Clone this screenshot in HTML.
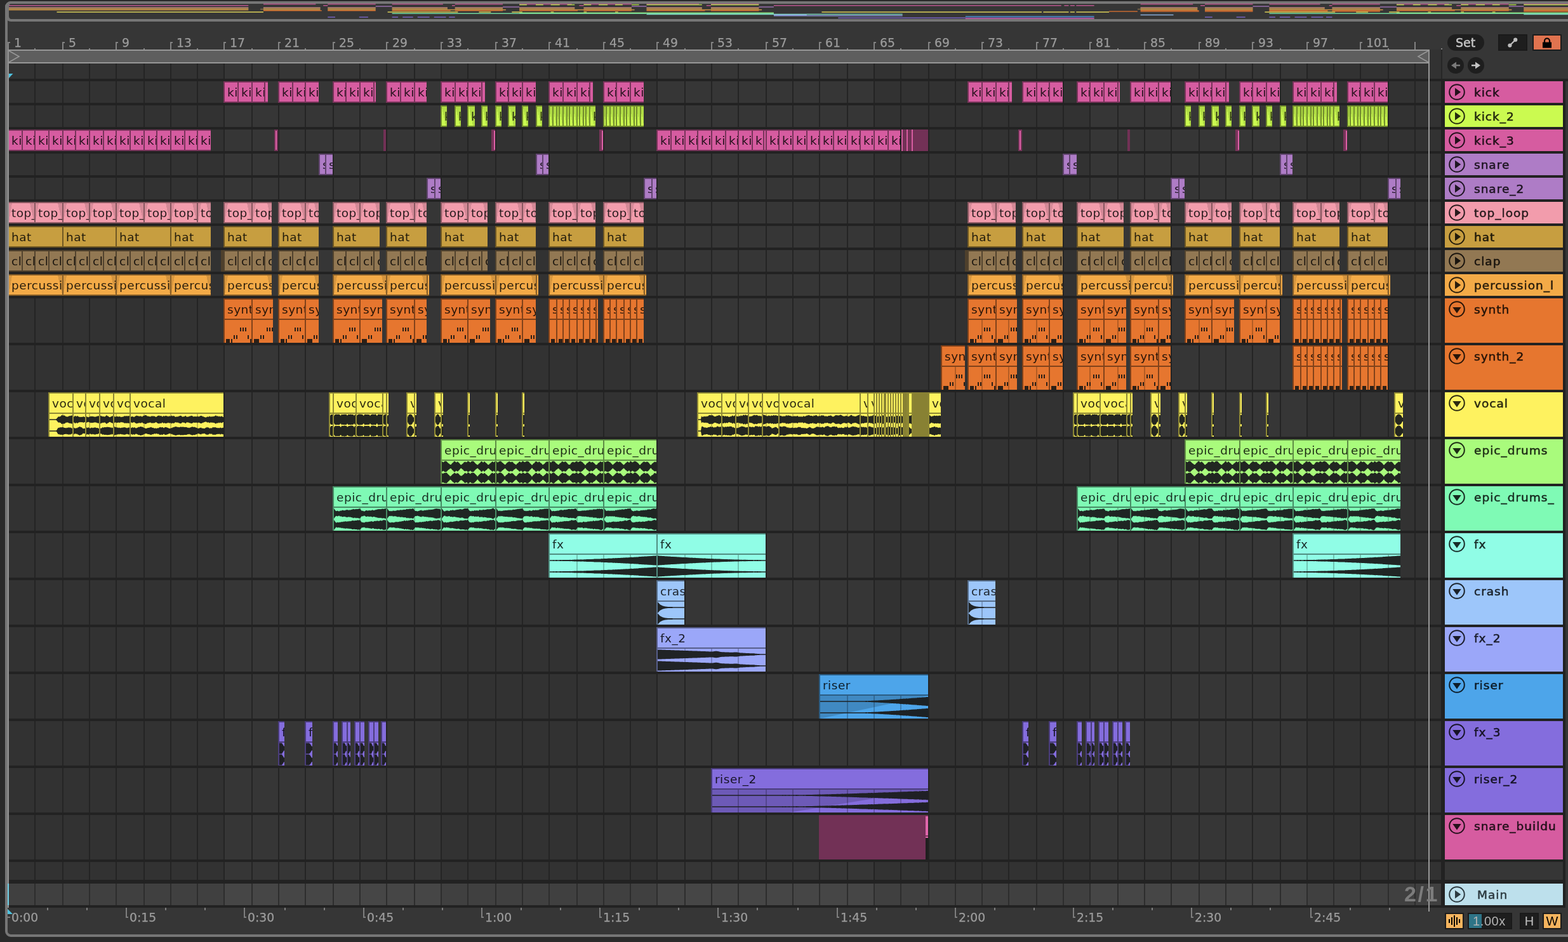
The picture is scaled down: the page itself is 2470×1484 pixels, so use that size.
<!DOCTYPE html><html><head><meta charset="utf-8"><title>Arrangement</title><style>
html,body{margin:0;padding:0}
body{width:2470px;height:1484px;background:#2a2a2a;position:relative;overflow:hidden;font-family:"DejaVu Sans","Liberation Sans",sans-serif}
div,i,b,s,u{position:absolute;box-sizing:border-box;font-style:normal;font-weight:normal;text-decoration:none}
svg{position:absolute;left:0;top:0;overflow:visible}
#frame{left:8px;top:2px;width:2500px;height:1474px;border:4px solid #767676;border-radius:9px;background:#363636}
#ov{left:8px;top:2px;width:2500px;height:32px;border:4px solid #767676;border-left-width:6px;border-radius:9px;background:#363636}
#grid{left:12px;top:100px;width:2258px;height:1330px;background:#323232}
.sep{left:12px;width:2458px;height:4px;background:#222}
#brace{left:12px;top:78px;width:2240px;height:22px;background:#5e5e5e;border:2px solid #979797}
.r{left:0;width:2270px;height:34px}
.r.t{height:70px}
.c{top:0;height:100%;border:2px solid var(--b);border-right:0;background:var(--f);color:var(--t);overflow:hidden;white-space:nowrap;font-size:18.5px;letter-spacing:.5px;line-height:32px;text-indent:4px}
.t .c{border-bottom:0;background:linear-gradient(var(--b),var(--b)) 0 30px/100% 2px no-repeat,var(--f)}
.c.mut{background:var(--m);border-color:var(--m)}
.c.sl{border-right:2px solid var(--b);background:#de62a8}
.c.sl2{border-left-width:4px;background:#de62a8}
.c.thin{border:0}
.c.nbw{border-left:0;background:linear-gradient(#1f1f1f,#1f1f1f) 0 34px/100% 36px no-repeat,linear-gradient(var(--b),var(--b)) 0 30px/100% 2px no-repeat,#e066ac}
.c.k2{background:linear-gradient(78deg,var(--f) 42%,#b0dc44 43%)}
.c.fd{background:linear-gradient(to bottom right,rgba(0,0,0,.11) 50%,transparent 50.5%) 0 0/5px 30px no-repeat,linear-gradient(to bottom left,rgba(0,0,0,.13) 50%,transparent 50.5%) 100% 0/7px 30px no-repeat,var(--f)}
.h{left:2276px;width:186px;height:34px;background:var(--f);color:var(--t);font:18.5px/36px "DejaVu Sans","Liberation Sans",sans-serif;-webkit-text-stroke:.55px currentColor;letter-spacing:1px;padding-left:46px;white-space:nowrap;overflow:hidden}
.h.t{height:70px}
.rl{font:18.8px/20px "DejaVu Sans","Liberation Sans",sans-serif;color:#9c9c9c;top:58px;white-space:nowrap;-webkit-text-stroke:.25px #9c9c9c}
.tl{font:18.8px/20px "DejaVu Sans","Liberation Sans",sans-serif;color:#9c9c9c;top:1436px;white-space:nowrap;-webkit-text-stroke:.25px #9c9c9c}

.k_kick{--f:#d65ca0;--b:#78345a;--t:#24101b;--m:#723156}
.k_kick_2{--f:#cbfa50;--b:#728c2d;--t:#232a0e;--m:#6d862b}
.k_kick_3{--f:#d65ca0;--b:#78345a;--t:#24101b;--m:#723156}
.k_snare{--f:#ae7cc6;--b:#61456f;--t:#1e1522;--m:#5d426a}
.k_snare_2{--f:#ae7cc6;--b:#61456f;--t:#1e1522;--m:#5d426a}
.k_top_loop{--f:#f29cac;--b:#885760;--t:#291b1d;--m:#81535c}
.k_hat{--f:#c79e40;--b:#6f5824;--t:#221b0b;--m:#6a5522}
.k_clap{--f:#927853;--b:#52432e;--t:#19140e;--m:#4e402c}
.k_percussion_l{--f:#f3aa47;--b:#885f28;--t:#291d0c;--m:#825b26}
.k_synth{--f:#e6762f;--b:#81421a;--t:#271408;--m:#7b3f19}
.k_synth_2{--f:#e6762f;--b:#81421a;--t:#271408;--m:#7b3f19}
.k_vocal{--f:#fef25f;--b:#8e8835;--t:#2b2910;--m:#888133}
.k_epic_drums{--f:#a9fb7c;--b:#5f8d45;--t:#1d2b15;--m:#5a8642}
.k_epic_drums_{--f:#7ffab5;--b:#478c65;--t:#162a1f;--m:#448661}
.k_fx{--f:#90fde6;--b:#518e81;--t:#182b27;--m:#4d877b}
.k_crash{--f:#9dc6fa;--b:#586f8c;--t:#1b222a;--m:#546a86}
.k_fx_2{--f:#9ba7f9;--b:#575e8b;--t:#1a1c2a;--m:#535985}
.k_riser{--f:#4da5ea;--b:#2b5c83;--t:#0d1c28;--m:#29587d}
.k_fx_3{--f:#846ddd;--b:#4a3d7c;--t:#161326;--m:#473a76}
.k_riser_2{--f:#846ddd;--b:#4a3d7c;--t:#161326;--m:#473a76}
.k_snare_buildu{--f:#d65ca0;--b:#78345a;--t:#24101b;--m:#723156}
</style></head><body><div id="all" style="left:0;top:0;width:2470px;height:1484px;will-change:transform">
<div id="frame"></div><div id="ov"></div>
<svg width="2470" height="40" viewBox="0 0 2470 40"><path d="M414.9 6.5H440.8M440.8 6.5H466.7M466.7 6.5H490.3M490.3 6.5H497.4M516.3 6.5H542.2M542.2 6.5H565.8M565.8 6.5H591.7M617.6 6.5H641.2M641.2 6.5H667.2M667.2 6.5H693.1M693.1 6.5H697.8M716.7 6.5H742.6M742.6 6.5H768.6M768.6 6.5H792.1M818.1 6.5H844.0M844.0 6.5H867.6M867.6 6.5H893.5M893.5 6.5H900.6M919.5 6.5H943.1M943.1 6.5H969.0M969.0 6.5H994.9M1018.5 6.5H1044.4M1044.4 6.5H1070.4M1070.4 6.5H1094.0M1094.0 6.5H1101.0M1119.9 6.5H1143.5M1143.5 6.5H1169.4M1169.4 6.5H1195.4M1796.6 6.5H1822.6M1822.6 6.5H1848.5M1848.5 6.5H1872.1M1872.1 6.5H1879.2M1898.0 6.5H1924.0M1924.0 6.5H1947.6M1947.6 6.5H1973.5M1999.4 6.5H2023.0M2023.0 6.5H2049.0M2049.0 6.5H2074.9M2074.9 6.5H2079.6M2098.5 6.5H2124.4M2124.4 6.5H2150.3M2150.3 6.5H2173.9M2199.9 6.5H2225.8M2225.8 6.5H2249.4M2249.4 6.5H2275.3M2275.3 6.5H2282.4M2301.3 6.5H2324.8M2324.8 6.5H2350.8M2350.8 6.5H2376.7M2400.3 6.5H2426.2M2426.2 6.5H2452.2M2452.2 6.5H2475.8" stroke="#b9558d" stroke-width="1.5" fill="none"/><path d="M818.1 7.6H829.9M844.0 7.6H855.8M867.6 7.6H881.7M893.5 7.6H905.3M919.5 7.6H931.3M943.1 7.6H957.2M969.0 7.6H980.8M994.9 7.6H1006.7M1018.5 7.6H1025.6M1025.6 7.6H1032.7M1032.7 7.6H1037.4M1037.4 7.6H1044.4M1044.4 7.6H1051.5M1051.5 7.6H1056.2M1056.2 7.6H1063.3M1063.3 7.6H1070.4M1070.4 7.6H1075.1M1075.1 7.6H1082.2M1082.2 7.6H1086.9M1086.9 7.6H1094.0M1094.0 7.6H1105.8M1119.9 7.6H1124.6M1124.6 7.6H1131.7M1131.7 7.6H1138.8M1138.8 7.6H1143.5M1143.5 7.6H1150.6M1150.6 7.6H1157.6M1157.6 7.6H1162.3M1162.3 7.6H1169.4M1169.4 7.6H1176.5M1176.5 7.6H1181.2M1181.2 7.6H1188.3M1188.3 7.6H1195.4M2199.9 7.6H2211.7M2225.8 7.6H2237.6M2249.4 7.6H2263.5M2275.3 7.6H2287.1M2301.3 7.6H2313.1M2324.8 7.6H2339.0M2350.8 7.6H2362.6M2376.7 7.6H2388.5M2400.3 7.6H2407.4M2407.4 7.6H2414.4M2414.4 7.6H2419.2M2419.2 7.6H2426.2M2426.2 7.6H2433.3M2433.3 7.6H2438.0M2438.0 7.6H2445.1M2445.1 7.6H2452.2M2452.2 7.6H2456.9M2456.9 7.6H2464.0M2464.0 7.6H2468.7M2468.7 7.6H2475.8" stroke="#b0d74b" stroke-width="1.5" fill="none"/><path d="M14.0 8.8H39.9M39.9 8.8H63.5M63.5 8.8H89.5M89.5 8.8H115.4M115.4 8.8H139.0M139.0 8.8H164.9M164.9 8.8H190.8M190.8 8.8H214.4M214.4 8.8H240.4M240.4 8.8H266.3M266.3 8.8H289.9M289.9 8.8H315.8M315.8 8.8H341.8M341.8 8.8H365.3M365.3 8.8H391.3M509.2 8.8H516.3M712.0 8.8H716.7M912.4 8.8H919.5M1112.8 8.8H1119.9M1218.9 8.8H1244.9M1244.9 8.8H1270.8M1270.8 8.8H1294.4M1294.4 8.8H1320.3M1320.3 8.8H1346.3M1346.3 8.8H1369.9M1369.9 8.8H1395.8M1395.8 8.8H1417.0M1417.0 8.8H1421.7M1421.7 8.8H1445.3M1445.3 8.8H1471.2M1471.2 8.8H1497.2M1497.2 8.8H1520.8M1520.8 8.8H1546.7M1546.7 8.8H1572.6M1572.6 8.8H1596.2M1596.2 8.8H1622.2M1622.2 8.8H1648.1M1648.1 8.8H1671.7M1676.4 8.8H1683.5M1685.8 8.8H1692.9M1695.3 8.8H1723.6M1891.0 8.8H1898.0M2093.8 8.8H2098.5M2294.2 8.8H2301.3" stroke="#b9558d" stroke-width="1.5" fill="none"/><path d="M591.7 9.9H603.5M603.5 9.9H617.6M994.9 9.9H1006.7M1006.7 9.9H1018.5M1973.5 9.9H1985.3M1985.3 9.9H1999.4M2376.7 9.9H2388.5M2388.5 9.9H2400.3" stroke="#986fac" stroke-width="1.5" fill="none"/><path d="M792.1 11.1H806.3M806.3 11.1H818.1M1195.4 11.1H1209.5M1209.5 11.1H1218.9M2173.9 11.1H2188.1M2188.1 11.1H2199.9" stroke="#986fac" stroke-width="1.5" fill="none"/><path d="M14.0 12.2H63.5M63.5 12.2H115.4M115.4 12.2H164.9M164.9 12.2H214.4M214.4 12.2H266.3M266.3 12.2H315.8M315.8 12.2H365.3M365.3 12.2H391.3M414.9 12.2H466.7M466.7 12.2H504.5M516.3 12.2H565.8M565.8 12.2H591.7M617.6 12.2H667.2M667.2 12.2H704.9M716.7 12.2H768.6M768.6 12.2H792.1M818.1 12.2H867.6M867.6 12.2H905.3M919.5 12.2H969.0M969.0 12.2H994.9M1018.5 12.2H1070.4M1070.4 12.2H1105.8M1119.9 12.2H1169.4M1169.4 12.2H1195.4M1796.6 12.2H1848.5M1848.5 12.2H1886.3M1898.0 12.2H1947.6M1947.6 12.2H1973.5M1999.4 12.2H2049.0M2049.0 12.2H2086.7M2098.5 12.2H2150.3M2150.3 12.2H2173.9M2199.9 12.2H2249.4M2249.4 12.2H2287.1M2301.3 12.2H2350.8M2350.8 12.2H2376.7M2400.3 12.2H2452.2M2452.2 12.2H2487.5" stroke="#d08a97" stroke-width="1.5" fill="none"/><path d="M14.0 13.3H115.4M115.4 13.3H214.4M214.4 13.3H315.8M315.8 13.3H391.3M414.9 13.3H504.5M516.3 13.3H591.7M617.6 13.3H704.9M716.7 13.3H792.1M818.1 13.3H905.3M919.5 13.3H994.9M1018.5 13.3H1105.8M1119.9 13.3H1195.4M1796.6 13.3H1886.3M1898.0 13.3H1973.5M1999.4 13.3H2086.7M2098.5 13.3H2173.9M2199.9 13.3H2287.1M2301.3 13.3H2376.7M2400.3 13.3H2487.5" stroke="#ad8b3e" stroke-width="1.5" fill="none"/><path d="M14.0 14.5H39.9M39.9 14.5H63.5M63.5 14.5H89.5M89.5 14.5H115.4M115.4 14.5H139.0M139.0 14.5H164.9M164.9 14.5H190.8M190.8 14.5H214.4M214.4 14.5H240.4M240.4 14.5H266.3M266.3 14.5H289.9M289.9 14.5H315.8M315.8 14.5H341.8M341.8 14.5H365.3M365.3 14.5H391.3M410.1 14.5H414.9M414.9 14.5H440.8M440.8 14.5H466.7M466.7 14.5H490.3M490.3 14.5H504.5M516.3 14.5H542.2M542.2 14.5H565.8M565.8 14.5H591.7M617.6 14.5H641.2M641.2 14.5H667.2M667.2 14.5H693.1M693.1 14.5H704.9M716.7 14.5H742.6M742.6 14.5H768.6M768.6 14.5H792.1M818.1 14.5H844.0M844.0 14.5H867.6M867.6 14.5H893.5M893.5 14.5H905.3M919.5 14.5H943.1M943.1 14.5H969.0M969.0 14.5H994.9M1018.5 14.5H1044.4M1044.4 14.5H1070.4M1070.4 14.5H1094.0M1094.0 14.5H1105.8M1119.9 14.5H1143.5M1143.5 14.5H1169.4M1169.4 14.5H1195.4M1791.9 14.5H1796.6M1796.6 14.5H1822.6M1822.6 14.5H1848.5M1848.5 14.5H1872.1M1872.1 14.5H1886.3M1898.0 14.5H1924.0M1924.0 14.5H1947.6M1947.6 14.5H1973.5M1999.4 14.5H2023.0M2023.0 14.5H2049.0M2049.0 14.5H2074.9M2074.9 14.5H2086.7M2098.5 14.5H2124.4M2124.4 14.5H2150.3M2150.3 14.5H2173.9M2199.9 14.5H2225.8M2225.8 14.5H2249.4M2249.4 14.5H2275.3M2275.3 14.5H2287.1M2301.3 14.5H2324.8M2324.8 14.5H2350.8M2350.8 14.5H2376.7M2400.3 14.5H2426.2M2426.2 14.5H2452.2M2452.2 14.5H2475.8" stroke="#816c4e" stroke-width="1.5" fill="none"/><path d="M14.0 15.6H115.4M115.4 15.6H214.4M214.4 15.6H315.8M315.8 15.6H391.3M414.9 15.6H504.5M516.3 15.6H591.7M617.6 15.6H716.7M716.7 15.6H792.1M792.1 15.6H796.9M818.1 15.6H919.5M919.5 15.6H994.9M994.9 15.6H999.6M1018.5 15.6H1119.9M1119.9 15.6H1195.4M1195.4 15.6H1200.1M1796.6 15.6H1886.3M1898.0 15.6H1973.5M1999.4 15.6H2098.5M2098.5 15.6H2173.9M2173.9 15.6H2178.6M2199.9 15.6H2301.3M2301.3 15.6H2376.7M2376.7 15.6H2381.4M2400.3 15.6H2501.7" stroke="#d19544" stroke-width="1.5" fill="none"/><path d="M414.9 16.8H466.7M466.7 16.8H506.8M516.3 16.8H565.8M565.8 16.8H591.7M617.6 16.8H667.2M667.2 16.8H709.6M716.7 16.8H768.6M768.6 16.8H792.1M818.1 16.8H867.6M867.6 16.8H910.0M919.5 16.8H969.0M969.0 16.8H994.9M1018.5 16.8H1032.7M1032.7 16.8H1044.4M1044.4 16.8H1056.2M1056.2 16.8H1070.4M1070.4 16.8H1082.2M1082.2 16.8H1094.0M1094.0 16.8H1105.8M1105.8 16.8H1110.5M1119.9 16.8H1131.7M1131.7 16.8H1143.5M1143.5 16.8H1157.6M1157.6 16.8H1169.4M1169.4 16.8H1181.2M1181.2 16.8H1195.4M1796.6 16.8H1848.5M1848.5 16.8H1888.6M1898.0 16.8H1947.6M1947.6 16.8H1973.5M1999.4 16.8H2049.0M2049.0 16.8H2091.4M2098.5 16.8H2150.3M2150.3 16.8H2173.9M2199.9 16.8H2249.4M2249.4 16.8H2291.8M2301.3 16.8H2350.8M2350.8 16.8H2376.7M2400.3 16.8H2414.4M2414.4 16.8H2426.2M2426.2 16.8H2438.0M2438.0 16.8H2452.2M2452.2 16.8H2464.0M2464.0 16.8H2475.8" stroke="#c66a30" stroke-width="1.5" fill="none"/><path d="M1747.1 17.9H1791.9M1796.6 17.9H1848.5M1848.5 17.9H1888.6M1898.0 17.9H1947.6M1947.6 17.9H1973.5M1999.4 17.9H2049.0M2049.0 17.9H2091.4M2098.5 17.9H2150.3M2150.3 17.9H2173.9M2400.3 17.9H2414.4M2414.4 17.9H2426.2M2426.2 17.9H2438.0M2438.0 17.9H2452.2M2452.2 17.9H2464.0M2464.0 17.9H2475.8" stroke="#c66a30" stroke-width="1.5" fill="none"/><path d="M89.5 19.0H134.3M134.3 19.0H157.8M157.8 19.0H183.8M183.8 19.0H209.7M209.7 19.0H240.4M240.4 19.0H414.9M610.6 19.0H617.6M617.6 19.0H660.1M660.1 19.0H709.6M709.6 19.0H716.7M716.7 19.0H721.4M754.4 19.0H768.6M768.6 19.0H773.3M806.3 19.0H818.1M818.1 19.0H822.8M867.6 19.0H872.3M919.5 19.0H924.2M969.0 19.0H973.7M1294.4 19.0H1339.2M1339.2 19.0H1365.1M1365.1 19.0H1388.7M1388.7 19.0H1414.7M1414.7 19.0H1445.3M1445.3 19.0H1596.2M1596.2 19.0H1610.4M1610.4 19.0H1622.2M1622.2 19.0H1626.9M1626.9 19.0H1631.6M1631.6 19.0H1636.3M1636.3 19.0H1641.0M1643.4 19.0H1648.1M1648.1 19.0H1652.8M1652.8 19.0H1657.5M1657.5 19.0H1662.2M1662.2 19.0H1667.0M1667.0 19.0H1671.7M1671.7 19.0H1676.4M1676.4 19.0H1683.5M1685.8 19.0H1692.9M1695.3 19.0H1723.6M1723.6 19.0H1747.1M1992.4 19.0H1999.4M1999.4 19.0H2041.9M2041.9 19.0H2091.4M2091.4 19.0H2098.5M2098.5 19.0H2103.2M2136.2 19.0H2150.3M2150.3 19.0H2155.1M2188.1 19.0H2199.9M2199.9 19.0H2204.6M2249.4 19.0H2254.1M2301.3 19.0H2306.0M2350.8 19.0H2355.5" stroke="#dad058" stroke-width="1.5" fill="none"/><path d="M818.1 20.2H919.5M919.5 20.2H1018.5M1018.5 20.2H1119.9M1119.9 20.2H1218.9M2199.9 20.2H2301.3M2301.3 20.2H2400.3M2400.3 20.2H2501.7" stroke="#94d86f" stroke-width="1.5" fill="none"/><path d="M617.6 21.3H716.7M716.7 21.3H818.1M818.1 21.3H919.5M919.5 21.3H1018.5M1018.5 21.3H1119.9M1119.9 21.3H1218.9M1999.4 21.3H2098.5M2098.5 21.3H2199.9M2199.9 21.3H2301.3M2301.3 21.3H2400.3M2400.3 21.3H2501.7" stroke="#72d79e" stroke-width="1.5" fill="none"/><path d="M1018.5 22.5H1218.9M1218.9 22.5H1421.7M2400.3 22.5H2600.7" stroke="#80d9c6" stroke-width="1.5" fill="none"/><path d="M1218.9 23.6H1270.8M1796.6 23.6H1848.5" stroke="#8aacd7" stroke-width="1.5" fill="none"/><path d="M1218.9 24.7H1421.7" stroke="#8993d6" stroke-width="1.5" fill="none"/><path d="M1520.8 25.9H1723.6" stroke="#4991ca" stroke-width="1.5" fill="none"/><path d="M516.3 27.0H528.0M565.8 27.0H579.9M617.6 27.0H627.1M634.2 27.0H643.6M643.6 27.0H650.7M657.7 27.0H667.2M667.2 27.0H676.6M683.7 27.0H693.1M693.1 27.0H702.5M707.3 27.0H716.7M1898.0 27.0H1909.8M1947.6 27.0H1961.7M1999.4 27.0H2008.9M2015.9 27.0H2025.4M2025.4 27.0H2032.4M2039.5 27.0H2049.0M2049.0 27.0H2058.4M2065.5 27.0H2074.9M2074.9 27.0H2084.3M2089.0 27.0H2098.5" stroke="#7663bf" stroke-width="1.5" fill="none"/><path d="M1320.3 28.2H1723.6" stroke="#7663bf" stroke-width="1.5" fill="none"/><path d="M1520.8 29.3H1718.8M1718.8 29.3H1723.6" stroke="#b9558d" stroke-width="1.5" fill="none"/></svg>
<div id="grid"></div>
<div style="left:352px;top:100px;width:342px;height:1292px;background:#363636"></div>
<div style="left:1034px;top:100px;width:342px;height:1292px;background:#363636"></div>
<div style="left:1716px;top:100px;width:342px;height:1292px;background:#363636"></div>
<div style="left:12px;top:1392px;width:2258px;height:34px;background:#404040"></div>
<div style="left:352px;top:1392px;width:342px;height:34px;background:#464646"></div>
<div style="left:1034px;top:1392px;width:342px;height:34px;background:#464646"></div>
<div style="left:1716px;top:1392px;width:342px;height:34px;background:#464646"></div>
<svg width="2470" height="1484" viewBox="0 0 2470 1484"><path d="M55 100V1392M99 100V1392M141 100V1392M183 100V1392M227 100V1392M269 100V1392M311 100V1392M353 100V1392M397 100V1392M439 100V1392M481 100V1392M525 100V1392M567 100V1392M609 100V1392M653 100V1392M695 100V1392M737 100V1392M781 100V1392M823 100V1392M865 100V1392M909 100V1392M951 100V1392M993 100V1392M1035 100V1392M1079 100V1392M1121 100V1392M1163 100V1392M1207 100V1392M1249 100V1392M1291 100V1392M1335 100V1392M1377 100V1392M1419 100V1392M1463 100V1392M1505 100V1392M1547 100V1392M1589 100V1392M1633 100V1392M1675 100V1392M1717 100V1392M1761 100V1392M1803 100V1392M1845 100V1392M1889 100V1392M1931 100V1392M1973 100V1392M2017 100V1392M2059 100V1392M2101 100V1392M2143 100V1392M2187 100V1392M2229 100V1392" stroke="#242424" stroke-width="2"/><path d="M55 1392V1426M99 1392V1426M141 1392V1426M183 1392V1426M227 1392V1426M269 1392V1426M311 1392V1426M353 1392V1426M397 1392V1426M439 1392V1426M481 1392V1426M525 1392V1426M567 1392V1426M609 1392V1426M653 1392V1426M695 1392V1426M737 1392V1426M781 1392V1426M823 1392V1426M865 1392V1426M909 1392V1426M951 1392V1426M993 1392V1426M1035 1392V1426M1079 1392V1426M1121 1392V1426M1163 1392V1426M1207 1392V1426M1249 1392V1426M1291 1392V1426M1335 1392V1426M1377 1392V1426M1419 1392V1426M1463 1392V1426M1505 1392V1426M1547 1392V1426M1589 1392V1426M1633 1392V1426M1675 1392V1426M1717 1392V1426M1761 1392V1426M1803 1392V1426M1845 1392V1426M1889 1392V1426M1931 1392V1426M1973 1392V1426M2017 1392V1426M2059 1392V1426M2101 1392V1426M2143 1392V1426M2187 1392V1426M2229 1392V1426" stroke="#2d2d2d" stroke-width="2"/></svg>
<div class="sep" style="top:124px"></div>
<div class="sep" style="top:162px"></div>
<div class="sep" style="top:200px"></div>
<div class="sep" style="top:238px"></div>
<div class="sep" style="top:276px"></div>
<div class="sep" style="top:314px"></div>
<div class="sep" style="top:352px"></div>
<div class="sep" style="top:390px"></div>
<div class="sep" style="top:428px"></div>
<div class="sep" style="top:466px"></div>
<div class="sep" style="top:540px"></div>
<div class="sep" style="top:614px"></div>
<div class="sep" style="top:688px"></div>
<div class="sep" style="top:762px"></div>
<div class="sep" style="top:836px"></div>
<div class="sep" style="top:910px"></div>
<div class="sep" style="top:984px"></div>
<div class="sep" style="top:1058px"></div>
<div class="sep" style="top:1132px"></div>
<div class="sep" style="top:1206px"></div>
<div class="sep" style="top:1280px"></div>
<div class="sep" style="top:1354px"></div>
<div class="sep" style="top:1426px"></div>
<div class="sep" style="top:1386px;height:6px"></div>
<div style="left:2252px;top:78px;width:18px;height:22px;background:#323232"></div>
<div style="left:2272px;top:78px;width:198px;height:46px;background:#363636"></div>
<div style="left:2270px;top:78px;width:2px;height:46px;background:#262626"></div>
<div style="left:2270px;top:124px;width:6px;height:1306px;background:#222"></div>
<div style="left:2462px;top:124px;width:4px;height:1306px;background:#222"></div>
<div style="left:2466px;top:128px;width:4px;height:1302px;background:#363636"></div>
<div style="left:2276px;top:1358px;width:186px;height:28px;background:#363636"></div>
<div class="r k_kick" style="top:128px"><i class="c" style="left:352px;width:22px">kick</i><i class="c" style="left:374px;width:22px">kick</i><i class="c" style="left:396px;width:20px">kick</i><i class="c" style="left:416px;width:6px"></i><i class="c" style="left:438px;width:22px">kick</i><i class="c" style="left:460px;width:20px">kick</i><i class="c" style="left:480px;width:22px">kick</i><i class="c" style="left:524px;width:20px">kick</i><i class="c" style="left:544px;width:22px">kick</i><i class="c" style="left:566px;width:22px">kick</i><i class="c" style="left:588px;width:4px"></i><i class="c" style="left:608px;width:22px">kick</i><i class="c" style="left:630px;width:22px">kick</i><i class="c" style="left:652px;width:20px">kick</i><i class="c" style="left:694px;width:22px">kick</i><i class="c" style="left:716px;width:20px">kick</i><i class="c" style="left:736px;width:22px">kick</i><i class="c" style="left:758px;width:6px"></i><i class="c" style="left:780px;width:20px">kick</i><i class="c" style="left:800px;width:22px">kick</i><i class="c" style="left:822px;width:22px">kick</i><i class="c" style="left:864px;width:22px">kick</i><i class="c" style="left:886px;width:22px">kick</i><i class="c" style="left:908px;width:20px">kick</i><i class="c" style="left:928px;width:6px"></i><i class="c" style="left:950px;width:20px">kick</i><i class="c" style="left:970px;width:22px">kick</i><i class="c" style="left:992px;width:22px">kick</i><i class="c" style="left:1524px;width:22px">kick</i><i class="c" style="left:1546px;width:22px">kick</i><i class="c" style="left:1568px;width:20px">kick</i><i class="c" style="left:1588px;width:6px"></i><i class="c" style="left:1610px;width:22px">kick</i><i class="c" style="left:1632px;width:20px">kick</i><i class="c" style="left:1652px;width:22px">kick</i><i class="c" style="left:1696px;width:20px">kick</i><i class="c" style="left:1716px;width:22px">kick</i><i class="c" style="left:1738px;width:22px">kick</i><i class="c" style="left:1760px;width:4px"></i><i class="c" style="left:1780px;width:22px">kick</i><i class="c" style="left:1802px;width:22px">kick</i><i class="c" style="left:1824px;width:20px">kick</i><i class="c" style="left:1866px;width:22px">kick</i><i class="c" style="left:1888px;width:20px">kick</i><i class="c" style="left:1908px;width:22px">kick</i><i class="c" style="left:1930px;width:6px"></i><i class="c" style="left:1952px;width:20px">kick</i><i class="c" style="left:1972px;width:22px">kick</i><i class="c" style="left:1994px;width:22px">kick</i><i class="c" style="left:2036px;width:22px">kick</i><i class="c" style="left:2058px;width:22px">kick</i><i class="c" style="left:2080px;width:20px">kick</i><i class="c" style="left:2100px;width:6px"></i><i class="c" style="left:2122px;width:20px">kick</i><i class="c" style="left:2142px;width:22px">kick</i><i class="c" style="left:2164px;width:22px">kick</i></div>
<div class="r k_kick_2" style="top:166px"><i class="c k2" style="left:694px;width:10px">kick_2</i><i class="c k2" style="left:716px;width:10px">kick_2</i><i class="c k2" style="left:736px;width:12px">kick_2</i><i class="c k2" style="left:758px;width:10px">kick_2</i><i class="c k2" style="left:780px;width:10px">kick_2</i><i class="c k2" style="left:800px;width:12px">kick_2</i><i class="c k2" style="left:822px;width:10px">kick_2</i><i class="c k2" style="left:844px;width:10px">kick_2</i><i class="c k2" style="left:864px;width:6px"></i><i class="c k2" style="left:870px;width:6px"></i><i class="c k2" style="left:876px;width:4px"></i><i class="c k2" style="left:880px;width:6px"></i><i class="c k2" style="left:886px;width:6px"></i><i class="c k2" style="left:892px;width:4px"></i><i class="c k2" style="left:896px;width:6px"></i><i class="c k2" style="left:902px;width:6px"></i><i class="c k2" style="left:908px;width:4px"></i><i class="c k2" style="left:912px;width:6px"></i><i class="c k2" style="left:918px;width:4px"></i><i class="c k2" style="left:922px;width:6px"></i><i class="c k2" style="left:928px;width:10px">kick_2</i><i class="c k2" style="left:950px;width:4px"></i><i class="c k2" style="left:954px;width:6px"></i><i class="c k2" style="left:960px;width:6px"></i><i class="c k2" style="left:966px;width:4px"></i><i class="c k2" style="left:970px;width:6px"></i><i class="c k2" style="left:976px;width:6px"></i><i class="c k2" style="left:982px;width:4px"></i><i class="c k2" style="left:986px;width:6px"></i><i class="c k2" style="left:992px;width:6px"></i><i class="c k2" style="left:998px;width:4px"></i><i class="c k2" style="left:1002px;width:6px"></i><i class="c k2" style="left:1008px;width:6px"></i><i class="c k2" style="left:1866px;width:10px">kick_2</i><i class="c k2" style="left:1888px;width:10px">kick_2</i><i class="c k2" style="left:1908px;width:12px">kick_2</i><i class="c k2" style="left:1930px;width:10px">kick_2</i><i class="c k2" style="left:1952px;width:10px">kick_2</i><i class="c k2" style="left:1972px;width:12px">kick_2</i><i class="c k2" style="left:1994px;width:10px">kick_2</i><i class="c k2" style="left:2016px;width:10px">kick_2</i><i class="c k2" style="left:2036px;width:6px"></i><i class="c k2" style="left:2042px;width:6px"></i><i class="c k2" style="left:2048px;width:4px"></i><i class="c k2" style="left:2052px;width:6px"></i><i class="c k2" style="left:2058px;width:6px"></i><i class="c k2" style="left:2064px;width:4px"></i><i class="c k2" style="left:2068px;width:6px"></i><i class="c k2" style="left:2074px;width:6px"></i><i class="c k2" style="left:2080px;width:4px"></i><i class="c k2" style="left:2084px;width:6px"></i><i class="c k2" style="left:2090px;width:4px"></i><i class="c k2" style="left:2094px;width:6px"></i><i class="c k2" style="left:2100px;width:10px">kick_2</i><i class="c k2" style="left:2122px;width:4px"></i><i class="c k2" style="left:2126px;width:6px"></i><i class="c k2" style="left:2132px;width:6px"></i><i class="c k2" style="left:2138px;width:4px"></i><i class="c k2" style="left:2142px;width:6px"></i><i class="c k2" style="left:2148px;width:6px"></i><i class="c k2" style="left:2154px;width:4px"></i><i class="c k2" style="left:2158px;width:6px"></i><i class="c k2" style="left:2164px;width:6px"></i><i class="c k2" style="left:2170px;width:4px"></i><i class="c k2" style="left:2174px;width:6px"></i><i class="c k2" style="left:2180px;width:6px"></i></div>
<div class="r k_kick_3" style="top:204px"><i class="c" style="left:12px;width:22px">kick</i><i class="c" style="left:34px;width:20px">kick</i><i class="c" style="left:54px;width:22px">kick</i><i class="c" style="left:76px;width:22px">kick</i><i class="c" style="left:98px;width:20px">kick</i><i class="c" style="left:118px;width:22px">kick</i><i class="c" style="left:140px;width:22px">kick</i><i class="c" style="left:162px;width:20px">kick</i><i class="c" style="left:182px;width:22px">kick</i><i class="c" style="left:204px;width:22px">kick</i><i class="c" style="left:226px;width:20px">kick</i><i class="c" style="left:246px;width:22px">kick</i><i class="c" style="left:268px;width:22px">kick</i><i class="c" style="left:290px;width:20px">kick</i><i class="c" style="left:310px;width:22px">kick</i><i class="c sl" style="left:432px;width:6px"></i><i class="c mut" style="left:604px;width:4px"></i><i class="c sl2" style="left:774px;width:6px"></i><i class="c sl2" style="left:944px;width:6px"></i><i class="c" style="left:1034px;width:22px">kick</i><i class="c" style="left:1056px;width:22px">kick</i><i class="c" style="left:1078px;width:20px">kick</i><i class="c" style="left:1098px;width:22px">kick</i><i class="c" style="left:1120px;width:22px">kick</i><i class="c" style="left:1142px;width:20px">kick</i><i class="c" style="left:1162px;width:22px">kick</i><i class="c" style="left:1184px;width:18px">kick</i><i class="c" style="left:1202px;width:4px"></i><i class="c" style="left:1206px;width:20px">kick</i><i class="c" style="left:1226px;width:22px">kick</i><i class="c" style="left:1248px;width:22px">kick</i><i class="c" style="left:1270px;width:20px">kick</i><i class="c" style="left:1290px;width:22px">kick</i><i class="c" style="left:1312px;width:22px">kick</i><i class="c" style="left:1334px;width:20px">kick</i><i class="c" style="left:1354px;width:22px">kick</i><i class="c" style="left:1376px;width:22px">kick</i><i class="c" style="left:1398px;width:20px">kick</i><i class="c thin" style="left:1420px;width:2px"></i><i class="c mut" style="left:1422px;width:6px"></i><i class="c thin" style="left:1428px;width:2px"></i><i class="c mut" style="left:1430px;width:6px"></i><i class="c thin" style="left:1436px;width:2px"></i><i class="c mut" style="left:1438px;width:24px"></i><i class="c sl" style="left:1604px;width:6px"></i><i class="c mut" style="left:1776px;width:4px"></i><i class="c sl2" style="left:1946px;width:6px"></i><i class="c sl2" style="left:2116px;width:6px"></i></div>
<div class="r k_snare" style="top:242px"><i class="c" style="left:502px;width:10px">snare</i><i class="c" style="left:512px;width:12px">snare</i><i class="c" style="left:844px;width:10px">snare</i><i class="c" style="left:854px;width:10px">snare</i><i class="c" style="left:1674px;width:10px">snare</i><i class="c" style="left:1684px;width:12px">snare</i><i class="c" style="left:2016px;width:10px">snare</i><i class="c" style="left:2026px;width:10px">snare</i></div>
<div class="r k_snare_2" style="top:280px"><i class="c" style="left:672px;width:12px">snare</i><i class="c" style="left:684px;width:10px">snare</i><i class="c" style="left:1014px;width:12px">snare</i><i class="c" style="left:1026px;width:8px">snare</i><i class="c" style="left:1844px;width:12px">snare</i><i class="c" style="left:1856px;width:10px">snare</i><i class="c" style="left:2186px;width:12px">snare</i><i class="c" style="left:2198px;width:8px">snare</i></div>
<div class="r k_top_loop" style="top:318px"><i class="c fd" style="left:12px;width:42px">top_loop</i><i class="c fd" style="left:54px;width:44px">top_loop</i><i class="c fd" style="left:98px;width:42px">top_loop</i><i class="c fd" style="left:140px;width:42px">top_loop</i><i class="c fd" style="left:182px;width:44px">top_loop</i><i class="c fd" style="left:226px;width:42px">top_loop</i><i class="c fd" style="left:268px;width:42px">top_loop</i><i class="c fd" style="left:310px;width:22px">top_loop</i><i class="c fd" style="left:352px;width:44px">top_loop</i><i class="c fd" style="left:396px;width:32px">top_loop</i><i class="c fd" style="left:438px;width:42px">top_loop</i><i class="c fd" style="left:480px;width:22px">top_loop</i><i class="c fd" style="left:524px;width:42px">top_loop</i><i class="c fd" style="left:566px;width:32px">top_loop</i><i class="c fd" style="left:608px;width:44px">top_loop</i><i class="c fd" style="left:652px;width:20px">top_loop</i><i class="c fd" style="left:694px;width:42px">top_loop</i><i class="c fd" style="left:736px;width:32px">top_loop</i><i class="c fd" style="left:780px;width:42px">top_loop</i><i class="c fd" style="left:822px;width:22px">top_loop</i><i class="c fd" style="left:864px;width:44px">top_loop</i><i class="c fd" style="left:908px;width:30px">top_loop</i><i class="c fd" style="left:950px;width:42px">top_loop</i><i class="c fd" style="left:992px;width:22px">top_loop</i><i class="c fd" style="left:1524px;width:44px">top_loop</i><i class="c fd" style="left:1568px;width:32px">top_loop</i><i class="c fd" style="left:1610px;width:42px">top_loop</i><i class="c fd" style="left:1652px;width:22px">top_loop</i><i class="c fd" style="left:1696px;width:42px">top_loop</i><i class="c fd" style="left:1738px;width:32px">top_loop</i><i class="c fd" style="left:1780px;width:44px">top_loop</i><i class="c fd" style="left:1824px;width:20px">top_loop</i><i class="c fd" style="left:1866px;width:42px">top_loop</i><i class="c fd" style="left:1908px;width:32px">top_loop</i><i class="c fd" style="left:1952px;width:42px">top_loop</i><i class="c fd" style="left:1994px;width:22px">top_loop</i><i class="c fd" style="left:2036px;width:44px">top_loop</i><i class="c fd" style="left:2080px;width:30px">top_loop</i><i class="c fd" style="left:2122px;width:42px">top_loop</i><i class="c fd" style="left:2164px;width:22px">top_loop</i></div>
<div class="r k_hat" style="top:356px"><i class="c" style="left:12px;width:86px">hat</i><i class="c" style="left:98px;width:84px">hat</i><i class="c" style="left:182px;width:86px">hat</i><i class="c" style="left:268px;width:64px">hat</i><i class="c" style="left:352px;width:76px">hat</i><i class="c" style="left:438px;width:64px">hat</i><i class="c" style="left:524px;width:74px">hat</i><i class="c" style="left:608px;width:64px">hat</i><i class="c" style="left:694px;width:74px">hat</i><i class="c" style="left:780px;width:64px">hat</i><i class="c" style="left:864px;width:74px">hat</i><i class="c" style="left:950px;width:64px">hat</i><i class="c" style="left:1524px;width:76px">hat</i><i class="c" style="left:1610px;width:64px">hat</i><i class="c" style="left:1696px;width:74px">hat</i><i class="c" style="left:1780px;width:64px">hat</i><i class="c" style="left:1866px;width:74px">hat</i><i class="c" style="left:1952px;width:64px">hat</i><i class="c" style="left:2036px;width:74px">hat</i><i class="c" style="left:2122px;width:64px">hat</i></div>
<div class="r k_clap" style="top:394px"><i class="c" style="left:12px;width:22px">clap</i><i class="c" style="left:34px;width:20px">clap</i><i class="c" style="left:54px;width:22px">clap</i><i class="c" style="left:76px;width:22px">clap</i><i class="c" style="left:98px;width:20px">clap</i><i class="c" style="left:118px;width:22px">clap</i><i class="c" style="left:140px;width:22px">clap</i><i class="c" style="left:162px;width:20px">clap</i><i class="c" style="left:182px;width:22px">clap</i><i class="c" style="left:204px;width:22px">clap</i><i class="c" style="left:226px;width:20px">clap</i><i class="c" style="left:246px;width:22px">clap</i><i class="c" style="left:268px;width:22px">clap</i><i class="c" style="left:290px;width:20px">clap</i><i class="c" style="left:310px;width:22px">clap</i><i class="c mut" style="left:348px;width:4px"></i><i class="c" style="left:352px;width:22px">clap</i><i class="c" style="left:374px;width:22px">clap</i><i class="c" style="left:396px;width:20px">clap</i><i class="c" style="left:416px;width:12px">clap</i><i class="c" style="left:438px;width:22px">clap</i><i class="c" style="left:460px;width:20px">clap</i><i class="c" style="left:480px;width:22px">clap</i><i class="c" style="left:524px;width:20px">clap</i><i class="c" style="left:544px;width:22px">clap</i><i class="c" style="left:566px;width:22px">clap</i><i class="c" style="left:588px;width:10px">clap</i><i class="c" style="left:608px;width:22px">clap</i><i class="c" style="left:630px;width:22px">clap</i><i class="c" style="left:652px;width:20px">clap</i><i class="c" style="left:694px;width:22px">clap</i><i class="c" style="left:716px;width:20px">clap</i><i class="c" style="left:736px;width:22px">clap</i><i class="c" style="left:758px;width:10px">clap</i><i class="c" style="left:780px;width:20px">clap</i><i class="c" style="left:800px;width:22px">clap</i><i class="c" style="left:822px;width:22px">clap</i><i class="c" style="left:864px;width:22px">clap</i><i class="c" style="left:886px;width:22px">clap</i><i class="c" style="left:908px;width:20px">clap</i><i class="c" style="left:928px;width:10px">clap</i><i class="c" style="left:950px;width:20px">clap</i><i class="c" style="left:970px;width:22px">clap</i><i class="c" style="left:992px;width:22px">clap</i><i class="c mut" style="left:1520px;width:4px"></i><i class="c" style="left:1524px;width:22px">clap</i><i class="c" style="left:1546px;width:22px">clap</i><i class="c" style="left:1568px;width:20px">clap</i><i class="c" style="left:1588px;width:12px">clap</i><i class="c" style="left:1610px;width:22px">clap</i><i class="c" style="left:1632px;width:20px">clap</i><i class="c" style="left:1652px;width:22px">clap</i><i class="c" style="left:1696px;width:20px">clap</i><i class="c" style="left:1716px;width:22px">clap</i><i class="c" style="left:1738px;width:22px">clap</i><i class="c" style="left:1760px;width:10px">clap</i><i class="c" style="left:1780px;width:22px">clap</i><i class="c" style="left:1802px;width:22px">clap</i><i class="c" style="left:1824px;width:20px">clap</i><i class="c" style="left:1866px;width:22px">clap</i><i class="c" style="left:1888px;width:20px">clap</i><i class="c" style="left:1908px;width:22px">clap</i><i class="c" style="left:1930px;width:10px">clap</i><i class="c" style="left:1952px;width:20px">clap</i><i class="c" style="left:1972px;width:22px">clap</i><i class="c" style="left:1994px;width:22px">clap</i><i class="c" style="left:2036px;width:22px">clap</i><i class="c" style="left:2058px;width:22px">clap</i><i class="c" style="left:2080px;width:20px">clap</i><i class="c" style="left:2100px;width:10px">clap</i><i class="c" style="left:2122px;width:20px">clap</i><i class="c" style="left:2142px;width:22px">clap</i><i class="c" style="left:2164px;width:22px">clap</i></div>
<div class="r k_percussion_l" style="top:432px"><i class="c fd" style="left:12px;width:86px">percussion_loop</i><i class="c fd" style="left:98px;width:84px">percussion_loop</i><i class="c fd" style="left:182px;width:86px">percussion_loop</i><i class="c fd" style="left:268px;width:64px">percussion_loop</i><i class="c fd" style="left:352px;width:76px">percussion_loop</i><i class="c fd" style="left:438px;width:64px">percussion_loop</i><i class="c fd" style="left:524px;width:84px">percussion_loop</i><i class="c fd" style="left:608px;width:64px">percussion_loop</i><i class="c" style="left:672px;width:4px"></i><i class="c fd" style="left:694px;width:86px">percussion_loop</i><i class="c fd" style="left:780px;width:64px">percussion_loop</i><i class="c" style="left:844px;width:4px"></i><i class="c fd" style="left:864px;width:86px">percussion_loop</i><i class="c fd" style="left:950px;width:64px">percussion_loop</i><i class="c" style="left:1014px;width:4px"></i><i class="c fd" style="left:1524px;width:76px">percussion_loop</i><i class="c fd" style="left:1610px;width:64px">percussion_loop</i><i class="c fd" style="left:1696px;width:84px">percussion_loop</i><i class="c fd" style="left:1780px;width:64px">percussion_loop</i><i class="c" style="left:1844px;width:4px"></i><i class="c fd" style="left:1866px;width:86px">percussion_loop</i><i class="c fd" style="left:1952px;width:64px">percussion_loop</i><i class="c" style="left:2016px;width:4px"></i><i class="c fd" style="left:2036px;width:86px">percussion_loop</i><i class="c fd" style="left:2122px;width:64px">percussion_loop</i><i class="c" style="left:2186px;width:4px"></i></div>
<div class="r t k_synth" style="top:470px"><i class="c" style="left:352px;width:44px">synth</i><i class="c" style="left:396px;width:34px">synth</i><i class="c" style="left:438px;width:42px">synth</i><i class="c" style="left:480px;width:22px">synth</i><i class="c" style="left:524px;width:42px">synth</i><i class="c" style="left:566px;width:36px">synth</i><i class="c" style="left:608px;width:44px">synth</i><i class="c" style="left:652px;width:20px">synth</i><i class="c" style="left:694px;width:42px">synth</i><i class="c" style="left:736px;width:36px">synth</i><i class="c" style="left:780px;width:42px">synth</i><i class="c" style="left:822px;width:22px">synth</i><i class="c" style="left:864px;width:12px">synth</i><i class="c" style="left:876px;width:10px">synth</i><i class="c" style="left:886px;width:10px">synth</i><i class="c" style="left:896px;width:12px">synth</i><i class="c" style="left:908px;width:10px">synth</i><i class="c" style="left:918px;width:10px">synth</i><i class="c" style="left:928px;width:10px">synth</i><i class="c" style="left:938px;width:4px"></i><i class="c" style="left:950px;width:10px">synth</i><i class="c" style="left:960px;width:10px">synth</i><i class="c" style="left:970px;width:12px">synth</i><i class="c" style="left:982px;width:10px">synth</i><i class="c" style="left:992px;width:10px">synth</i><i class="c" style="left:1002px;width:12px">synth</i><i class="c" style="left:1524px;width:44px">synth</i><i class="c" style="left:1568px;width:34px">synth</i><i class="c" style="left:1610px;width:42px">synth</i><i class="c" style="left:1652px;width:22px">synth</i><i class="c" style="left:1696px;width:42px">synth</i><i class="c" style="left:1738px;width:36px">synth</i><i class="c" style="left:1780px;width:44px">synth</i><i class="c" style="left:1824px;width:20px">synth</i><i class="c" style="left:1866px;width:42px">synth</i><i class="c" style="left:1908px;width:36px">synth</i><i class="c" style="left:1952px;width:42px">synth</i><i class="c" style="left:1994px;width:22px">synth</i><i class="c" style="left:2036px;width:12px">synth</i><i class="c" style="left:2048px;width:10px">synth</i><i class="c" style="left:2058px;width:10px">synth</i><i class="c" style="left:2068px;width:12px">synth</i><i class="c" style="left:2080px;width:10px">synth</i><i class="c" style="left:2090px;width:10px">synth</i><i class="c" style="left:2100px;width:10px">synth</i><i class="c" style="left:2110px;width:4px"></i><i class="c" style="left:2122px;width:10px">synth</i><i class="c" style="left:2132px;width:10px">synth</i><i class="c" style="left:2142px;width:12px">synth</i><i class="c" style="left:2154px;width:10px">synth</i><i class="c" style="left:2164px;width:10px">synth</i><i class="c" style="left:2174px;width:12px">synth</i><svg width="2270" height="70" viewBox="0 0 2270 70"><path d="M1547 34v36M1589 34v36M1633 34v36M1717 34v36M1761 34v36M1803 34v36M1889 34v36M1931 34v36M1973 34v36" stroke="#000" stroke-opacity=".22" stroke-width="2" fill="none"/><path d="M356 64h6v6h-6zM364 64h2v6h-2zM368 58h2v6h-2zM372 58h2v6h-2zM378 46h2v6h-2zM382 46h2v6h-2zM386 46h2v6h-2zM390 58h2v6h-2zM394 64h2v6h-2zM400 64h8v6h-8zM410 58h2v6h-2zM414 58h2v6h-2zM420 46h2v6h-2zM424 46h2v6h-2zM428 46h2v6h-2zM442 64h6v6h-6zM450 64h2v6h-2zM454 58h2v6h-2zM458 58h2v6h-2zM464 46h2v6h-2zM468 46h2v6h-2zM472 46h2v6h-2zM476 58h2v6h-2zM484 64h8v6h-8zM494 58h2v6h-2zM498 58h2v6h-2zM528 64h6v6h-6zM536 64h2v6h-2zM540 58h2v6h-2zM544 58h2v6h-2zM550 46h2v6h-2zM554 46h2v6h-2zM558 46h2v6h-2zM562 58h2v6h-2zM570 64h8v6h-8zM580 58h2v6h-2zM584 58h2v6h-2zM590 46h2v6h-2zM594 46h2v6h-2zM598 46h2v6h-2zM612 64h6v6h-6zM620 64h2v6h-2zM624 58h2v6h-2zM628 58h2v6h-2zM634 46h2v6h-2zM638 46h2v6h-2zM642 46h2v6h-2zM646 58h2v6h-2zM650 64h2v6h-2zM656 64h8v6h-8zM666 58h2v6h-2zM670 58h2v6h-2zM698 64h6v6h-6zM706 64h2v6h-2zM710 58h2v6h-2zM714 58h2v6h-2zM720 46h2v6h-2zM724 46h2v6h-2zM728 46h2v6h-2zM732 58h2v6h-2zM740 64h8v6h-8zM750 58h2v6h-2zM754 58h2v6h-2zM760 46h2v6h-2zM764 46h2v6h-2zM768 46h2v6h-2zM784 64h6v6h-6zM792 64h2v6h-2zM796 58h2v6h-2zM800 58h2v6h-2zM806 46h2v6h-2zM810 46h2v6h-2zM814 46h2v6h-2zM818 58h2v6h-2zM826 64h8v6h-8zM836 58h2v6h-2zM840 58h2v6h-2zM868 64h6v6h-6zM880 64h6v6h-6zM890 64h6v6h-6zM900 64h6v6h-6zM912 64h6v6h-6zM922 64h6v6h-6zM932 64h6v6h-6zM954 64h6v6h-6zM964 64h6v6h-6zM974 64h6v6h-6zM986 64h6v6h-6zM996 64h6v6h-6zM1006 64h6v6h-6zM1528 64h6v6h-6zM1536 64h2v6h-2zM1540 58h2v6h-2zM1544 58h2v6h-2zM1550 46h2v6h-2zM1554 46h2v6h-2zM1558 46h2v6h-2zM1562 58h2v6h-2zM1566 64h2v6h-2zM1572 64h8v6h-8zM1582 58h2v6h-2zM1586 58h2v6h-2zM1592 46h2v6h-2zM1596 46h2v6h-2zM1600 46h2v6h-2zM1614 64h6v6h-6zM1622 64h2v6h-2zM1626 58h2v6h-2zM1630 58h2v6h-2zM1636 46h2v6h-2zM1640 46h2v6h-2zM1644 46h2v6h-2zM1648 58h2v6h-2zM1656 64h8v6h-8zM1666 58h2v6h-2zM1670 58h2v6h-2zM1700 64h6v6h-6zM1708 64h2v6h-2zM1712 58h2v6h-2zM1716 58h2v6h-2zM1722 46h2v6h-2zM1726 46h2v6h-2zM1730 46h2v6h-2zM1734 58h2v6h-2zM1742 64h8v6h-8zM1752 58h2v6h-2zM1756 58h2v6h-2zM1762 46h2v6h-2zM1766 46h2v6h-2zM1770 46h2v6h-2zM1784 64h6v6h-6zM1792 64h2v6h-2zM1796 58h2v6h-2zM1800 58h2v6h-2zM1806 46h2v6h-2zM1810 46h2v6h-2zM1814 46h2v6h-2zM1818 58h2v6h-2zM1822 64h2v6h-2zM1828 64h8v6h-8zM1838 58h2v6h-2zM1842 58h2v6h-2zM1870 64h6v6h-6zM1878 64h2v6h-2zM1882 58h2v6h-2zM1886 58h2v6h-2zM1892 46h2v6h-2zM1896 46h2v6h-2zM1900 46h2v6h-2zM1904 58h2v6h-2zM1912 64h8v6h-8zM1922 58h2v6h-2zM1926 58h2v6h-2zM1932 46h2v6h-2zM1936 46h2v6h-2zM1940 46h2v6h-2zM1956 64h6v6h-6zM1964 64h2v6h-2zM1968 58h2v6h-2zM1972 58h2v6h-2zM1978 46h2v6h-2zM1982 46h2v6h-2zM1986 46h2v6h-2zM1990 58h2v6h-2zM1998 64h8v6h-8zM2008 58h2v6h-2zM2012 58h2v6h-2zM2040 64h6v6h-6zM2052 64h6v6h-6zM2062 64h6v6h-6zM2072 64h6v6h-6zM2084 64h6v6h-6zM2094 64h6v6h-6zM2104 64h6v6h-6zM2126 64h6v6h-6zM2136 64h6v6h-6zM2146 64h6v6h-6zM2158 64h6v6h-6zM2168 64h6v6h-6zM2178 64h6v6h-6z" fill="#2d2017"/></svg></div>
<div class="r t k_synth_2" style="top:544px"><i class="c" style="left:1482px;width:38px">synth</i><i class="c" style="left:1524px;width:44px">synth</i><i class="c" style="left:1568px;width:34px">synth</i><i class="c" style="left:1610px;width:42px">synth</i><i class="c" style="left:1652px;width:22px">synth</i><i class="c" style="left:1696px;width:42px">synth</i><i class="c" style="left:1738px;width:36px">synth</i><i class="c" style="left:1780px;width:44px">synth</i><i class="c" style="left:1824px;width:20px">synth</i><i class="c" style="left:2036px;width:12px">synth</i><i class="c" style="left:2048px;width:10px">synth</i><i class="c" style="left:2058px;width:10px">synth</i><i class="c" style="left:2068px;width:12px">synth</i><i class="c" style="left:2080px;width:10px">synth</i><i class="c" style="left:2090px;width:10px">synth</i><i class="c" style="left:2100px;width:10px">synth</i><i class="c" style="left:2110px;width:4px"></i><i class="c" style="left:2122px;width:10px">synth</i><i class="c" style="left:2132px;width:10px">synth</i><i class="c" style="left:2142px;width:12px">synth</i><i class="c" style="left:2154px;width:10px">synth</i><i class="c" style="left:2164px;width:10px">synth</i><i class="c" style="left:2174px;width:12px">synth</i><svg width="2270" height="70" viewBox="0 0 2270 70"><path d="M1505 34v36M1547 34v36M1589 34v36M1633 34v36M1717 34v36M1761 34v36M1803 34v36" stroke="#000" stroke-opacity=".22" stroke-width="2" fill="none"/><path d="M1486 64h8v6h-8zM1496 58h2v6h-2zM1500 58h2v6h-2zM1506 46h2v6h-2zM1510 46h2v6h-2zM1514 46h2v6h-2zM1518 58h2v6h-2zM1528 64h6v6h-6zM1536 64h2v6h-2zM1540 58h2v6h-2zM1544 58h2v6h-2zM1550 46h2v6h-2zM1554 46h2v6h-2zM1558 46h2v6h-2zM1562 58h2v6h-2zM1566 64h2v6h-2zM1572 64h8v6h-8zM1582 58h2v6h-2zM1586 58h2v6h-2zM1592 46h2v6h-2zM1596 46h2v6h-2zM1600 46h2v6h-2zM1614 64h6v6h-6zM1622 64h2v6h-2zM1626 58h2v6h-2zM1630 58h2v6h-2zM1636 46h2v6h-2zM1640 46h2v6h-2zM1644 46h2v6h-2zM1648 58h2v6h-2zM1656 64h8v6h-8zM1666 58h2v6h-2zM1670 58h2v6h-2zM1700 64h6v6h-6zM1708 64h2v6h-2zM1712 58h2v6h-2zM1716 58h2v6h-2zM1722 46h2v6h-2zM1726 46h2v6h-2zM1730 46h2v6h-2zM1734 58h2v6h-2zM1742 64h8v6h-8zM1752 58h2v6h-2zM1756 58h2v6h-2zM1762 46h2v6h-2zM1766 46h2v6h-2zM1770 46h2v6h-2zM1784 64h6v6h-6zM1792 64h2v6h-2zM1796 58h2v6h-2zM1800 58h2v6h-2zM1806 46h2v6h-2zM1810 46h2v6h-2zM1814 46h2v6h-2zM1818 58h2v6h-2zM1822 64h2v6h-2zM1828 64h8v6h-8zM1838 58h2v6h-2zM1842 58h2v6h-2zM2040 64h6v6h-6zM2052 64h6v6h-6zM2062 64h6v6h-6zM2072 64h6v6h-6zM2084 64h6v6h-6zM2094 64h6v6h-6zM2104 64h6v6h-6zM2126 64h6v6h-6zM2136 64h6v6h-6zM2146 64h6v6h-6zM2158 64h6v6h-6zM2168 64h6v6h-6zM2178 64h6v6h-6z" fill="#2d2017"/></svg></div>
<div class="r t k_vocal" style="top:618px"><i class="c" style="left:76px;width:38px">vocal</i><i class="c" style="left:114px;width:20px">vocal</i><i class="c" style="left:134px;width:22px">vocal</i><i class="c" style="left:156px;width:22px">vocal</i><i class="c" style="left:178px;width:26px">vocal</i><i class="c" style="left:204px;width:148px">vocal</i><i class="c" style="left:518px;width:6px"></i><i class="c" style="left:524px;width:36px">vocal</i><i class="c" style="left:560px;width:42px">vocal</i><i class="c" style="left:602px;width:6px"></i><i class="c" style="left:608px;width:4px"></i><i class="c" style="left:640px;width:12px">vocal</i><i class="c" style="left:652px;width:4px"></i><i class="c" style="left:684px;width:10px">vocal</i><i class="c" style="left:694px;width:4px"></i><i class="c" style="left:736px;width:4px"></i><i class="c" style="left:780px;width:4px"></i><i class="c" style="left:822px;width:4px"></i><i class="c" style="left:1098px;width:38px">vocal</i><i class="c" style="left:1136px;width:22px">vocal</i><i class="c" style="left:1158px;width:20px">vocal</i><i class="c" style="left:1178px;width:22px">vocal</i><i class="c" style="left:1200px;width:26px">vocal</i><i class="c" style="left:1226px;width:128px">vocal</i><i class="c" style="left:1354px;width:12px">vocal</i><i class="c" style="left:1366px;width:10px">vocal</i><i class="c" style="left:1376px;width:4px"></i><i class="c" style="left:1380px;width:4px"></i><i class="c" style="left:1384px;width:4px"></i><i class="c" style="left:1388px;width:4px"></i><i class="c" style="left:1392px;width:2px"></i><i class="c" style="left:1394px;width:4px"></i><i class="c" style="left:1398px;width:4px"></i><i class="c" style="left:1402px;width:4px"></i><i class="c" style="left:1406px;width:4px"></i><i class="c" style="left:1410px;width:4px"></i><i class="c" style="left:1414px;width:4px"></i><i class="c" style="left:1418px;width:4px"></i><i class="c mut" style="left:1422px;width:6px"></i><i class="c" style="left:1428px;width:2px"></i><i class="c" style="left:1430px;width:6px"></i><i class="c" style="left:1436px;width:2px"></i><i class="c mut" style="left:1438px;width:24px"></i><i class="c" style="left:1462px;width:20px">vocal</i><i class="c" style="left:1690px;width:6px"></i><i class="c" style="left:1696px;width:36px">vocal</i><i class="c" style="left:1732px;width:42px">vocal</i><i class="c" style="left:1774px;width:6px"></i><i class="c" style="left:1780px;width:4px"></i><i class="c" style="left:1812px;width:12px">vocal</i><i class="c" style="left:1824px;width:4px"></i><i class="c" style="left:1856px;width:10px">vocal</i><i class="c" style="left:1866px;width:4px"></i><i class="c" style="left:1908px;width:4px"></i><i class="c" style="left:1952px;width:4px"></i><i class="c" style="left:1994px;width:4px"></i><i class="c" style="left:2196px;width:14px">vocal</i><svg width="2270" height="70" viewBox="0 0 2270 70"><path d="M99 34v36M141 34v36M183 34v36M227 34v36M269 34v36M311 34v36M567 34v36M1121 34v36M1163 34v36M1207 34v36M1249 34v36M1291 34v36M1335 34v36M1717 34v36M1761 34v36" stroke="#000" stroke-opacity=".22" stroke-width="2" fill="none"/><g fill="#242620"><path transform="translate(78)" d="M0 42.2L1 42.2L2 42.2L3 42.2L4 42.2L5 42.2L6 42.2L7 42.2L8 42.2L9 42.2L10 42.2L11 41.8L12 40.5L13 39.4L14 38L15 38.7L16 38.3L17 38.1L18 37.5L19 36L20 36.1L21 36.8L22 36.2L23 36.4L24 36.8L25 37.5L26 38.5L27 38L28 38.7L29 38.3L30 37.9L31 36.9L32 37.4L33 36.9L34 36.8L35 36.6L36 36.6L36 49.4L35 49.4L34 49.2L33 49.1L32 48.6L31 49.1L30 48.1L29 47.7L28 47.3L27 48L26 47.5L25 48.5L24 49.2L23 49.6L22 49.8L21 49.2L20 49.9L19 50L18 48.5L17 47.9L16 47.7L15 47.3L14 48L13 46.6L12 45.5L11 44.2L10 43.8L9 43.8L8 43.8L7 43.8L6 43.8L5 43.8L4 43.8L3 43.8L2 43.8L1 43.8L0 43.8ZM0 60.2L1 60.2L2 60.2L3 60.2L4 60.2L5 60.2L6 60.2L7 60.2L8 60.2L9 60.2L10 60.2L11 59.9L12 58.4L13 56.8L14 55.6L15 56.3L16 55.4L17 54.8L18 55.8L19 54.9L20 54.8L21 55.5L22 55.1L23 55.9L24 55.9L25 56L26 56.6L27 56.1L28 55.4L29 56.2L30 54.9L31 55.6L32 55.7L33 55.4L34 55.8L35 56.7L36 56.7L36 65.3L35 65.3L34 66.2L33 66.6L32 66.3L31 66.4L30 67.1L29 65.8L28 66.6L27 65.9L26 65.4L25 66L24 66.1L23 66.1L22 66.9L21 66.5L20 67.2L19 67.1L18 66.2L17 67.2L16 66.6L15 65.7L14 66.4L13 65.2L12 63.6L11 62.1L10 61.8L9 61.8L8 61.8L7 61.8L6 61.8L5 61.8L4 61.8L3 61.8L2 61.8L1 61.8L0 61.8Z"/><path transform="translate(116)" d="M0 38.6L1 38.5L2 37.1L3 37L4 38.4L5 37.5L6 37L7 38.1L8 38.4L9 38.5L10 39.2L11 38.8L12 38.8L13 39L14 38.7L15 38.2L16 38.3L17 39L18 39L18 47L17 47L16 47.7L15 47.8L14 47.3L13 47L12 47.2L11 47.2L10 46.8L9 47.5L8 47.6L7 47.9L6 49L5 48.5L4 47.6L3 49L2 48.9L1 47.5L0 47.4ZM0 55.8L1 55.7L2 56.9L3 56.8L4 55.9L5 56.8L6 55.8L7 55.3L8 55L9 54.3L10 53.9L11 54.9L12 55L13 55.6L14 56.6L15 57.6L16 57.1L17 57.1L18 57.1L18 64.9L17 64.9L16 64.9L15 64.4L14 65.4L13 66.4L12 67L11 67.1L10 68.1L9 67.7L8 67L7 66.7L6 66.2L5 65.2L4 66.1L3 65.2L2 65.1L1 66.3L0 66.2Z"/><path transform="translate(136)" d="M0 37.8L1 38.4L2 39L3 39.2L4 39.2L5 38.3L6 38.6L7 37.4L8 38.2L9 37.8L10 37.9L11 38.2L12 38.3L13 38.8L14 38.5L15 38.4L16 38.2L17 37.4L18 37.8L19 37.3L20 37.3L20 48.7L19 48.7L18 48.2L17 48.6L16 47.8L15 47.6L14 47.5L13 47.2L12 47.7L11 47.8L10 48.1L9 48.2L8 47.8L7 48.6L6 47.4L5 47.7L4 46.8L3 46.8L2 47L1 47.6L0 48.2ZM0 54.8L1 56L2 56.1L3 55.3L4 55.6L5 56.4L6 56.7L7 56.3L8 55.8L9 55.5L10 56.5L11 55.7L12 55.8L13 55.5L14 55.2L15 55.7L16 56.3L17 55.9L18 56.1L19 57L20 57L20 65L19 65L18 65.9L17 66.1L16 65.7L15 66.3L14 66.8L13 66.5L12 66.2L11 66.3L10 65.5L9 66.5L8 66.2L7 65.7L6 65.3L5 65.6L4 66.4L3 66.7L2 65.9L1 66L0 67.2Z"/><path transform="translate(158)" d="M0 37.2L1 36.6L2 37.9L3 37.4L4 38.6L5 37.7L6 38.5L7 38.4L8 37.9L9 36.8L10 36.1L11 37.2L12 37.4L13 38.1L14 38.9L15 39.3L16 39.1L17 38.1L18 37.9L19 37.2L20 37.2L20 48.8L19 48.8L18 48.1L17 47.9L16 46.9L15 46.7L14 47.1L13 47.9L12 48.6L11 48.8L10 49.9L9 49.2L8 48.1L7 47.6L6 47.5L5 48.3L4 47.4L3 48.6L2 48.1L1 49.4L0 48.8ZM0 56.7L1 56.8L2 56.4L3 55.6L4 55L5 56.1L6 54.9L7 54.9L8 54.9L9 55.2L10 54.8L11 54.4L12 55L13 54.7L14 54.9L15 55.1L16 56L17 54.8L18 56.6L19 55.7L20 55.7L20 66.3L19 66.3L18 65.4L17 67.2L16 66L15 66.9L14 67.1L13 67.3L12 67L11 67.6L10 67.2L9 66.8L8 67.1L7 67.1L6 67.1L5 65.9L4 67L3 66.4L2 65.6L1 65.2L0 65.3Z"/><path transform="translate(180)" d="M0 37.4L1 38.4L2 38.7L3 37.8L4 38.2L5 38.1L6 38.2L7 38.5L8 38.3L9 37.8L10 39.1L11 39.3L12 38.3L13 39L14 38.2L15 38.2L16 36.8L17 38L18 37L19 37.7L20 37L21 37.8L22 37.3L23 37.3L24 37.3L24 48.7L23 48.7L22 48.7L21 48.2L20 49L19 48.3L18 49L17 48L16 49.2L15 47.8L14 47.8L13 47L12 47.7L11 46.7L10 46.9L9 48.2L8 47.7L7 47.5L6 47.8L5 47.9L4 47.8L3 48.2L2 47.3L1 47.6L0 48.6ZM0 54.1L1 54.5L2 55L3 55.3L4 55L5 55.9L6 55.3L7 56.6L8 55.2L9 56.3L10 56.2L11 56.1L12 55.4L13 55.7L14 55.6L15 55.2L16 54.9L17 55.4L18 55.5L19 55.9L20 56.5L21 56L22 55.5L23 55.5L24 55.5L24 66.5L23 66.5L22 66.5L21 66L20 65.5L19 66.1L18 66.5L17 66.6L16 67.1L15 66.8L14 66.4L13 66.3L12 66.6L11 65.9L10 65.8L9 65.7L8 66.8L7 65.4L6 66.7L5 66.1L4 67L3 66.7L2 67L1 67.5L0 67.9Z"/><path transform="translate(206)" d="M0 38.4L1 38.2L2 38.5L3 37.8L4 38.4L5 39.3L6 38.6L7 37.6L8 37.5L9 36.4L10 37L11 37L12 37.9L13 37L14 38.2L15 37.5L16 37.2L17 38.2L18 38.7L19 37.2L20 37.2L21 36.8L22 36.6L23 35.9L24 36.1L25 36.7L26 37.7L27 37.6L28 37.8L29 38.3L30 38.1L31 38.7L32 37.4L33 37.4L34 37.4L35 37.4L36 37.4L37 37.8L38 37.7L39 38.8L40 38.9L41 38.1L42 37.5L43 36.8L44 37.1L45 36.3L46 37.7L47 36.9L48 37L49 37.9L50 38.8L51 37.2L52 37.2L53 37.7L54 37.6L55 36.7L56 37.2L57 37.4L58 37.5L59 38.4L60 37.2L61 38.1L62 37.1L63 38.3L64 36.6L65 37L66 38L67 36.8L68 37.4L69 37.6L70 39.1L71 38.4L72 38.7L73 37.7L74 38.9L75 37.4L76 38L77 37L78 37L79 36.7L80 37.5L81 38.5L82 38.8L83 37.9L84 38.6L85 37.7L86 37L87 37.3L88 38.9L89 38.2L90 38.8L91 38.3L92 38L93 37.6L94 37.5L95 37L96 36.7L97 37.5L98 37.7L99 38.7L100 38L101 38L102 38.5L103 37.8L104 38.7L105 37.4L106 38L107 38.5L108 37.9L109 37.5L110 36.9L111 37.1L112 37.1L113 38.4L114 37.6L115 39.1L116 38.8L117 39.4L118 39.6L119 39.5L120 38.6L121 38.4L122 38.4L123 38.7L124 37.5L125 38.1L126 38.7L127 38.4L128 37.8L129 38.7L130 37.8L131 38.1L132 37.8L133 36.8L134 36.4L135 37.1L136 38.1L137 36.9L138 37.9L139 38.5L140 37.2L141 38.5L142 38.3L143 37.5L144 37.7L145 39L146 39L146 47L145 47L144 48.3L143 48.5L142 47.7L141 47.5L140 48.8L139 47.5L138 48.1L137 49.1L136 47.9L135 48.9L134 49.6L133 49.2L132 48.2L131 47.9L130 48.2L129 47.3L128 48.2L127 47.6L126 47.3L125 47.9L124 48.5L123 47.3L122 47.6L121 47.6L120 47.4L119 46.5L118 46.4L117 46.6L116 47.2L115 46.9L114 48.4L113 47.6L112 48.9L111 48.9L110 49.1L109 48.5L108 48.1L107 47.5L106 48L105 48.6L104 47.3L103 48.2L102 47.5L101 48L100 48L99 47.3L98 48.3L97 48.5L96 49.3L95 49L94 48.5L93 48.4L92 48L91 47.7L90 47.2L89 47.8L88 47.1L87 48.7L86 49L85 48.3L84 47.4L83 48.1L82 47.2L81 47.5L80 48.5L79 49.3L78 49L77 49L76 48L75 48.6L74 47.1L73 48.3L72 47.3L71 47.6L70 46.9L69 48.4L68 48.6L67 49.2L66 48L65 49L64 49.4L63 47.7L62 48.9L61 47.9L60 48.8L59 47.6L58 48.5L57 48.6L56 48.8L55 49.3L54 48.4L53 48.3L52 48.8L51 48.8L50 47.2L49 48.1L48 49L47 49.1L46 48.3L45 49.7L44 48.9L43 49.2L42 48.5L41 47.9L40 47.1L39 47.2L38 48.3L37 48.2L36 48.6L35 48.6L34 48.6L33 48.6L32 48.6L31 47.3L30 47.9L29 47.7L28 48.2L27 48.4L26 48.3L25 49.3L24 49.9L23 50.1L22 49.4L21 49.2L20 48.8L19 48.8L18 47.3L17 47.8L16 48.8L15 48.5L14 47.8L13 49L12 48.1L11 49L10 49L9 49.6L8 48.5L7 48.4L6 47.4L5 46.7L4 47.6L3 48.2L2 47.5L1 47.8L0 47.6ZM0 55.3L1 56.4L2 55.6L3 54.8L4 56.3L5 55.6L6 55.1L7 56L8 56.6L9 56.4L10 55.7L11 55.8L12 54.2L13 55.3L14 54.6L15 53.9L16 54.1L17 54.6L18 54.5L19 54.7L20 55.5L21 56.2L22 55.9L23 57.3L24 56.7L25 57.1L26 56.2L27 56L28 56L29 55.8L30 55.4L31 55.3L32 54.6L33 55.6L34 55.9L35 55.7L36 56L37 57L38 56.8L39 56.1L40 57.5L41 56.5L42 56.4L43 56.2L44 56.5L45 55L46 55.2L47 54.6L48 55.8L49 55L50 55.1L51 55.4L52 56.4L53 55.7L54 54.7L55 54.9L56 55.3L57 55.3L58 56.1L59 56.1L60 56.9L61 56.8L62 57.2L63 56.6L64 56.1L65 56.5L66 55L67 55.5L68 54.5L69 54.8L70 54.2L71 53.7L72 54.4L73 54.6L74 54.9L75 54.7L76 55.2L77 55L78 54.7L79 54.1L80 54.9L81 54.5L82 54.6L83 54.4L84 54.9L85 54.7L86 55L87 54.7L88 55.1L89 55.6L90 56.1L91 55.5L92 56.4L93 55.5L94 55.4L95 55.1L96 54.4L97 54.3L98 54.4L99 55.2L100 54.3L101 55.3L102 55L103 56.1L104 55.8L105 56.6L106 57.2L107 56.4L108 56.8L109 55.8L110 56L111 55.5L112 56.8L113 56.7L114 56.6L115 57.3L116 57L117 56.7L118 55.5L119 55.9L120 54.6L121 55.4L122 55.5L123 55.5L124 57.1L125 56.5L126 56.2L127 56.5L128 56.5L129 54.8L130 55.4L131 55.1L132 55.5L133 54.7L134 55.4L135 55.9L136 55.7L137 56.5L138 56L139 56.2L140 56.5L141 55.2L142 55.9L143 56.4L144 56L145 55.8L146 55.8L146 66.2L145 66.2L144 66L143 65.6L142 66.1L141 66.8L140 65.5L139 65.8L138 66L137 65.5L136 66.3L135 66.1L134 66.6L133 67.3L132 66.5L131 66.9L130 66.6L129 67.2L128 65.5L127 65.5L126 65.8L125 65.5L124 64.9L123 66.5L122 66.5L121 66.6L120 67.4L119 66.1L118 66.5L117 65.3L116 65L115 64.7L114 65.4L113 65.3L112 65.2L111 66.5L110 66L109 66.2L108 65.2L107 65.6L106 64.8L105 65.4L104 66.2L103 65.9L102 67L101 66.7L100 67.7L99 66.8L98 67.6L97 67.7L96 67.6L95 66.9L94 66.6L93 66.5L92 65.6L91 66.5L90 65.9L89 66.4L88 66.9L87 67.3L86 67L85 67.3L84 67.1L83 67.6L82 67.4L81 67.5L80 67.1L79 67.9L78 67.3L77 67L76 66.8L75 67.3L74 67.1L73 67.4L72 67.6L71 68.3L70 67.8L69 67.2L68 67.5L67 66.5L66 67L65 65.5L64 65.9L63 65.4L62 64.8L61 65.2L60 65.1L59 65.9L58 65.9L57 66.7L56 66.7L55 67.1L54 67.3L53 66.3L52 65.6L51 66.6L50 66.9L49 67L48 66.2L47 67.4L46 66.8L45 67L44 65.5L43 65.8L42 65.6L41 65.5L40 64.5L39 65.9L38 65.2L37 65L36 66L35 66.3L34 66.1L33 66.4L32 67.4L31 66.7L30 66.6L29 66.2L28 66L27 66L26 65.8L25 64.9L24 65.3L23 64.7L22 66.1L21 65.8L20 66.5L19 67.3L18 67.5L17 67.4L16 67.9L15 68.1L14 67.4L13 66.7L12 67.8L11 66.2L10 66.3L9 65.6L8 65.4L7 66L6 66.9L5 66.4L4 65.7L3 67.2L2 66.4L1 65.6L0 66.7Z"/><path transform="translate(520)" d="M0 37.2L1 35.3L2 35L3 35L4 35L4 51L3 51L2 51L1 50.7L0 48.8ZM0 55.8L1 53.4L2 52.9L3 52.9L4 52.9L4 69.1L3 69.1L2 69.1L1 68.6L0 66.2Z"/><path transform="translate(526)" d="M0 37.8L1 35.5L2 35L3 34.8L4 34.4L5 35L6 34.8L7 34.5L8 35L9 34.7L10 36.6L11 36.6L12 34.6L13 35.2L14 35.1L15 35L16 34.7L17 34.8L18 35L19 34.6L20 35.3L21 36.8L22 35.5L23 34.5L24 34.9L25 35L26 34.8L27 34.5L28 35.2L29 34.9L30 34.7L31 35.8L32 36.9L33 34.9L34 34.9L34 51.1L33 51.1L32 49.1L31 50.2L30 51.3L29 51.1L28 50.8L27 51.5L26 51.2L25 51L24 51.1L23 51.5L22 50.5L21 49.2L20 50.7L19 51.4L18 51L17 51.2L16 51.3L15 51L14 50.9L13 50.8L12 51.4L11 49.4L10 49.4L9 51.3L8 51L7 51.5L6 51.2L5 51L4 51.6L3 51.2L2 51L1 50.5L0 48.2ZM0 55.4L1 53.7L2 52.9L3 52.8L4 52.9L5 53L6 53L7 52.9L8 52.9L9 52.7L10 54.2L11 55L12 52.9L13 52.6L14 53.2L15 52.8L16 52.4L17 52.6L18 52.7L19 52.9L20 52.7L21 54.9L22 53.7L23 53.2L24 53L25 52.8L26 52.8L27 52.5L28 52.4L29 52.6L30 53.1L31 53.4L32 55.6L33 53L34 53L34 69L33 69L32 66.4L31 68.6L30 68.9L29 69.4L28 69.6L27 69.5L26 69.2L25 69.2L24 69L23 68.8L22 68.3L21 67.1L20 69.3L19 69.1L18 69.3L17 69.4L16 69.6L15 69.2L14 68.8L13 69.4L12 69.1L11 67L10 67.8L9 69.3L8 69.1L7 69.1L6 69L5 69L4 69.1L3 69.2L2 69.1L1 68.3L0 66.6Z"/><path transform="translate(562)" d="M0 37.1L1 35.4L2 35.1L3 34.5L4 34.8L5 34.6L6 35.1L7 34.5L8 34.9L9 34.7L10 36.2L11 37.1L12 35L13 34.7L14 34.7L15 35L16 35.1L17 34.7L18 35.3L19 35.1L20 35.2L21 37.3L22 35.6L23 35L24 34.9L25 34.5L26 34.4L27 35.2L28 34.7L29 34.4L30 34.6L31 35.9L32 37.3L33 34.9L34 34.7L35 34.6L36 34.9L37 34.7L38 35.1L39 35.1L40 35.1L40 50.9L39 50.9L38 50.9L37 51.3L36 51.1L35 51.4L34 51.3L33 51.1L32 48.7L31 50.1L30 51.4L29 51.6L28 51.3L27 50.8L26 51.6L25 51.5L24 51.1L23 51L22 50.4L21 48.7L20 50.8L19 50.9L18 50.7L17 51.3L16 50.9L15 51L14 51.3L13 51.3L12 51L11 48.9L10 49.8L9 51.3L8 51.1L7 51.5L6 50.9L5 51.4L4 51.2L3 51.5L2 50.9L1 50.6L0 48.9ZM0 55L1 53.1L2 53.1L3 52.8L4 53L5 53.1L6 52.9L7 53.2L8 53.2L9 52.8L10 54.4L11 54.6L12 52.6L13 53L14 53.1L15 53.1L16 52.7L17 53.2L18 52.5L19 53.2L20 52.9L21 55.5L22 54L23 52.6L24 52.5L25 52.9L26 52.5L27 52.5L28 53.1L29 53.1L30 53.1L31 54.1L32 55.1L33 53.5L34 52.5L35 52.7L36 53.1L37 52.5L38 52.8L39 52.5L40 52.5L40 69.5L39 69.5L38 69.2L37 69.5L36 68.9L35 69.3L34 69.5L33 68.5L32 66.9L31 67.9L30 68.9L29 68.9L28 68.9L27 69.5L26 69.5L25 69.1L24 69.5L23 69.4L22 68L21 66.5L20 69.1L19 68.8L18 69.5L17 68.8L16 69.3L15 68.9L14 68.9L13 69L12 69.4L11 67.4L10 67.6L9 69.2L8 68.8L7 68.8L6 69.1L5 68.9L4 69L3 69.2L2 68.9L1 68.9L0 67Z"/><path transform="translate(604)" d="M0 37.1L1 35.8L2 34.7L3 34.6L4 34.6L4 51.4L3 51.4L2 51.3L1 50.2L0 48.9ZM0 55.1L1 53.2L2 53L3 52.8L4 52.8L4 69.2L3 69.2L2 69L1 68.8L0 66.9Z"/><path transform="translate(610)" d="M0 37.6L1 35.7L2 35.7L2 50.3L1 50.3L0 48.4ZM0 55.1L1 53.5L2 53.5L2 68.5L1 68.5L0 66.9Z"/><path transform="translate(642)" d="M0 39.5L1 36.9L2 35.6L3 34.9L4 34.6L5 34.8L6 35.1L7 35.8L8 37.2L9 39.5L10 39.5L10 46.5L9 46.5L8 48.8L7 50.2L6 50.9L5 51.2L4 51.4L3 51.1L2 50.4L1 49.1L0 46.5ZM0 57.3L1 55.2L2 53.8L3 52.9L4 52.6L5 52.6L6 53L7 54L8 55.1L9 57.6L10 57.6L10 64.4L9 64.4L8 66.9L7 68L6 69L5 69.4L4 69.4L3 69.1L2 68.2L1 66.8L0 64.7Z"/><path transform="translate(654)" d="M0 35.7L1 35.9L2 35.9L2 50.1L1 50.1L0 50.3ZM0 54L1 54L2 54L2 68L1 68L0 68Z"/><path transform="translate(686)" d="M0 39.2L1 36.7L2 35.3L3 34.6L4 34.8L5 35.2L6 36.4L7 39.1L8 39.1L8 46.9L7 46.9L6 49.6L5 50.8L4 51.2L3 51.4L2 50.7L1 49.3L0 46.8ZM0 56.8L1 54.3L2 53.5L3 52.7L4 52.4L5 53.4L6 54.5L7 57L8 57L8 65L7 65L6 67.5L5 68.6L4 69.6L3 69.3L2 68.5L1 67.7L0 65.2Z"/><path transform="translate(696)" d="M0 35.8L1 35.7L2 35.7L2 50.3L1 50.3L0 50.2ZM0 53.6L1 53.9L2 53.9L2 68.1L1 68.1L0 68.4Z"/><path transform="translate(738)" d="M0 35.7L1 35.6L2 35.6L2 50.4L1 50.4L0 50.3ZM0 54L1 53.9L2 53.9L2 68.1L1 68.1L0 68Z"/><path transform="translate(782)" d="M0 35.7L1 35.8L2 35.8L2 50.2L1 50.2L0 50.3ZM0 53.7L1 53.8L2 53.8L2 68.2L1 68.2L0 68.3Z"/><path transform="translate(824)" d="M0 35.6L1 35.7L2 35.7L2 50.3L1 50.3L0 50.4ZM0 53.9L1 53.7L2 53.7L2 68.3L1 68.3L0 68.1Z"/><path transform="translate(1100)" d="M0 42.2L1 42.2L2 42.2L3 42.2L4 42.2L5 37.2L6 38.8L7 38.7L8 38.5L9 37.8L10 38.4L11 37.5L12 38.8L13 37.4L14 37.9L15 37.7L16 36.9L17 36.1L18 36.1L19 36.2L20 36L21 36.4L22 36L23 36.5L24 37.2L25 37.9L26 38.2L27 38L28 38L29 37.1L30 36.8L31 37.3L32 35.9L33 35.7L34 36.8L35 37.6L36 37.6L36 48.4L35 48.4L34 49.2L33 50.3L32 50.1L31 48.7L30 49.2L29 48.9L28 48L27 48L26 47.8L25 48.1L24 48.8L23 49.5L22 50L21 49.6L20 50L19 49.8L18 49.9L17 49.9L16 49.1L15 48.3L14 48.1L13 48.6L12 47.2L11 48.5L10 47.6L9 48.2L8 47.5L7 47.3L6 47.2L5 48.8L4 43.8L3 43.8L2 43.8L1 43.8L0 43.8ZM0 60.2L1 60.2L2 60.2L3 60.2L4 60.2L5 54.8L6 53.5L7 54.1L8 54.7L9 55.2L10 55.5L11 55.5L12 55.5L13 55.9L14 56L15 55.3L16 55.1L17 55L18 54.7L19 54.1L20 54.3L21 55.2L22 54L23 54.5L24 55.4L25 55.8L26 54.5L27 55.3L28 55.2L29 54L30 53.4L31 53.5L32 54.7L33 54.2L34 54.8L35 54.3L36 54.3L36 67.7L35 67.7L34 67.2L33 67.8L32 67.3L31 68.5L30 68.6L29 68L28 66.8L27 66.7L26 67.5L25 66.2L24 66.6L23 67.5L22 68L21 66.8L20 67.7L19 67.9L18 67.3L17 67L16 66.9L15 66.7L14 66L13 66.1L12 66.5L11 66.5L10 66.5L9 66.8L8 67.3L7 67.9L6 68.5L5 67.2L4 61.8L3 61.8L2 61.8L1 61.8L0 61.8Z"/><path transform="translate(1138)" d="M0 37.3L1 37L2 36.9L3 38.4L4 37.3L5 37.2L6 38.2L7 37.8L8 37.5L9 38.1L10 39.1L11 38.9L12 38L13 38.3L14 38.1L15 37.2L16 36.3L17 37.4L18 37.8L19 36.6L20 36.6L20 49.4L19 49.4L18 48.2L17 48.6L16 49.7L15 48.8L14 47.9L13 47.7L12 48L11 47.1L10 46.9L9 47.9L8 48.5L7 48.2L6 47.8L5 48.8L4 48.7L3 47.6L2 49.1L1 49L0 48.7ZM0 53.6L1 53.9L2 54.7L3 55.4L4 54L5 54.2L6 54.9L7 54L8 54.2L9 54L10 54.6L11 54L12 53.6L13 54.1L14 53.8L15 54.3L16 55.7L17 54.5L18 55.4L19 56.3L20 56.3L20 65.7L19 65.7L18 66.6L17 67.5L16 66.3L15 67.7L14 68.2L13 67.9L12 68.4L11 68L10 67.4L9 68L8 67.8L7 68L6 67.1L5 67.8L4 68L3 66.6L2 67.3L1 68.1L0 68.4Z"/><path transform="translate(1160)" d="M0 37.2L1 38L2 37.9L3 38.2L4 37.8L5 36.8L6 38L7 36.1L8 36.8L9 37.6L10 36.3L11 35.5L12 35.8L13 36.7L14 35L15 35.7L16 36.6L17 36.3L18 36.3L18 49.7L17 49.7L16 49.4L15 50.3L14 51L13 49.3L12 50.2L11 50.5L10 49.7L9 48.4L8 49.2L7 49.9L6 48L5 49.2L4 48.2L3 47.8L2 48.1L1 48L0 48.8ZM0 55.9L1 56.8L2 55.7L3 56.2L4 55.5L5 54.9L6 54.3L7 54.6L8 53.5L9 53.6L10 53.9L11 54L12 54.6L13 54.4L14 54.9L15 55.8L16 54.9L17 55.1L18 55.1L18 66.9L17 66.9L16 67.1L15 66.2L14 67.1L13 67.6L12 67.4L11 68L10 68.1L9 68.4L8 68.5L7 67.4L6 67.7L5 67.1L4 66.5L3 65.8L2 66.3L1 65.2L0 66.1Z"/><path transform="translate(1180)" d="M0 37.6L1 38.7L2 37.7L3 37.7L4 37.8L5 37.4L6 36.5L7 36.5L8 35.5L9 36L10 36.6L11 36.1L12 35.8L13 36.3L14 36.8L15 37.4L16 36.5L17 37.6L18 37.1L19 37.8L20 37.8L20 48.2L19 48.2L18 48.9L17 48.4L16 49.5L15 48.6L14 49.2L13 49.7L12 50.2L11 49.9L10 49.4L9 50L8 50.5L7 49.5L6 49.5L5 48.6L4 48.2L3 48.3L2 48.3L1 47.3L0 48.4ZM0 54.3L1 54.3L2 53.9L3 55.2L4 54.6L5 54.7L6 54.3L7 54.9L8 55.3L9 54.2L10 52.7L11 53.4L12 53.6L13 53.2L14 53.9L15 54.7L16 53.3L17 53.9L18 54.7L19 54L20 54L20 68L19 68L18 67.3L17 68.1L16 68.7L15 67.3L14 68.1L13 68.8L12 68.4L11 68.6L10 69.3L9 67.8L8 66.7L7 67.1L6 67.7L5 67.3L4 67.4L3 66.8L2 68.1L1 67.7L0 67.7Z"/><path transform="translate(1202)" d="M0 35.7L1 35.1L2 35.9L3 36.1L4 36.5L5 37L6 37.4L7 37.3L8 37.6L9 36L10 37L11 37.2L12 37.6L13 36L14 37L15 37.1L16 36.3L17 35.8L18 36.9L19 35.9L20 36.4L21 36L22 37.2L23 37.1L24 37.1L24 48.9L23 48.9L22 48.8L21 50L20 49.6L19 50.1L18 49.1L17 50.2L16 49.7L15 48.9L14 49L13 50L12 48.4L11 48.8L10 49L9 50L8 48.4L7 48.7L6 48.6L5 49L4 49.5L3 49.9L2 50.1L1 50.9L0 50.3ZM0 52.9L1 53.8L2 53.3L3 53.6L4 53.8L5 54.7L6 54.2L7 53.5L8 53.5L9 53.1L10 53.5L11 54.3L12 55L13 55.2L14 57.2L15 56.2L16 56.3L17 55.7L18 55.5L19 54.5L20 54.9L21 55.1L22 55.7L23 56.9L24 56.9L24 65.1L23 65.1L22 66.3L21 66.9L20 67.1L19 67.5L18 66.5L17 66.3L16 65.7L15 65.8L14 64.8L13 66.8L12 67L11 67.7L10 68.5L9 68.9L8 68.5L7 68.5L6 67.8L5 67.3L4 68.2L3 68.4L2 68.7L1 68.2L0 69.1Z"/><path transform="translate(1228)" d="M0 36.7L1 36.7L2 37L3 37.8L4 37.2L5 38.5L6 37.5L7 37.4L8 37.7L9 37.8L10 36.6L11 36.1L12 37.4L13 36.3L14 36.3L15 37.1L16 36.7L17 36.9L18 37.6L19 37.5L20 38.2L21 37.7L22 37.6L23 37.8L24 37.6L25 37.6L26 38.1L27 37.6L28 36.9L29 37.5L30 38.5L31 38.4L32 37.7L33 39.1L34 37.5L35 38.7L36 38.6L37 37.9L38 37L39 38.2L40 37.9L41 37.4L42 37.2L43 36.4L44 36.6L45 36.6L46 35.8L47 36.1L48 37.2L49 36.8L50 37.1L51 37.1L52 37.6L53 37.9L54 36.1L55 37.2L56 36.8L57 35.9L58 36.1L59 36.9L60 37.5L61 38L62 37L63 37L64 38L65 36.5L66 36.8L67 35.8L68 37.3L69 36L70 37.1L71 37.5L72 38.2L73 36.7L74 38L75 38.1L76 37.8L77 36.9L78 36.9L79 37.1L80 36.4L81 36.6L82 37.3L83 38L84 38.6L85 38.3L86 37.7L87 37.1L88 36.2L89 36L90 36.3L91 36.2L92 36.5L93 36.4L94 36.5L95 35.8L96 35.4L97 35.8L98 36.2L99 37.2L100 37.3L101 37.8L102 38L103 37.3L104 37.4L105 36.8L106 37.1L107 37.8L108 38.3L109 37.9L110 37.5L111 36.8L112 36.3L113 35.5L114 36.2L115 37.3L116 37.7L117 36.9L118 38.2L119 37.7L120 37.9L121 37.4L122 37L123 36.6L124 36.3L125 35.6L126 35.6L126 50.4L125 50.4L124 49.7L123 49.4L122 49L121 48.6L120 48.1L119 48.3L118 47.8L117 49.1L116 48.3L115 48.7L114 49.8L113 50.5L112 49.7L111 49.2L110 48.5L109 48.1L108 47.7L107 48.2L106 48.9L105 49.2L104 48.6L103 48.7L102 48L101 48.2L100 48.7L99 48.8L98 49.8L97 50.2L96 50.6L95 50.2L94 49.5L93 49.6L92 49.5L91 49.8L90 49.7L89 50L88 49.8L87 48.9L86 48.3L85 47.7L84 47.4L83 48L82 48.7L81 49.4L80 49.6L79 48.9L78 49.1L77 49.1L76 48.2L75 47.9L74 48L73 49.3L72 47.8L71 48.5L70 48.9L69 50L68 48.7L67 50.2L66 49.2L65 49.5L64 48L63 49L62 49L61 48L60 48.5L59 49.1L58 49.9L57 50.1L56 49.2L55 48.8L54 49.9L53 48.1L52 48.4L51 48.9L50 48.9L49 49.2L48 48.8L47 49.9L46 50.2L45 49.4L44 49.4L43 49.6L42 48.8L41 48.6L40 48.1L39 47.8L38 49L37 48.1L36 47.4L35 47.3L34 48.5L33 46.9L32 48.3L31 47.6L30 47.5L29 48.5L28 49.1L27 48.4L26 47.9L25 48.4L24 48.4L23 48.2L22 48.4L21 48.3L20 47.8L19 48.5L18 48.4L17 49.1L16 49.3L15 48.9L14 49.7L13 49.7L12 48.6L11 49.9L10 49.4L9 48.2L8 48.3L7 48.6L6 48.5L5 47.5L4 48.8L3 48.2L2 49L1 49.3L0 49.3ZM0 53.6L1 53.7L2 54.1L3 53.9L4 54.9L5 53.6L6 54.1L7 53.2L8 53.7L9 53.8L10 54.2L11 54.7L12 55.7L13 55.2L14 55.3L15 56.8L16 55.2L17 56.4L18 56L19 56L20 55.1L21 56.2L22 56L23 56.3L24 56L25 55.2L26 56.4L27 55.4L28 55.9L29 54.8L30 54.8L31 54.7L32 54.9L33 54.6L34 56.2L35 56.1L36 56.3L37 55.9L38 56.2L39 56.2L40 56.6L41 55.9L42 57.1L43 56.9L44 56.4L45 56L46 55.4L47 54.4L48 55L49 55.6L50 55.9L51 57.1L52 56.5L53 57.1L54 56.8L55 55.9L56 55.9L57 54.9L58 54.6L59 54.2L60 54.5L61 54.2L62 55L63 55.3L64 54.5L65 55.4L66 55.1L67 54.6L68 54.5L69 54.9L70 55.7L71 55.3L72 54.2L73 53.4L74 53.7L75 53.3L76 53L77 53.6L78 54.2L79 54.8L80 55.1L81 55.2L82 55.1L83 54L84 53.9L85 54.2L86 53.4L87 54L88 54.8L89 53.9L90 54L91 55.3L92 56.1L93 56.6L94 55.2L95 56.3L96 56.1L97 55.2L98 55.5L99 56.3L100 55.9L101 56.2L102 56L103 54L104 54.9L105 55.5L106 54.4L107 54.1L108 55.3L109 55.9L110 55.4L111 55.5L112 55.3L113 53.7L114 54.9L115 53.2L116 53.9L117 53.7L118 54.9L119 53.6L120 55L121 54.8L122 54.8L123 55.7L124 56.1L125 55.5L126 55.5L126 66.5L125 66.5L124 65.9L123 66.3L122 67.2L121 67.2L120 67L119 68.4L118 67.1L117 68.3L116 68.1L115 68.8L114 67.1L113 68.3L112 66.7L111 66.5L110 66.6L109 66.1L108 66.7L107 67.9L106 67.6L105 66.5L104 67.1L103 68L102 66L101 65.8L100 66.1L99 65.7L98 66.5L97 66.8L96 65.9L95 65.7L94 66.8L93 65.4L92 65.9L91 66.7L90 68L89 68.1L88 67.2L87 68L86 68.6L85 67.8L84 68.1L83 68L82 66.9L81 66.8L80 66.9L79 67.2L78 67.8L77 68.4L76 69L75 68.7L74 68.3L73 68.6L72 67.8L71 66.7L70 66.3L69 67.1L68 67.5L67 67.4L66 66.9L65 66.6L64 67.5L63 66.7L62 67L61 67.8L60 67.5L59 67.8L58 67.4L57 67.1L56 66.1L55 66.1L54 65.2L53 64.9L52 65.5L51 64.9L50 66.1L49 66.4L48 67L47 67.6L46 66.6L45 66L44 65.6L43 65.1L42 64.9L41 66.1L40 65.4L39 65.8L38 65.8L37 66.1L36 65.7L35 65.9L34 65.8L33 67.4L32 67.1L31 67.3L30 67.2L29 67.2L28 66.1L27 66.6L26 65.6L25 66.8L24 66L23 65.7L22 66L21 65.8L20 66.9L19 66L18 66L17 65.6L16 66.8L15 65.2L14 66.7L13 66.8L12 66.3L11 67.3L10 67.8L9 68.2L8 68.3L7 68.8L6 67.9L5 68.4L4 67.1L3 68.1L2 67.9L1 68.3L0 68.4Z"/><path transform="translate(1356)" d="M0 37.2L1 36.3L2 37.4L3 37.3L4 36.9L5 36.9L6 38L7 37.7L8 37.7L9 38.3L10 38.3L10 47.7L9 47.7L8 48.3L7 48.3L6 48L5 49.1L4 49.1L3 48.7L2 48.6L1 49.7L0 48.8ZM0 54.9L1 53.7L2 55.3L3 54.6L4 55.1L5 54.3L6 55.5L7 55L8 54.5L9 55.8L10 55.8L10 66.2L9 66.2L8 67.5L7 67L6 66.5L5 67.7L4 66.9L3 67.4L2 66.7L1 68.3L0 67.1Z"/><path transform="translate(1368)" d="M0 36.5L1 38.1L2 38L3 37.4L4 37.3L5 37.3L6 37.4L7 36L8 36L8 50L7 50L6 48.6L5 48.7L4 48.7L3 48.6L2 48L1 47.9L0 49.5ZM0 54.6L1 54L2 53.3L3 54.4L4 54.3L5 55.3L6 54.9L7 55.6L8 55.6L8 66.4L7 66.4L6 67.1L5 66.7L4 67.7L3 67.6L2 68.7L1 68L0 67.4Z"/><path transform="translate(1378)" d="M0 36.3L1 36.9L2 36.9L2 49.1L1 49.1L0 49.7ZM0 56L1 56.3L2 56.3L2 65.7L1 65.7L0 66Z"/><path transform="translate(1382)" d="M0 38.6L1 37.8L2 37.8L2 48.2L1 48.2L0 47.4ZM0 55.1L1 55.3L2 55.3L2 66.7L1 66.7L0 66.9Z"/><path transform="translate(1386)" d="M0 36.8L1 37.7L2 37.7L2 48.3L1 48.3L0 49.2ZM0 55.2L1 54.8L2 54.8L2 67.2L1 67.2L0 66.8Z"/><path transform="translate(1390)" d="M0 36.3L1 36.6L2 36.6L2 49.4L1 49.4L0 49.7ZM0 55.9L1 55.3L2 55.3L2 66.7L1 66.7L0 66.1Z"/><path transform="translate(1396)" d="M0 38.5L1 38.5L2 38.5L2 47.5L1 47.5L0 47.5ZM0 56L1 54.8L2 54.8L2 67.2L1 67.2L0 66Z"/><path transform="translate(1400)" d="M0 37.4L1 38.2L2 38.2L2 47.8L1 47.8L0 48.6ZM0 53.4L1 54.4L2 54.4L2 67.6L1 67.6L0 68.6Z"/><path transform="translate(1404)" d="M0 37.2L1 37.4L2 37.4L2 48.6L1 48.6L0 48.8ZM0 55.1L1 54.9L2 54.9L2 67.1L1 67.1L0 66.9Z"/><path transform="translate(1408)" d="M0 38.2L1 38.3L2 38.3L2 47.7L1 47.7L0 47.8ZM0 54.7L1 55.5L2 55.5L2 66.5L1 66.5L0 67.3Z"/><path transform="translate(1412)" d="M0 36.4L1 37.1L2 37.1L2 48.9L1 48.9L0 49.6ZM0 56.3L1 56.3L2 56.3L2 65.7L1 65.7L0 65.7Z"/><path transform="translate(1416)" d="M0 37.5L1 37.4L2 37.4L2 48.6L1 48.6L0 48.5ZM0 53.4L1 54.1L2 54.1L2 67.9L1 67.9L0 68.6Z"/><path transform="translate(1420)" d="M0 36.5L1 37.8L2 37.8L2 48.2L1 48.2L0 49.5ZM0 55.1L1 55.1L2 55.1L2 66.9L1 66.9L0 66.9Z"/><path transform="translate(1432)" d="M0 36.1L1 37.6L2 37.1L3 36.2L4 36.2L4 49.8L3 49.8L2 48.9L1 48.4L0 49.9ZM0 54.4L1 55.5L2 56.4L3 57.6L4 57.6L4 64.4L3 64.4L2 65.6L1 66.5L0 67.6Z"/><path transform="translate(1464)" d="M0 36L1 36.6L2 37.3L3 38.4L4 37.7L5 37.6L6 37.4L7 36.9L8 36.4L9 37.1L10 37.3L11 36.9L12 36.6L13 37.5L14 37.1L15 36.7L16 36.4L17 36.9L18 36.9L18 49.1L17 49.1L16 49.6L15 49.3L14 48.9L13 48.5L12 49.4L11 49.1L10 48.7L9 48.9L8 49.6L7 49.1L6 48.6L5 48.4L4 48.3L3 47.6L2 48.7L1 49.4L0 50ZM0 55.2L1 56.5L2 56.1L3 55.7L4 55L5 55.1L6 54.7L7 54.4L8 53.8L9 54.1L10 55.5L11 54.6L12 55L13 55.3L14 56.2L15 55.5L16 55.6L17 55.8L18 55.8L18 66.2L17 66.2L16 66.4L15 66.5L14 65.8L13 66.7L12 67L11 67.4L10 66.5L9 67.9L8 68.2L7 67.6L6 67.3L5 66.9L4 67L3 66.3L2 65.9L1 65.5L0 66.8Z"/><path transform="translate(1692)" d="M0 37.2L1 35.3L2 35L3 35L4 35L4 51L3 51L2 51L1 50.7L0 48.8ZM0 55.8L1 53.4L2 52.9L3 52.9L4 52.9L4 69.1L3 69.1L2 69.1L1 68.6L0 66.2Z"/><path transform="translate(1698)" d="M0 37.8L1 35.5L2 35L3 34.8L4 34.4L5 35L6 34.8L7 34.5L8 35L9 34.7L10 36.6L11 36.6L12 34.6L13 35.2L14 35.1L15 35L16 34.7L17 34.8L18 35L19 34.6L20 35.3L21 36.8L22 35.5L23 34.5L24 34.9L25 35L26 34.8L27 34.5L28 35.2L29 34.9L30 34.7L31 35.8L32 36.9L33 34.9L34 34.9L34 51.1L33 51.1L32 49.1L31 50.2L30 51.3L29 51.1L28 50.8L27 51.5L26 51.2L25 51L24 51.1L23 51.5L22 50.5L21 49.2L20 50.7L19 51.4L18 51L17 51.2L16 51.3L15 51L14 50.9L13 50.8L12 51.4L11 49.4L10 49.4L9 51.3L8 51L7 51.5L6 51.2L5 51L4 51.6L3 51.2L2 51L1 50.5L0 48.2ZM0 55.4L1 53.7L2 52.9L3 52.8L4 52.9L5 53L6 53L7 52.9L8 52.9L9 52.7L10 54.2L11 55L12 52.9L13 52.6L14 53.2L15 52.8L16 52.4L17 52.6L18 52.7L19 52.9L20 52.7L21 54.9L22 53.7L23 53.2L24 53L25 52.8L26 52.8L27 52.5L28 52.4L29 52.6L30 53.1L31 53.4L32 55.6L33 53L34 53L34 69L33 69L32 66.4L31 68.6L30 68.9L29 69.4L28 69.6L27 69.5L26 69.2L25 69.2L24 69L23 68.8L22 68.3L21 67.1L20 69.3L19 69.1L18 69.3L17 69.4L16 69.6L15 69.2L14 68.8L13 69.4L12 69.1L11 67L10 67.8L9 69.3L8 69.1L7 69.1L6 69L5 69L4 69.1L3 69.2L2 69.1L1 68.3L0 66.6Z"/><path transform="translate(1734)" d="M0 37.1L1 35.4L2 35.1L3 34.5L4 34.8L5 34.6L6 35.1L7 34.5L8 34.9L9 34.7L10 36.2L11 37.1L12 35L13 34.7L14 34.7L15 35L16 35.1L17 34.7L18 35.3L19 35.1L20 35.2L21 37.3L22 35.6L23 35L24 34.9L25 34.5L26 34.4L27 35.2L28 34.7L29 34.4L30 34.6L31 35.9L32 37.3L33 34.9L34 34.7L35 34.6L36 34.9L37 34.7L38 35.1L39 35.1L40 35.1L40 50.9L39 50.9L38 50.9L37 51.3L36 51.1L35 51.4L34 51.3L33 51.1L32 48.7L31 50.1L30 51.4L29 51.6L28 51.3L27 50.8L26 51.6L25 51.5L24 51.1L23 51L22 50.4L21 48.7L20 50.8L19 50.9L18 50.7L17 51.3L16 50.9L15 51L14 51.3L13 51.3L12 51L11 48.9L10 49.8L9 51.3L8 51.1L7 51.5L6 50.9L5 51.4L4 51.2L3 51.5L2 50.9L1 50.6L0 48.9ZM0 55L1 53.1L2 53.1L3 52.8L4 53L5 53.1L6 52.9L7 53.2L8 53.2L9 52.8L10 54.4L11 54.6L12 52.6L13 53L14 53.1L15 53.1L16 52.7L17 53.2L18 52.5L19 53.2L20 52.9L21 55.5L22 54L23 52.6L24 52.5L25 52.9L26 52.5L27 52.5L28 53.1L29 53.1L30 53.1L31 54.1L32 55.1L33 53.5L34 52.5L35 52.7L36 53.1L37 52.5L38 52.8L39 52.5L40 52.5L40 69.5L39 69.5L38 69.2L37 69.5L36 68.9L35 69.3L34 69.5L33 68.5L32 66.9L31 67.9L30 68.9L29 68.9L28 68.9L27 69.5L26 69.5L25 69.1L24 69.5L23 69.4L22 68L21 66.5L20 69.1L19 68.8L18 69.5L17 68.8L16 69.3L15 68.9L14 68.9L13 69L12 69.4L11 67.4L10 67.6L9 69.2L8 68.8L7 68.8L6 69.1L5 68.9L4 69L3 69.2L2 68.9L1 68.9L0 67Z"/><path transform="translate(1776)" d="M0 37.1L1 35.8L2 34.7L3 34.6L4 34.6L4 51.4L3 51.4L2 51.3L1 50.2L0 48.9ZM0 55.1L1 53.2L2 53L3 52.8L4 52.8L4 69.2L3 69.2L2 69L1 68.8L0 66.9Z"/><path transform="translate(1782)" d="M0 37.6L1 35.7L2 35.7L2 50.3L1 50.3L0 48.4ZM0 55.1L1 53.5L2 53.5L2 68.5L1 68.5L0 66.9Z"/><path transform="translate(1814)" d="M0 39.5L1 36.9L2 35.6L3 34.9L4 34.6L5 34.8L6 35.1L7 35.8L8 37.2L9 39.5L10 39.5L10 46.5L9 46.5L8 48.8L7 50.2L6 50.9L5 51.2L4 51.4L3 51.1L2 50.4L1 49.1L0 46.5ZM0 57.3L1 55.2L2 53.8L3 52.9L4 52.6L5 52.6L6 53L7 54L8 55.1L9 57.6L10 57.6L10 64.4L9 64.4L8 66.9L7 68L6 69L5 69.4L4 69.4L3 69.1L2 68.2L1 66.8L0 64.7Z"/><path transform="translate(1826)" d="M0 35.7L1 35.9L2 35.9L2 50.1L1 50.1L0 50.3ZM0 54L1 54L2 54L2 68L1 68L0 68Z"/><path transform="translate(1858)" d="M0 39.2L1 36.7L2 35.3L3 34.6L4 34.8L5 35.2L6 36.4L7 39.1L8 39.1L8 46.9L7 46.9L6 49.6L5 50.8L4 51.2L3 51.4L2 50.7L1 49.3L0 46.8ZM0 56.8L1 54.3L2 53.5L3 52.7L4 52.4L5 53.4L6 54.5L7 57L8 57L8 65L7 65L6 67.5L5 68.6L4 69.6L3 69.3L2 68.5L1 67.7L0 65.2Z"/><path transform="translate(1868)" d="M0 35.8L1 35.7L2 35.7L2 50.3L1 50.3L0 50.2ZM0 53.6L1 53.9L2 53.9L2 68.1L1 68.1L0 68.4Z"/><path transform="translate(1910)" d="M0 35.7L1 35.6L2 35.6L2 50.4L1 50.4L0 50.3ZM0 54L1 53.9L2 53.9L2 68.1L1 68.1L0 68Z"/><path transform="translate(1954)" d="M0 35.7L1 35.8L2 35.8L2 50.2L1 50.2L0 50.3ZM0 53.7L1 53.8L2 53.8L2 68.2L1 68.2L0 68.3Z"/><path transform="translate(1996)" d="M0 35.6L1 35.7L2 35.7L2 50.3L1 50.3L0 50.4ZM0 53.9L1 53.7L2 53.7L2 68.3L1 68.3L0 68.1Z"/><path transform="translate(2198)" d="M0 39.8L1 37.5L2 36.3L3 35.5L4 34.8L5 34.6L6 34.6L7 35L8 35.5L9 36.3L10 37.7L11 39.9L12 39.9L12 46.1L11 46.1L10 48.3L9 49.7L8 50.5L7 51L6 51.4L5 51.4L4 51.2L3 50.5L2 49.7L1 48.5L0 46.2ZM0 57.6L1 55.6L2 54L3 53.3L4 52.7L5 52.5L6 52.6L7 52.7L8 53.3L9 54.5L10 55.7L11 57.4L12 57.4L12 64.6L11 64.6L10 66.3L9 67.5L8 68.7L7 69.3L6 69.4L5 69.5L4 69.3L3 68.7L2 68L1 66.4L0 64.4Z"/></g></svg></div>
<div class="r t k_epic_drums" style="top:692px"><i class="c" style="left:694px;width:86px">epic_drums</i><i class="c" style="left:780px;width:84px">epic_drums</i><i class="c" style="left:864px;width:86px">epic_drums</i><i class="c" style="left:950px;width:84px">epic_drums</i><i class="c" style="left:1866px;width:86px">epic_drums</i><i class="c" style="left:1952px;width:84px">epic_drums</i><i class="c" style="left:2036px;width:86px">epic_drums</i><i class="c" style="left:2122px;width:84px">epic_drums</i><svg width="2270" height="70" viewBox="0 0 2270 70"><path d="M737 34v36M823 34v36M909 34v36M993 34v36M1889 34v36M1931 34v36M1973 34v36M2017 34v36M2059 34v36M2101 34v36M2143 34v36M2187 34v36" stroke="#000" stroke-opacity=".22" stroke-width="2" fill="none"/><g fill="#212621"><path transform="translate(696)" d="M0 35L1 35.2L2 36.2L3 36L4 34.8L5 34.4L6 34.4L7 34.4L8 35.5L9 36.6L10 37.5L11 38.2L12 38.8L13 40L14 40L15 39.6L16 37.9L17 37L18 36.6L19 34.7L20 34.4L21 34.9L22 36L23 36.5L24 35.7L25 35L26 36.3L27 37L28 38L29 39.5L30 40.3L31 40.3L32 38.8L33 38.6L34 37.3L35 36L36 35.8L37 35.4L38 35.9L39 36.3L40 35.6L41 34.4L42 34.7L43 35.3L44 35.7L45 36.7L46 35.2L47 34.7L48 34.4L49 34.5L50 34.8L51 35.8L52 37L53 38.1L54 38.9L55 39.6L56 40.4L57 40.1L58 38.7L59 37.9L60 37.3L61 36.2L62 34.5L63 35.1L64 35.6L65 36.9L66 35.8L67 34.7L68 35.7L69 36.8L70 37.5L71 38.3L72 39.4L73 40.2L74 39.9L75 39L76 37.8L77 37.4L78 36.3L79 35.4L80 34.8L81 36L82 36.5L83 35L84 35L84 51L83 51L82 49.5L81 50L80 51.2L79 50.6L78 49.7L77 48.6L76 48.2L75 47L74 46.1L73 45.8L72 46.6L71 47.7L70 48.5L69 49.2L68 50.3L67 51.3L66 50.2L65 49.1L64 50.4L63 50.9L62 51.5L61 49.8L60 48.7L59 48.1L58 47.3L57 45.9L56 45.6L55 46.4L54 47.1L53 47.9L52 49L51 50.2L50 51.2L49 51.5L48 51.6L47 51.3L46 50.8L45 49.3L44 50.3L43 50.7L42 51.3L41 51.6L40 50.4L39 49.7L38 50.1L37 50.6L36 50.2L35 50L34 48.7L33 47.4L32 47.2L31 45.7L30 45.7L29 46.5L28 48L27 49L26 49.7L25 51L24 50.3L23 49.5L22 50L21 51.1L20 51.6L19 51.3L18 49.4L17 49L16 48.1L15 46.4L14 46L13 46L12 47.2L11 47.8L10 48.5L9 49.4L8 50.5L7 51.6L6 51.6L5 51.6L4 51.2L3 50L2 49.8L1 50.8L0 51ZM0 52.4L1 54.2L2 54.2L3 53.3L4 53.3L5 52.7L6 52.9L7 52.4L8 53.1L9 54.2L10 55.3L11 56.2L12 57.1L13 58.6L14 57.9L15 57.3L16 55.9L17 55.1L18 54.6L19 53.5L20 52.4L21 53.6L22 54.1L23 54.6L24 53L25 53.7L26 53.7L27 55L28 56.3L29 57.2L30 57.6L31 57.8L32 57.2L33 55.9L34 55.5L35 54.4L36 53.1L37 53.2L38 53.6L39 54.5L40 53.6L41 52.6L42 52.4L43 52.8L44 54.3L45 54.5L46 53.6L47 52.8L48 52.7L49 52.8L50 52.7L51 53.3L52 54.3L53 55.2L54 56.2L55 57.2L56 58.7L57 57.9L58 56.5L59 55.8L60 54.6L61 53.9L62 53L63 53L64 53.9L65 54.6L66 53.9L67 53L68 53.6L69 54.8L70 55.4L71 56.1L72 57.3L73 58.3L74 58L75 56.7L76 56.3L77 54.6L78 53.8L79 53L80 52.8L81 54L82 54.3L83 53L84 53L84 69L83 69L82 67.7L81 68L80 69.2L79 69L78 68.2L77 67.4L76 65.7L75 65.3L74 64L73 63.7L72 64.7L71 65.9L70 66.6L69 67.2L68 68.4L67 69L66 68.1L65 67.4L64 68.1L63 69L62 69L61 68.1L60 67.4L59 66.2L58 65.5L57 64.1L56 63.3L55 64.8L54 65.8L53 66.8L52 67.7L51 68.7L50 69.3L49 69.2L48 69.3L47 69.2L46 68.4L45 67.5L44 67.7L43 69.2L42 69.6L41 69.4L40 68.4L39 67.5L38 68.4L37 68.8L36 68.9L35 67.6L34 66.5L33 66.1L32 64.8L31 64.2L30 64.4L29 64.8L28 65.7L27 67L26 68.3L25 68.3L24 69L23 67.4L22 67.9L21 68.4L20 69.6L19 68.5L18 67.4L17 66.9L16 66.1L15 64.7L14 64.1L13 63.4L12 64.9L11 65.8L10 66.7L9 67.8L8 68.9L7 69.6L6 69.1L5 69.3L4 68.7L3 68.7L2 67.8L1 67.8L0 69.6Z"/><path transform="translate(782)" d="M0 35L1 35.3L2 37L3 35.6L4 35.3L5 34.4L6 34.4L7 34.5L8 35.2L9 36.7L10 37L11 38.3L12 39.1L13 39.8L14 40.3L15 38.8L16 37.8L17 36.7L18 36.1L19 35.7L20 34.4L21 35.5L22 35.7L23 36.1L24 35.5L25 35.4L26 35.9L27 37.6L28 38.3L29 39.1L30 39.6L31 40.6L32 38.8L33 37.9L34 37.6L35 36.3L36 35.3L37 34.9L38 36.1L39 36.4L40 35.5L41 34.8L42 34.4L43 35.2L44 35.9L45 36.1L46 35.6L47 34.7L48 34.4L49 34.7L50 34.7L51 35.5L52 36.4L53 38L54 38.5L55 39.8L56 40.7L57 40L58 38.2L59 38L60 37.2L61 35.5L62 34.8L63 35.1L64 35.2L65 36.5L66 36.2L67 35.1L68 35.6L69 36.7L70 37.5L71 38L72 39.3L73 40.5L74 39.5L75 38.9L76 38.3L77 36.7L78 35.9L79 35.4L80 34.9L81 35.5L82 35.5L82 50.5L81 50.5L80 51.1L79 50.6L78 50.1L77 49.3L76 47.7L75 47.1L74 46.5L73 45.5L72 46.7L71 48L70 48.5L69 49.3L68 50.4L67 50.9L66 49.8L65 49.5L64 50.8L63 50.9L62 51.2L61 50.5L60 48.8L59 48L58 47.8L57 46L56 45.3L55 46.2L54 47.5L53 48L52 49.6L51 50.5L50 51.3L49 51.3L48 51.6L47 51.3L46 50.4L45 49.9L44 50.1L43 50.8L42 51.6L41 51.2L40 50.5L39 49.6L38 49.9L37 51.1L36 50.7L35 49.7L34 48.4L33 48.1L32 47.2L31 45.4L30 46.4L29 46.9L28 47.7L27 48.4L26 50.1L25 50.6L24 50.5L23 49.9L22 50.3L21 50.5L20 51.6L19 50.3L18 49.9L17 49.3L16 48.2L15 47.2L14 45.7L13 46.2L12 46.9L11 47.7L10 49L9 49.3L8 50.8L7 51.5L6 51.6L5 51.6L4 50.7L3 50.4L2 49L1 50.7L0 51ZM0 52.6L1 53.3L2 54.7L3 53.4L4 52.7L5 52.4L6 52.5L7 52.7L8 53L9 54.2L10 54.8L11 55.9L12 57.7L13 58.5L14 58.2L15 56.6L16 55.9L17 55.3L18 54.3L19 52.8L20 52.9L21 53.7L22 54.5L23 53.7L24 53.5L25 53.1L26 54.2L27 54.8L28 56.2L29 57L30 57.8L31 58.4L32 57.4L33 56.6L34 54.9L35 54.3L36 53.5L37 52.7L38 53.8L39 54.3L40 53.9L41 53.2L42 52.7L43 52.8L44 54.1L45 54.1L46 53.9L47 52.6L48 52.5L49 52.4L50 52.6L51 53.9L52 54.4L53 55.4L54 56.4L55 57.7L56 58.9L57 57.4L58 56.5L59 55.6L60 54.7L61 53.6L62 52.9L63 52.7L64 53.7L65 54.5L66 54.2L67 53.5L68 53.7L69 54.3L70 56L71 56L72 57.6L73 58.2L74 58L75 56.9L76 56.1L77 55.2L78 54.1L79 53.1L80 52.7L81 54.5L82 54.5L82 67.5L81 67.5L80 69.3L79 68.9L78 67.9L77 66.8L76 65.9L75 65.1L74 64L73 63.8L72 64.4L71 66L70 66L69 67.7L68 68.3L67 68.5L66 67.8L65 67.5L64 68.3L63 69.3L62 69.1L61 68.4L60 67.3L59 66.4L58 65.5L57 64.6L56 63.1L55 64.3L54 65.6L53 66.6L52 67.6L51 68.1L50 69.4L49 69.6L48 69.5L47 69.4L46 68.1L45 67.9L44 67.9L43 69.2L42 69.3L41 68.8L40 68.1L39 67.7L38 68.2L37 69.3L36 68.5L35 67.7L34 67.1L33 65.4L32 64.6L31 63.6L30 64.2L29 65L28 65.8L27 67.2L26 67.8L25 68.9L24 68.5L23 68.3L22 67.5L21 68.3L20 69.1L19 69.2L18 67.7L17 66.7L16 66.1L15 65.4L14 63.8L13 63.5L12 64.3L11 66.1L10 67.2L9 67.8L8 69L7 69.3L6 69.5L5 69.6L4 69.3L3 68.6L2 67.3L1 68.7L0 69.4Z"/><path transform="translate(866)" d="M0 34.7L1 35.7L2 36.9L3 35.3L4 34.4L5 34.5L6 34.4L7 34.4L8 35.5L9 36.5L10 37.7L11 38.3L12 38.9L13 40L14 40.1L15 39.2L16 37.6L17 37.4L18 36.4L19 34.9L20 34.4L21 35.7L22 35.8L23 35.8L24 35.2L25 34.9L26 36.1L27 36.9L28 38L29 39.4L30 39.7L31 40.3L32 39.8L33 38.5L34 36.9L35 36.2L36 35.7L37 35.4L38 36.2L39 36.4L40 36L41 35L42 34.7L43 35L44 35.8L45 36.2L46 34.9L47 34.9L48 34.4L49 34.4L50 35.2L51 36.1L52 36.3L53 37.9L54 38.5L55 39.8L56 41L57 39.7L58 38.3L59 37.5L60 36.9L61 36.1L62 35.1L63 35.2L64 35.5L65 36.8L66 36.2L67 35.5L68 35.9L69 37.1L70 37.4L71 38.7L72 39.7L73 40.4L74 39.9L75 39.4L76 37.5L77 37.3L78 36.5L79 35.5L80 34.7L81 35.8L82 36.1L83 35.4L84 35.4L84 50.6L83 50.6L82 49.9L81 50.2L80 51.3L79 50.5L78 49.5L77 48.7L76 48.5L75 46.6L74 46.1L73 45.6L72 46.3L71 47.3L70 48.6L69 48.9L68 50.1L67 50.5L66 49.8L65 49.2L64 50.5L63 50.8L62 50.9L61 49.9L60 49.1L59 48.5L58 47.7L57 46.3L56 45L55 46.2L54 47.5L53 48.1L52 49.7L51 49.9L50 50.8L49 51.6L48 51.6L47 51.1L46 51.1L45 49.8L44 50.2L43 51L42 51.3L41 51L40 50L39 49.6L38 49.8L37 50.6L36 50.3L35 49.8L34 49.1L33 47.5L32 46.2L31 45.7L30 46.3L29 46.6L28 48L27 49.1L26 49.9L25 51.1L24 50.8L23 50.2L22 50.2L21 50.3L20 51.6L19 51.1L18 49.6L17 48.6L16 48.4L15 46.8L14 45.9L13 46L12 47.1L11 47.7L10 48.3L9 49.5L8 50.5L7 51.6L6 51.6L5 51.5L4 51.6L3 50.7L2 49.1L1 50.3L0 51.3ZM0 53L1 53.2L2 54.7L3 53.9L4 53.3L5 52.4L6 52.6L7 52.8L8 53.7L9 54.7L10 55.7L11 56.3L12 57.2L13 57.9L14 58.2L15 57L16 56.1L17 55L18 54L19 53.2L20 52.8L21 53.1L22 53.7L23 54.3L24 53L25 53.7L26 54.3L27 55.6L28 56.5L29 57L30 57.6L31 58.6L32 56.9L33 56.8L34 55.5L35 54.2L36 53.8L37 53.4L38 53.7L39 54.1L40 53.9L41 52.6L42 52.4L43 53.3L44 53.8L45 54.4L46 53.7L47 52.4L48 52.4L49 52.4L50 53.2L51 54.2L52 55.1L53 55.9L54 56.8L55 57.7L56 58.4L57 57.3L58 56.8L59 55.2L60 55.1L61 53.9L62 52.6L63 52.4L64 53.6L65 54.1L66 53.4L67 53.1L68 53.8L69 55L70 55.5L71 56.3L72 57.1L73 58.5L74 57.6L75 56.6L76 55.6L77 54.6L78 54.2L79 52.6L80 53.1L81 53.8L82 54.4L83 53.2L84 53.2L84 68.8L83 68.8L82 67.6L81 68.2L80 68.9L79 69.4L78 67.8L77 67.4L76 66.4L75 65.4L74 64.4L73 63.5L72 64.9L71 65.7L70 66.5L69 67L68 68.2L67 68.9L66 68.6L65 67.9L64 68.4L63 69.6L62 69.4L61 68.1L60 66.9L59 66.8L58 65.2L57 64.7L56 63.6L55 64.3L54 65.2L53 66.1L52 66.9L51 67.8L50 68.8L49 69.6L48 69.6L47 69.6L46 68.3L45 67.6L44 68.2L43 68.7L42 69.6L41 69.4L40 68.1L39 67.9L38 68.3L37 68.6L36 68.2L35 67.8L34 66.5L33 65.2L32 65.1L31 63.4L30 64.4L29 65L28 65.5L27 66.4L26 67.7L25 68.3L24 69L23 67.7L22 68.3L21 68.9L20 69.2L19 68.8L18 68L17 67L16 65.9L15 65L14 63.8L13 64.1L12 64.8L11 65.7L10 66.3L9 67.3L8 68.3L7 69.2L6 69.4L5 69.6L4 68.7L3 68.1L2 67.3L1 68.8L0 69Z"/><path transform="translate(952)" d="M0 35L1 35.4L2 36.2L3 35.3L4 34.7L5 34.4L6 34.7L7 34.8L8 35.9L9 36L10 36.9L11 38.3L12 38.9L13 40.4L14 39.8L15 38.8L16 38L17 37.1L18 36.2L19 35.4L20 34.4L21 35.4L22 35.9L23 36.1L24 35L25 35.7L26 36.3L27 37.2L28 38.4L29 39L30 40.4L31 40.1L32 39.2L33 37.9L34 36.9L35 36.7L36 35L37 35.4L38 35.9L39 37L40 36.1L41 34.5L42 34.7L43 35.6L44 36.4L45 36L46 35.5L47 34.4L48 34.4L49 34.7L50 34.9L51 36L52 36.5L53 37.6L54 38.2L55 40L56 40.4L57 39.9L58 38.2L59 37.9L60 36.4L61 35.9L62 35.3L63 35.1L64 35.9L65 36L66 35.8L67 35.3L68 35.5L69 36.1L70 37.1L71 38.3L72 39.7L73 40.5L74 40.3L75 38.6L76 37.8L77 37.2L78 35.9L79 35.4L80 35.5L81 35.8L82 35.8L82 50.2L81 50.2L80 50.5L79 50.6L78 50.1L77 48.8L76 48.2L75 47.4L74 45.7L73 45.5L72 46.3L71 47.7L70 48.9L69 49.9L68 50.5L67 50.7L66 50.2L65 50L64 50.1L63 50.9L62 50.7L61 50.1L60 49.6L59 48.1L58 47.8L57 46.1L56 45.6L55 46L54 47.8L53 48.4L52 49.5L51 50L50 51.1L49 51.3L48 51.6L47 51.6L46 50.5L45 50L44 49.6L43 50.4L42 51.3L41 51.5L40 49.9L39 49L38 50.1L37 50.6L36 51L35 49.3L34 49.1L33 48.1L32 46.8L31 45.9L30 45.6L29 47L28 47.6L27 48.8L26 49.7L25 50.3L24 51L23 49.9L22 50.1L21 50.6L20 51.6L19 50.6L18 49.8L17 48.9L16 48L15 47.2L14 46.2L13 45.6L12 47.1L11 47.7L10 49.1L9 50L8 50.1L7 51.2L6 51.3L5 51.6L4 51.3L3 50.7L2 49.8L1 50.6L0 51ZM0 53.3L1 53.9L2 54.9L3 54L4 53.1L5 52.9L6 52.5L7 52.8L8 53.9L9 54.5L10 55.5L11 56.6L12 57.6L13 58.5L14 57.8L15 56.9L16 56.1L17 54.7L18 54L19 52.8L20 52.6L21 52.8L22 53.8L23 54L24 53.4L25 53.6L26 53.9L27 55.5L28 56.4L29 57.4L30 58.5L31 57.8L32 57.3L33 56.8L34 54.9L35 54.2L36 53.4L37 53.4L38 53.5L39 54.1L40 53.8L41 52.6L42 52.4L43 53.2L44 53.7L45 54.7L46 53.5L47 52.4L48 52.4L49 52.8L50 52.5L51 54.2L52 54.3L53 55.7L54 56.4L55 58L56 59L57 57.5L58 56.3L59 55.4L60 54.8L61 54.1L62 53.2L63 52.4L64 53.4L65 54.5L66 53.6L67 53.4L68 53.5L69 54.3L70 55.4L71 56.7L72 57.7L73 58.9L74 57.3L75 56.5L76 56.2L77 55.4L78 53.8L79 53.2L80 52.9L81 53.9L82 53.9L82 68.1L81 68.1L80 69.1L79 68.8L78 68.2L77 66.6L76 65.8L75 65.5L74 64.7L73 63.1L72 64.3L71 65.3L70 66.6L69 67.7L68 68.5L67 68.6L66 68.4L65 67.5L64 68.6L63 69.6L62 68.8L61 67.9L60 67.2L59 66.6L58 65.7L57 64.5L56 63L55 64L54 65.6L53 66.3L52 67.7L51 67.8L50 69.5L49 69.2L48 69.6L47 69.6L46 68.5L45 67.3L44 68.3L43 68.8L42 69.6L41 69.4L40 68.2L39 67.9L38 68.5L37 68.6L36 68.6L35 67.8L34 67.1L33 65.2L32 64.7L31 64.2L30 63.5L29 64.6L28 65.6L27 66.5L26 68.1L25 68.4L24 68.6L23 68L22 68.2L21 69.2L20 69.4L19 69.2L18 68L17 67.3L16 65.9L15 65.1L14 64.2L13 63.5L12 64.4L11 65.4L10 66.5L9 67.5L8 68.1L7 69.2L6 69.5L5 69.1L4 68.9L3 68L2 67.1L1 68.1L0 68.7Z"/><path transform="translate(1868)" d="M0 35L1 35.2L2 36.2L3 36L4 34.8L5 34.4L6 34.4L7 34.4L8 35.5L9 36.6L10 37.5L11 38.2L12 38.8L13 40L14 40L15 39.6L16 37.9L17 37L18 36.6L19 34.7L20 34.4L21 34.9L22 36L23 36.5L24 35.7L25 35L26 36.3L27 37L28 38L29 39.5L30 40.3L31 40.3L32 38.8L33 38.6L34 37.3L35 36L36 35.8L37 35.4L38 35.9L39 36.3L40 35.6L41 34.4L42 34.7L43 35.3L44 35.7L45 36.7L46 35.2L47 34.7L48 34.4L49 34.5L50 34.8L51 35.8L52 37L53 38.1L54 38.9L55 39.6L56 40.4L57 40.1L58 38.7L59 37.9L60 37.3L61 36.2L62 34.5L63 35.1L64 35.6L65 36.9L66 35.8L67 34.7L68 35.7L69 36.8L70 37.5L71 38.3L72 39.4L73 40.2L74 39.9L75 39L76 37.8L77 37.4L78 36.3L79 35.4L80 34.8L81 36L82 36.5L83 35L84 35L84 51L83 51L82 49.5L81 50L80 51.2L79 50.6L78 49.7L77 48.6L76 48.2L75 47L74 46.1L73 45.8L72 46.6L71 47.7L70 48.5L69 49.2L68 50.3L67 51.3L66 50.2L65 49.1L64 50.4L63 50.9L62 51.5L61 49.8L60 48.7L59 48.1L58 47.3L57 45.9L56 45.6L55 46.4L54 47.1L53 47.9L52 49L51 50.2L50 51.2L49 51.5L48 51.6L47 51.3L46 50.8L45 49.3L44 50.3L43 50.7L42 51.3L41 51.6L40 50.4L39 49.7L38 50.1L37 50.6L36 50.2L35 50L34 48.7L33 47.4L32 47.2L31 45.7L30 45.7L29 46.5L28 48L27 49L26 49.7L25 51L24 50.3L23 49.5L22 50L21 51.1L20 51.6L19 51.3L18 49.4L17 49L16 48.1L15 46.4L14 46L13 46L12 47.2L11 47.8L10 48.5L9 49.4L8 50.5L7 51.6L6 51.6L5 51.6L4 51.2L3 50L2 49.8L1 50.8L0 51ZM0 52.4L1 54.2L2 54.2L3 53.3L4 53.3L5 52.7L6 52.9L7 52.4L8 53.1L9 54.2L10 55.3L11 56.2L12 57.1L13 58.6L14 57.9L15 57.3L16 55.9L17 55.1L18 54.6L19 53.5L20 52.4L21 53.6L22 54.1L23 54.6L24 53L25 53.7L26 53.7L27 55L28 56.3L29 57.2L30 57.6L31 57.8L32 57.2L33 55.9L34 55.5L35 54.4L36 53.1L37 53.2L38 53.6L39 54.5L40 53.6L41 52.6L42 52.4L43 52.8L44 54.3L45 54.5L46 53.6L47 52.8L48 52.7L49 52.8L50 52.7L51 53.3L52 54.3L53 55.2L54 56.2L55 57.2L56 58.7L57 57.9L58 56.5L59 55.8L60 54.6L61 53.9L62 53L63 53L64 53.9L65 54.6L66 53.9L67 53L68 53.6L69 54.8L70 55.4L71 56.1L72 57.3L73 58.3L74 58L75 56.7L76 56.3L77 54.6L78 53.8L79 53L80 52.8L81 54L82 54.3L83 53L84 53L84 69L83 69L82 67.7L81 68L80 69.2L79 69L78 68.2L77 67.4L76 65.7L75 65.3L74 64L73 63.7L72 64.7L71 65.9L70 66.6L69 67.2L68 68.4L67 69L66 68.1L65 67.4L64 68.1L63 69L62 69L61 68.1L60 67.4L59 66.2L58 65.5L57 64.1L56 63.3L55 64.8L54 65.8L53 66.8L52 67.7L51 68.7L50 69.3L49 69.2L48 69.3L47 69.2L46 68.4L45 67.5L44 67.7L43 69.2L42 69.6L41 69.4L40 68.4L39 67.5L38 68.4L37 68.8L36 68.9L35 67.6L34 66.5L33 66.1L32 64.8L31 64.2L30 64.4L29 64.8L28 65.7L27 67L26 68.3L25 68.3L24 69L23 67.4L22 67.9L21 68.4L20 69.6L19 68.5L18 67.4L17 66.9L16 66.1L15 64.7L14 64.1L13 63.4L12 64.9L11 65.8L10 66.7L9 67.8L8 68.9L7 69.6L6 69.1L5 69.3L4 68.7L3 68.7L2 67.8L1 67.8L0 69.6Z"/><path transform="translate(1954)" d="M0 35L1 35.3L2 37L3 35.6L4 35.3L5 34.4L6 34.4L7 34.5L8 35.2L9 36.7L10 37L11 38.3L12 39.1L13 39.8L14 40.3L15 38.8L16 37.8L17 36.7L18 36.1L19 35.7L20 34.4L21 35.5L22 35.7L23 36.1L24 35.5L25 35.4L26 35.9L27 37.6L28 38.3L29 39.1L30 39.6L31 40.6L32 38.8L33 37.9L34 37.6L35 36.3L36 35.3L37 34.9L38 36.1L39 36.4L40 35.5L41 34.8L42 34.4L43 35.2L44 35.9L45 36.1L46 35.6L47 34.7L48 34.4L49 34.7L50 34.7L51 35.5L52 36.4L53 38L54 38.5L55 39.8L56 40.7L57 40L58 38.2L59 38L60 37.2L61 35.5L62 34.8L63 35.1L64 35.2L65 36.5L66 36.2L67 35.1L68 35.6L69 36.7L70 37.5L71 38L72 39.3L73 40.5L74 39.5L75 38.9L76 38.3L77 36.7L78 35.9L79 35.4L80 34.9L81 35.5L82 35.5L82 50.5L81 50.5L80 51.1L79 50.6L78 50.1L77 49.3L76 47.7L75 47.1L74 46.5L73 45.5L72 46.7L71 48L70 48.5L69 49.3L68 50.4L67 50.9L66 49.8L65 49.5L64 50.8L63 50.9L62 51.2L61 50.5L60 48.8L59 48L58 47.8L57 46L56 45.3L55 46.2L54 47.5L53 48L52 49.6L51 50.5L50 51.3L49 51.3L48 51.6L47 51.3L46 50.4L45 49.9L44 50.1L43 50.8L42 51.6L41 51.2L40 50.5L39 49.6L38 49.9L37 51.1L36 50.7L35 49.7L34 48.4L33 48.1L32 47.2L31 45.4L30 46.4L29 46.9L28 47.7L27 48.4L26 50.1L25 50.6L24 50.5L23 49.9L22 50.3L21 50.5L20 51.6L19 50.3L18 49.9L17 49.3L16 48.2L15 47.2L14 45.7L13 46.2L12 46.9L11 47.7L10 49L9 49.3L8 50.8L7 51.5L6 51.6L5 51.6L4 50.7L3 50.4L2 49L1 50.7L0 51ZM0 52.6L1 53.3L2 54.7L3 53.4L4 52.7L5 52.4L6 52.5L7 52.7L8 53L9 54.2L10 54.8L11 55.9L12 57.7L13 58.5L14 58.2L15 56.6L16 55.9L17 55.3L18 54.3L19 52.8L20 52.9L21 53.7L22 54.5L23 53.7L24 53.5L25 53.1L26 54.2L27 54.8L28 56.2L29 57L30 57.8L31 58.4L32 57.4L33 56.6L34 54.9L35 54.3L36 53.5L37 52.7L38 53.8L39 54.3L40 53.9L41 53.2L42 52.7L43 52.8L44 54.1L45 54.1L46 53.9L47 52.6L48 52.5L49 52.4L50 52.6L51 53.9L52 54.4L53 55.4L54 56.4L55 57.7L56 58.9L57 57.4L58 56.5L59 55.6L60 54.7L61 53.6L62 52.9L63 52.7L64 53.7L65 54.5L66 54.2L67 53.5L68 53.7L69 54.3L70 56L71 56L72 57.6L73 58.2L74 58L75 56.9L76 56.1L77 55.2L78 54.1L79 53.1L80 52.7L81 54.5L82 54.5L82 67.5L81 67.5L80 69.3L79 68.9L78 67.9L77 66.8L76 65.9L75 65.1L74 64L73 63.8L72 64.4L71 66L70 66L69 67.7L68 68.3L67 68.5L66 67.8L65 67.5L64 68.3L63 69.3L62 69.1L61 68.4L60 67.3L59 66.4L58 65.5L57 64.6L56 63.1L55 64.3L54 65.6L53 66.6L52 67.6L51 68.1L50 69.4L49 69.6L48 69.5L47 69.4L46 68.1L45 67.9L44 67.9L43 69.2L42 69.3L41 68.8L40 68.1L39 67.7L38 68.2L37 69.3L36 68.5L35 67.7L34 67.1L33 65.4L32 64.6L31 63.6L30 64.2L29 65L28 65.8L27 67.2L26 67.8L25 68.9L24 68.5L23 68.3L22 67.5L21 68.3L20 69.1L19 69.2L18 67.7L17 66.7L16 66.1L15 65.4L14 63.8L13 63.5L12 64.3L11 66.1L10 67.2L9 67.8L8 69L7 69.3L6 69.5L5 69.6L4 69.3L3 68.6L2 67.3L1 68.7L0 69.4Z"/><path transform="translate(2038)" d="M0 34.7L1 35.7L2 36.9L3 35.3L4 34.4L5 34.5L6 34.4L7 34.4L8 35.5L9 36.5L10 37.7L11 38.3L12 38.9L13 40L14 40.1L15 39.2L16 37.6L17 37.4L18 36.4L19 34.9L20 34.4L21 35.7L22 35.8L23 35.8L24 35.2L25 34.9L26 36.1L27 36.9L28 38L29 39.4L30 39.7L31 40.3L32 39.8L33 38.5L34 36.9L35 36.2L36 35.7L37 35.4L38 36.2L39 36.4L40 36L41 35L42 34.7L43 35L44 35.8L45 36.2L46 34.9L47 34.9L48 34.4L49 34.4L50 35.2L51 36.1L52 36.3L53 37.9L54 38.5L55 39.8L56 41L57 39.7L58 38.3L59 37.5L60 36.9L61 36.1L62 35.1L63 35.2L64 35.5L65 36.8L66 36.2L67 35.5L68 35.9L69 37.1L70 37.4L71 38.7L72 39.7L73 40.4L74 39.9L75 39.4L76 37.5L77 37.3L78 36.5L79 35.5L80 34.7L81 35.8L82 36.1L83 35.4L84 35.4L84 50.6L83 50.6L82 49.9L81 50.2L80 51.3L79 50.5L78 49.5L77 48.7L76 48.5L75 46.6L74 46.1L73 45.6L72 46.3L71 47.3L70 48.6L69 48.9L68 50.1L67 50.5L66 49.8L65 49.2L64 50.5L63 50.8L62 50.9L61 49.9L60 49.1L59 48.5L58 47.7L57 46.3L56 45L55 46.2L54 47.5L53 48.1L52 49.7L51 49.9L50 50.8L49 51.6L48 51.6L47 51.1L46 51.1L45 49.8L44 50.2L43 51L42 51.3L41 51L40 50L39 49.6L38 49.8L37 50.6L36 50.3L35 49.8L34 49.1L33 47.5L32 46.2L31 45.7L30 46.3L29 46.6L28 48L27 49.1L26 49.9L25 51.1L24 50.8L23 50.2L22 50.2L21 50.3L20 51.6L19 51.1L18 49.6L17 48.6L16 48.4L15 46.8L14 45.9L13 46L12 47.1L11 47.7L10 48.3L9 49.5L8 50.5L7 51.6L6 51.6L5 51.5L4 51.6L3 50.7L2 49.1L1 50.3L0 51.3ZM0 53L1 53.2L2 54.7L3 53.9L4 53.3L5 52.4L6 52.6L7 52.8L8 53.7L9 54.7L10 55.7L11 56.3L12 57.2L13 57.9L14 58.2L15 57L16 56.1L17 55L18 54L19 53.2L20 52.8L21 53.1L22 53.7L23 54.3L24 53L25 53.7L26 54.3L27 55.6L28 56.5L29 57L30 57.6L31 58.6L32 56.9L33 56.8L34 55.5L35 54.2L36 53.8L37 53.4L38 53.7L39 54.1L40 53.9L41 52.6L42 52.4L43 53.3L44 53.8L45 54.4L46 53.7L47 52.4L48 52.4L49 52.4L50 53.2L51 54.2L52 55.1L53 55.9L54 56.8L55 57.7L56 58.4L57 57.3L58 56.8L59 55.2L60 55.1L61 53.9L62 52.6L63 52.4L64 53.6L65 54.1L66 53.4L67 53.1L68 53.8L69 55L70 55.5L71 56.3L72 57.1L73 58.5L74 57.6L75 56.6L76 55.6L77 54.6L78 54.2L79 52.6L80 53.1L81 53.8L82 54.4L83 53.2L84 53.2L84 68.8L83 68.8L82 67.6L81 68.2L80 68.9L79 69.4L78 67.8L77 67.4L76 66.4L75 65.4L74 64.4L73 63.5L72 64.9L71 65.7L70 66.5L69 67L68 68.2L67 68.9L66 68.6L65 67.9L64 68.4L63 69.6L62 69.4L61 68.1L60 66.9L59 66.8L58 65.2L57 64.7L56 63.6L55 64.3L54 65.2L53 66.1L52 66.9L51 67.8L50 68.8L49 69.6L48 69.6L47 69.6L46 68.3L45 67.6L44 68.2L43 68.7L42 69.6L41 69.4L40 68.1L39 67.9L38 68.3L37 68.6L36 68.2L35 67.8L34 66.5L33 65.2L32 65.1L31 63.4L30 64.4L29 65L28 65.5L27 66.4L26 67.7L25 68.3L24 69L23 67.7L22 68.3L21 68.9L20 69.2L19 68.8L18 68L17 67L16 65.9L15 65L14 63.8L13 64.1L12 64.8L11 65.7L10 66.3L9 67.3L8 68.3L7 69.2L6 69.4L5 69.6L4 68.7L3 68.1L2 67.3L1 68.8L0 69Z"/><path transform="translate(2124)" d="M0 35L1 35.4L2 36.2L3 35.3L4 34.7L5 34.4L6 34.7L7 34.8L8 35.9L9 36L10 36.9L11 38.3L12 38.9L13 40.4L14 39.8L15 38.8L16 38L17 37.1L18 36.2L19 35.4L20 34.4L21 35.4L22 35.9L23 36.1L24 35L25 35.7L26 36.3L27 37.2L28 38.4L29 39L30 40.4L31 40.1L32 39.2L33 37.9L34 36.9L35 36.7L36 35L37 35.4L38 35.9L39 37L40 36.1L41 34.5L42 34.7L43 35.6L44 36.4L45 36L46 35.5L47 34.4L48 34.4L49 34.7L50 34.9L51 36L52 36.5L53 37.6L54 38.2L55 40L56 40.4L57 39.9L58 38.2L59 37.9L60 36.4L61 35.9L62 35.3L63 35.1L64 35.9L65 36L66 35.8L67 35.3L68 35.5L69 36.1L70 37.1L71 38.3L72 39.7L73 40.5L74 40.3L75 38.6L76 37.8L77 37.2L78 35.9L79 35.4L80 35.5L81 35.8L82 35.8L82 50.2L81 50.2L80 50.5L79 50.6L78 50.1L77 48.8L76 48.2L75 47.4L74 45.7L73 45.5L72 46.3L71 47.7L70 48.9L69 49.9L68 50.5L67 50.7L66 50.2L65 50L64 50.1L63 50.9L62 50.7L61 50.1L60 49.6L59 48.1L58 47.8L57 46.1L56 45.6L55 46L54 47.8L53 48.4L52 49.5L51 50L50 51.1L49 51.3L48 51.6L47 51.6L46 50.5L45 50L44 49.6L43 50.4L42 51.3L41 51.5L40 49.9L39 49L38 50.1L37 50.6L36 51L35 49.3L34 49.1L33 48.1L32 46.8L31 45.9L30 45.6L29 47L28 47.6L27 48.8L26 49.7L25 50.3L24 51L23 49.9L22 50.1L21 50.6L20 51.6L19 50.6L18 49.8L17 48.9L16 48L15 47.2L14 46.2L13 45.6L12 47.1L11 47.7L10 49.1L9 50L8 50.1L7 51.2L6 51.3L5 51.6L4 51.3L3 50.7L2 49.8L1 50.6L0 51ZM0 53.3L1 53.9L2 54.9L3 54L4 53.1L5 52.9L6 52.5L7 52.8L8 53.9L9 54.5L10 55.5L11 56.6L12 57.6L13 58.5L14 57.8L15 56.9L16 56.1L17 54.7L18 54L19 52.8L20 52.6L21 52.8L22 53.8L23 54L24 53.4L25 53.6L26 53.9L27 55.5L28 56.4L29 57.4L30 58.5L31 57.8L32 57.3L33 56.8L34 54.9L35 54.2L36 53.4L37 53.4L38 53.5L39 54.1L40 53.8L41 52.6L42 52.4L43 53.2L44 53.7L45 54.7L46 53.5L47 52.4L48 52.4L49 52.8L50 52.5L51 54.2L52 54.3L53 55.7L54 56.4L55 58L56 59L57 57.5L58 56.3L59 55.4L60 54.8L61 54.1L62 53.2L63 52.4L64 53.4L65 54.5L66 53.6L67 53.4L68 53.5L69 54.3L70 55.4L71 56.7L72 57.7L73 58.9L74 57.3L75 56.5L76 56.2L77 55.4L78 53.8L79 53.2L80 52.9L81 53.9L82 53.9L82 68.1L81 68.1L80 69.1L79 68.8L78 68.2L77 66.6L76 65.8L75 65.5L74 64.7L73 63.1L72 64.3L71 65.3L70 66.6L69 67.7L68 68.5L67 68.6L66 68.4L65 67.5L64 68.6L63 69.6L62 68.8L61 67.9L60 67.2L59 66.6L58 65.7L57 64.5L56 63L55 64L54 65.6L53 66.3L52 67.7L51 67.8L50 69.5L49 69.2L48 69.6L47 69.6L46 68.5L45 67.3L44 68.3L43 68.8L42 69.6L41 69.4L40 68.2L39 67.9L38 68.5L37 68.6L36 68.6L35 67.8L34 67.1L33 65.2L32 64.7L31 64.2L30 63.5L29 64.6L28 65.6L27 66.5L26 68.1L25 68.4L24 68.6L23 68L22 68.2L21 69.2L20 69.4L19 69.2L18 68L17 67.3L16 65.9L15 65.1L14 64.2L13 63.5L12 64.4L11 65.4L10 66.5L9 67.5L8 68.1L7 69.2L6 69.5L5 69.1L4 68.9L3 68L2 67.1L1 68.1L0 68.7Z"/></g></svg></div>
<div class="r t k_epic_drums_" style="top:766px"><i class="c" style="left:524px;width:84px">epic_drums</i><i class="c" style="left:608px;width:86px">epic_drums</i><i class="c" style="left:694px;width:86px">epic_drums</i><i class="c" style="left:780px;width:84px">epic_drums</i><i class="c" style="left:864px;width:86px">epic_drums</i><i class="c" style="left:950px;width:84px">epic_drums</i><i class="c" style="left:1696px;width:84px">epic_drums</i><i class="c" style="left:1780px;width:86px">epic_drums</i><i class="c" style="left:1866px;width:86px">epic_drums</i><i class="c" style="left:1952px;width:84px">epic_drums</i><i class="c" style="left:2036px;width:86px">epic_drums</i><i class="c" style="left:2122px;width:84px">epic_drums</i><svg width="2270" height="70" viewBox="0 0 2270 70"><path d="M567 34v36M653 34v36M737 34v36M823 34v36M909 34v36M993 34v36M1717 34v36M1761 34v36M1803 34v36M1845 34v36M1889 34v36M1931 34v36M1973 34v36M2017 34v36M2059 34v36M2101 34v36M2143 34v36M2187 34v36" stroke="#000" stroke-opacity=".22" stroke-width="2" fill="none"/><g fill="#1f2623"><path transform="translate(526)" d="M0 35.1L1 36.4L2 37.7L3 39L4 39.3L5 38.8L6 38.5L7 39.2L8 39.4L9 39.2L10 38L11 38.9L12 38.2L13 37.7L14 37.7L15 38.1L16 38.2L17 38L18 38.3L19 37.1L20 37.4L21 37L22 37.3L23 37.9L24 37.2L25 37.4L26 37.6L27 36.9L28 36.8L29 36.8L30 36L31 35.8L32 36.7L33 36.1L34 36.4L35 35.5L36 36.3L37 35.9L38 35.8L39 35.6L40 35.8L41 35.1L42 36.4L43 37.7L44 39L45 38.6L46 38.8L47 39.4L48 39.4L49 39.3L50 38.3L51 37.9L52 38.1L53 38.8L54 38.2L55 38.3L56 37.8L57 38.6L58 38.1L59 38.2L60 37.6L61 37.2L62 38.1L63 38L64 37.9L65 37L66 37.5L67 36.7L68 36.7L69 36.3L70 36.3L71 36.1L72 36.3L73 36L74 36.2L75 36.1L76 35.2L77 35.7L78 35.8L79 35.5L80 35.5L81 35.1L82 35.1L82 50.9L81 50.9L80 50.5L79 50.5L78 50.2L77 50.3L76 50.8L75 49.9L74 49.8L73 50L72 49.7L71 49.9L70 49.7L69 49.7L68 49.3L67 49.3L66 48.5L65 49L64 48.1L63 48L62 47.9L61 48.8L60 48.4L59 47.8L58 47.9L57 47.4L56 48.2L55 47.7L54 47.8L53 47.2L52 47.9L51 48.1L50 47.7L49 46.7L48 46.6L47 46.6L46 47.2L45 47.4L44 47L43 48.3L42 49.6L41 50.9L40 50.2L39 50.4L38 50.2L37 50.1L36 49.7L35 50.5L34 49.6L33 49.9L32 49.3L31 50.2L30 50L29 49.2L28 49.2L27 49.1L26 48.4L25 48.6L24 48.8L23 48.1L22 48.7L21 49L20 48.6L19 48.9L18 47.7L17 48L16 47.8L15 47.9L14 48.3L13 48.3L12 47.8L11 47.1L10 48L9 46.8L8 46.6L7 46.8L6 47.5L5 47.2L4 46.7L3 47L2 48.3L1 49.6L0 50.9ZM0 53.1L1 54.4L2 55.7L3 57L4 57.8L5 56.7L6 56.8L7 57.1L8 57.2L9 56.2L10 57.3L11 56L12 56.6L13 55.8L14 56.4L15 55.6L16 55.8L17 55.4L18 55.6L19 55L20 55.9L21 55.4L22 55L23 55.7L24 54.5L25 55.4L26 54.7L27 55L28 54.6L29 54.1L30 53.9L31 54.2L32 54.5L33 54L34 54.1L35 54.1L36 54.1L37 53.3L38 53.6L39 53.4L40 53.7L41 53.1L42 54.4L43 55.7L44 57L45 56.7L46 57L47 57.3L48 57.5L49 56.4L50 56.3L51 56.5L52 55.9L53 56.6L54 56.2L55 55.8L56 56.1L57 55.4L58 55.5L59 55.3L60 55.1L61 56.1L62 55.9L63 55.1L64 55L65 54.6L66 55.3L67 54.4L68 54.5L69 54.3L70 55L71 54.7L72 54.4L73 53.9L74 53.8L75 54.4L76 54.4L77 53.2L78 53.4L79 53L80 53.2L81 53.8L82 53.8L82 68.2L81 68.2L80 68.8L79 69L78 68.6L77 68.8L76 67.6L75 67.6L74 68.2L73 68.1L72 67.6L71 67.3L70 67L69 67.7L68 67.5L67 67.6L66 66.7L65 67.4L64 67L63 66.9L62 66.1L61 65.9L60 66.9L59 66.7L58 66.5L57 66.6L56 65.9L55 66.2L54 65.8L53 65.4L52 66.1L51 65.5L50 65.7L49 65.6L48 64.5L47 64.7L46 65L45 65.3L44 65L43 66.3L42 67.6L41 68.9L40 68.3L39 68.6L38 68.4L37 68.7L36 67.9L35 67.9L34 67.9L33 68L32 67.5L31 67.8L30 68.1L29 67.9L28 67.4L27 67L26 67.3L25 66.6L24 67.5L23 66.3L22 67L21 66.6L20 66.1L19 67L18 66.4L17 66.6L16 66.2L15 66.4L14 65.6L13 66.2L12 65.4L11 66L10 64.7L9 65.8L8 64.8L7 64.9L6 65.2L5 65.3L4 64.2L3 65L2 66.3L1 67.6L0 68.9Z"/><path transform="translate(610)" d="M0 35.1L1 36.4L2 37.7L3 39L4 39.1L5 39.6L6 38.4L7 39.5L8 39.2L9 38.3L10 38.5L11 39.1L12 38.4L13 38.7L14 38.7L15 37.4L16 38.3L17 37.2L18 38L19 38.2L20 37.1L21 37.3L22 37.8L23 37.1L24 37.8L25 36.7L26 36.9L27 36.7L28 36.9L29 36.9L30 35.9L31 35.7L32 36.6L33 35.6L34 36.5L35 35.3L36 35.7L37 35.6L38 36L39 35.2L40 35.2L41 35.1L42 36.4L43 37.7L44 39L45 39L46 38.8L47 39.4L48 39.5L49 38.7L50 39L51 38.2L52 38L53 37.8L54 37.6L55 38.7L56 38.2L57 38.6L58 38.2L59 37.6L60 38L61 37.7L62 37.7L63 36.9L64 37.9L65 37L66 36.4L67 37.4L68 37L69 36.4L70 37L71 37.1L72 35.9L73 36.8L74 35.7L75 35.6L76 35.4L77 35.1L78 35.4L79 34.8L80 35.9L81 35.6L82 35.1L83 36.4L84 36.4L84 49.6L83 49.6L82 50.9L81 50.4L80 50.1L79 51.2L78 50.6L77 50.9L76 50.6L75 50.4L74 50.3L73 49.2L72 50.1L71 48.9L70 49L69 49.6L68 49L67 48.6L66 49.6L65 49L64 48.1L63 49.1L62 48.3L61 48.3L60 48L59 48.4L58 47.8L57 47.4L56 47.8L55 47.3L54 48.4L53 48.2L52 48L51 47.8L50 47L49 47.3L48 46.5L47 46.6L46 47.2L45 47L44 47L43 48.3L42 49.6L41 50.9L40 50.8L39 50.8L38 50L37 50.4L36 50.3L35 50.7L34 49.5L33 50.4L32 49.4L31 50.3L30 50.1L29 49.1L28 49.1L27 49.3L26 49.1L25 49.3L24 48.2L23 48.9L22 48.2L21 48.7L20 48.9L19 47.8L18 48L17 48.8L16 47.7L15 48.6L14 47.3L13 47.3L12 47.6L11 46.9L10 47.5L9 47.7L8 46.8L7 46.5L6 47.6L5 46.4L4 46.9L3 47L2 48.3L1 49.6L0 50.9ZM0 53.1L1 54.4L2 55.7L3 57L4 57.1L5 57.3L6 57.5L7 56.5L8 56.9L9 57.1L10 57.2L11 57.1L12 56.4L13 56.4L14 55.8L15 56.4L16 56.2L17 56.2L18 56.1L19 56.3L20 55.1L21 55.9L22 55.6L23 55L24 55L25 55L26 54.5L27 54.1L28 54L29 55.2L30 54.1L31 53.8L32 54.7L33 54.2L34 53.4L35 54.3L36 53.3L37 53.1L38 53.7L39 53.1L40 52.9L41 53.1L42 54.4L43 55.7L44 57L45 57.2L46 57.1L47 56.6L48 57.4L49 56.4L50 56.9L51 56.3L52 56.2L53 56.4L54 56.8L55 56L56 56L57 56.4L58 55.4L59 55.8L60 56.1L61 55.1L62 54.8L63 55.6L64 55.3L65 54.9L66 54.8L67 54.4L68 54.2L69 54.2L70 55L71 54.8L72 54.6L73 54L74 54.1L75 54.6L76 53.3L77 54.4L78 53.4L79 53.8L80 52.7L81 53.7L82 53.1L83 54.4L84 54.4L84 67.6L83 67.6L82 68.9L81 68.3L80 69.3L79 68.2L78 68.6L77 67.6L76 68.7L75 67.4L74 67.9L73 68L72 67.4L71 67.2L70 67L69 67.8L68 67.8L67 67.6L66 67.2L65 67.1L64 66.7L63 66.4L62 67.2L61 66.9L60 65.9L59 66.2L58 66.6L57 65.6L56 66L55 66L54 65.2L53 65.6L52 65.8L51 65.7L50 65.1L49 65.6L48 64.6L47 65.4L46 64.9L45 64.8L44 65L43 66.3L42 67.6L41 68.9L40 69.1L39 68.9L38 68.3L37 68.9L36 68.7L35 67.7L34 68.6L33 67.8L32 67.3L31 68.2L30 67.9L29 66.8L28 68L27 67.9L26 67.5L25 67L24 67L23 67L22 66.4L21 66.1L20 66.9L19 65.7L18 65.9L17 65.8L16 65.8L15 65.6L14 66.2L13 65.6L12 65.6L11 64.9L10 64.8L9 64.9L8 65.1L7 65.5L6 64.5L5 64.7L4 64.9L3 65L2 66.3L1 67.6L0 68.9Z"/><path transform="translate(696)" d="M0 35.1L1 36.4L2 37.7L3 39L4 39.6L5 39.7L6 38.5L7 38.4L8 38.6L9 38.3L10 38.6L11 39.1L12 39L13 37.9L14 37.7L15 38L16 38.1L17 37.3L18 37.6L19 38.2L20 37.8L21 38L22 36.9L23 37.5L24 36.7L25 36.9L26 36.7L27 36.8L28 36.1L29 36.4L30 35.8L31 36.7L32 36.8L33 36.3L34 36.1L35 35.2L36 35.1L37 35.3L38 34.8L39 35.3L40 35L41 35.1L42 36.4L43 37.7L44 39L45 38.8L46 39.7L47 38.6L48 39.1L49 38.4L50 39.2L51 38.3L52 37.8L53 38.5L54 38.4L55 37.8L56 38.2L57 38.5L58 38.5L59 37.3L60 37.1L61 37.8L62 37.6L63 37.6L64 37.8L65 36.6L66 37.1L67 37.5L68 37L69 36.9L70 37.1L71 36L72 36.4L73 35.9L74 36.4L75 36.3L76 36.1L77 35.9L78 36L79 35L80 34.8L81 34.6L82 35.1L83 36.4L84 36.4L84 49.6L83 49.6L82 50.9L81 51.4L80 51.2L79 51L78 50L77 50.1L76 49.9L75 49.7L74 49.6L73 50.1L72 49.6L71 50L70 48.9L69 49.1L68 49L67 48.5L66 48.9L65 49.4L64 48.2L63 48.4L62 48.4L61 48.2L60 48.9L59 48.7L58 47.5L57 47.5L56 47.8L55 48.2L54 47.6L53 47.5L52 48.2L51 47.7L50 46.8L49 47.6L48 46.9L47 47.4L46 46.3L45 47.2L44 47L43 48.3L42 49.6L41 50.9L40 51L39 50.7L38 51.2L37 50.7L36 50.9L35 50.8L34 49.9L33 49.7L32 49.2L31 49.3L30 50.2L29 49.6L28 49.9L27 49.2L26 49.3L25 49.1L24 49.3L23 48.5L22 49.1L21 48L20 48.2L19 47.8L18 48.4L17 48.7L16 47.9L15 48L14 48.3L13 48.1L12 47L11 46.9L10 47.4L9 47.7L8 47.4L7 47.6L6 47.5L5 46.3L4 46.4L3 47L2 48.3L1 49.6L0 50.9ZM0 53.1L1 54.4L2 55.7L3 57L4 57.2L5 56.5L6 56.4L7 57.4L8 56.9L9 57L10 56.6L11 57.2L12 55.8L13 56.4L14 55.5L15 55.9L16 56.3L17 55.9L18 55.9L19 55.3L20 55.5L21 55.2L22 54.9L23 54.8L24 54.6L25 55L26 55.6L27 54.7L28 54.6L29 54L30 53.8L31 53.8L32 54.6L33 53.7L34 54.1L35 53.9L36 53.4L37 53.1L38 53.7L39 53.6L40 53.2L41 53.1L42 54.4L43 55.7L44 57L45 56.9L46 57L47 57.4L48 56.5L49 57.1L50 57.3L51 56.3L52 56.3L53 55.8L54 56.4L55 55.6L56 56.1L57 56.2L58 56.4L59 55.2L60 56L61 55.7L62 56L63 55.2L64 55.8L65 54.8L66 54.7L67 54.9L68 54.3L69 55.3L70 55.2L71 54L72 53.9L73 54.7L74 53.9L75 53.7L76 53.4L77 53.1L78 53.4L79 53.4L80 53.3L81 52.7L82 53.1L83 54.4L84 54.4L84 67.6L83 67.6L82 68.9L81 69.3L80 68.7L79 68.6L78 68.6L77 68.9L76 68.6L75 68.3L74 68.1L73 67.3L72 68.1L71 68L70 66.8L69 66.7L68 67.7L67 67.1L66 67.3L65 67.2L64 66.2L63 66.8L62 66L61 66.3L60 66L59 66.8L58 65.6L57 65.8L56 65.9L55 66.4L54 65.6L53 66.2L52 65.7L51 65.7L50 64.7L49 64.9L48 65.5L47 64.6L46 65L45 65.1L44 65L43 66.3L42 67.6L41 68.9L40 68.8L39 68.4L38 68.3L37 68.9L36 68.6L35 68.1L34 67.9L33 68.3L32 67.4L31 68.2L30 68.2L29 68L28 67.4L27 67.3L26 66.4L25 67L24 67.4L23 67.2L22 67.1L21 66.8L20 66.5L19 66.7L18 66.1L17 66.1L16 65.7L15 66.1L14 66.5L13 65.6L12 66.2L11 64.8L10 65.4L9 65L8 65.1L7 64.6L6 65.6L5 65.5L4 64.8L3 65L2 66.3L1 67.6L0 68.9Z"/><path transform="translate(782)" d="M0 35.1L1 36.4L2 37.7L3 39L4 38.7L5 38.7L6 38.3L7 39.4L8 38.6L9 39L10 38.7L11 38L12 38.4L13 37.9L14 38.1L15 38.1L16 37.9L17 37.9L18 37.7L19 37.2L20 38.1L21 37.2L22 37.5L23 37.8L24 37.6L25 37.4L26 36.7L27 36.7L28 37L29 37L30 36.5L31 36.6L32 36.3L33 36L34 35.6L35 36.3L36 35.3L37 35.7L38 35.3L39 34.9L40 35.6L41 35.1L42 36.4L43 37.7L44 39L45 38.6L46 38.7L47 39.4L48 38.3L49 39.2L50 38.8L51 38.4L52 38L53 38.3L54 38.4L55 38.8L56 38.7L57 37.7L58 37.4L59 37.7L60 38L61 38.1L62 37L63 37.9L64 37.8L65 37.5L66 37.6L67 37.4L68 36.5L69 36L70 36.5L71 36.5L72 35.9L73 36.6L74 35.5L75 36.2L76 35.3L77 35.3L78 36.1L79 35L80 35.4L81 35.4L82 35.4L82 50.6L81 50.6L80 50.6L79 51L78 49.9L77 50.7L76 50.7L75 49.8L74 50.5L73 49.4L72 50.1L71 49.5L70 49.5L69 50L68 49.5L67 48.6L66 48.4L65 48.5L64 48.2L63 48.1L62 49L61 47.9L60 48L59 48.3L58 48.6L57 48.3L56 47.3L55 47.2L54 47.6L53 47.7L52 48L51 47.6L50 47.2L49 46.8L48 47.7L47 46.6L46 47.3L45 47.4L44 47L43 48.3L42 49.6L41 50.9L40 50.4L39 51.1L38 50.7L37 50.3L36 50.7L35 49.7L34 50.4L33 50L32 49.7L31 49.4L30 49.5L29 49L28 49L27 49.3L26 49.3L25 48.6L24 48.4L23 48.2L22 48.5L21 48.8L20 47.9L19 48.8L18 48.3L17 48.1L16 48.1L15 47.9L14 47.9L13 48.1L12 47.6L11 48L10 47.3L9 47L8 47.4L7 46.6L6 47.7L5 47.3L4 47.3L3 47L2 48.3L1 49.6L0 50.9ZM0 53.1L1 54.4L2 55.7L3 57L4 56.9L5 57.1L6 57.1L7 57.4L8 56.6L9 57.4L10 57.1L11 56.8L12 57.1L13 56L14 56.1L15 56.5L16 56L17 56.6L18 55.8L19 56.3L20 56L21 55.6L22 56L23 55.2L24 55.1L25 54.9L26 55L27 54.5L28 55L29 55L30 54.9L31 54.6L32 54.6L33 53.6L34 54.5L35 53.3L36 54.3L37 53.7L38 53.4L39 54L40 53L41 53.1L42 54.4L43 55.7L44 57L45 57.3L46 57.1L47 57.5L48 56.6L49 56.4L50 56.8L51 56.4L52 56.4L53 56.2L54 56L55 56.6L56 55.9L57 55.4L58 55.5L59 55.3L60 55.3L61 55.3L62 55L63 55.7L64 54.7L65 55.4L66 54.4L67 55.5L68 55L69 54.7L70 54L71 54.3L72 54.1L73 54.2L74 53.9L75 53.8L76 54.3L77 53.6L78 54L79 53.5L80 52.8L81 53.9L82 53.9L82 68.1L81 68.1L80 69.2L79 68.5L78 68L77 68.4L76 67.7L75 68.2L74 68.1L73 67.8L72 67.9L71 67.7L70 68L69 67.3L68 67L67 66.5L66 67.6L65 66.6L64 67.3L63 66.3L62 67L61 66.7L60 66.7L59 66.7L58 66.5L57 66.6L56 66.1L55 65.4L54 66L53 65.8L52 65.6L51 65.6L50 65.2L49 65.6L48 65.4L47 64.5L46 64.9L45 64.7L44 65L43 66.3L42 67.6L41 68.9L40 69L39 68L38 68.6L37 68.3L36 67.7L35 68.7L34 67.5L33 68.4L32 67.4L31 67.4L30 67.1L29 67L28 67L27 67.5L26 67L25 67.1L24 66.9L23 66.8L22 66L21 66.4L20 66L19 65.7L18 66.2L17 65.4L16 66L15 65.5L14 65.9L13 66L12 64.9L11 65.2L10 64.9L9 64.6L8 65.4L7 64.6L6 64.9L5 64.9L4 65.1L3 65L2 66.3L1 67.6L0 68.9Z"/><path transform="translate(866)" d="M0 35.1L1 36.4L2 37.7L3 39L4 39.6L5 38.9L6 38.7L7 39.3L8 39.3L9 39L10 38.7L11 39L12 38L13 39L14 38.2L15 38.2L16 37.5L17 37.3L18 37.6L19 37L20 37.8L21 38.1L22 37.1L23 37.3L24 36.8L25 37.6L26 36.5L27 37L28 36.4L29 36L30 36L31 35.7L32 36.2L33 36.3L34 36L35 35.6L36 36.2L37 35.7L38 35.9L39 35.5L40 35.1L41 35.1L42 36.4L43 37.7L44 39L45 38.5L46 39.3L47 38.7L48 39.2L49 38.6L50 38.9L51 38L52 38.5L53 38.6L54 38L55 38.3L56 38.4L57 38L58 38.3L59 37.6L60 37.7L61 38.2L62 36.8L63 37.4L64 37.5L65 36.6L66 37.5L67 37.5L68 36.2L69 36.8L70 36L71 36.9L72 36.1L73 36.9L74 35.8L75 35.6L76 35.7L77 36.1L78 35.1L79 35.9L80 35.8L81 35.9L82 35.1L83 36.4L84 36.4L84 49.6L83 49.6L82 50.9L81 50.1L80 50.2L79 50.1L78 50.9L77 49.9L76 50.3L75 50.4L74 50.2L73 49.1L72 49.9L71 49.1L70 50L69 49.2L68 49.8L67 48.5L66 48.5L65 49.4L64 48.5L63 48.6L62 49.2L61 47.8L60 48.3L59 48.4L58 47.7L57 48L56 47.6L55 47.7L54 48L53 47.4L52 47.5L51 48L50 47.1L49 47.4L48 46.8L47 47.3L46 46.7L45 47.5L44 47L43 48.3L42 49.6L41 50.9L40 50.9L39 50.5L38 50.1L37 50.3L36 49.8L35 50.4L34 50L33 49.7L32 49.8L31 50.3L30 50L29 50L28 49.6L27 49L26 49.5L25 48.4L24 49.2L23 48.7L22 48.9L21 47.9L20 48.2L19 49L18 48.4L17 48.7L16 48.5L15 47.8L14 47.8L13 47L12 48L11 47L10 47.3L9 47L8 46.7L7 46.7L6 47.3L5 47.1L4 46.4L3 47L2 48.3L1 49.6L0 50.9ZM0 53.1L1 54.4L2 55.7L3 57L4 57.4L5 57L6 56.9L7 56.6L8 57.5L9 56.5L10 55.9L11 55.9L12 56.7L13 56.9L14 55.8L15 56.5L16 56.3L17 55.5L18 55.7L19 56.3L20 55.2L21 55.7L22 55.3L23 54.8L24 55.2L25 55.1L26 55.1L27 54.8L28 55.1L29 54.9L30 55.1L31 54.2L32 54.5L33 53.9L34 53.3L35 53.2L36 53.5L37 54.3L38 53.2L39 54L40 53L41 53.1L42 54.4L43 55.7L44 57L45 57.2L46 56.8L47 56.8L48 57.1L49 56.2L50 57L51 57.2L52 56.3L53 55.8L54 55.8L55 56.6L56 56.6L57 55.9L58 56.5L59 55.9L60 55.2L61 55.8L62 55.6L63 55.2L64 55.4L65 54.5L66 55.5L67 55.2L68 54.6L69 54.1L70 55.1L71 54.9L72 54.2L73 54.4L74 54.3L75 54.6L76 54.2L77 54.2L78 54L79 53.3L80 53.2L81 53L82 53.1L83 54.4L84 54.4L84 67.6L83 67.6L82 68.9L81 69L80 68.8L79 68.7L78 68L77 67.8L76 67.8L75 67.4L74 67.7L73 67.6L72 67.8L71 67.1L70 66.9L69 67.9L68 67.4L67 66.8L66 66.5L65 67.5L64 66.6L63 66.8L62 66.4L61 66.2L60 66.8L59 66.1L58 65.5L57 66.1L56 65.4L55 65.4L54 66.2L53 66.2L52 65.7L51 64.8L50 65L49 65.8L48 64.9L47 65.2L46 65.2L45 64.8L44 65L43 66.3L42 67.6L41 68.9L40 69L39 68L38 68.8L37 67.7L36 68.5L35 68.8L34 68.7L33 68.1L32 67.5L31 67.8L30 66.9L29 67.1L28 66.9L27 67.2L26 66.9L25 66.9L24 66.8L23 67.2L22 66.7L21 66.3L20 66.8L19 65.7L18 66.3L17 66.5L16 65.7L15 65.5L14 66.2L13 65.1L12 65.3L11 66.1L10 66.1L9 65.5L8 64.5L7 65.4L6 65.1L5 65L4 64.6L3 65L2 66.3L1 67.6L0 68.9Z"/><path transform="translate(952)" d="M0 35.1L1 36.4L2 37.7L3 39L4 38.7L5 38.5L6 38.6L7 38.4L8 38.6L9 38.9L10 38.4L11 38.3L12 39.1L13 38.5L14 38.3L15 38.7L16 38.4L17 38.2L18 37.3L19 38.2L20 37.3L21 37.8L22 36.8L23 37.8L24 36.7L25 36.5L26 37.5L27 36.5L28 36L29 36.7L30 36.6L31 36.4L32 36.5L33 35.6L34 35.9L35 36L36 35.5L37 35.2L38 34.9L39 35.4L40 34.9L41 35.1L42 36.4L43 37.7L44 39L45 38.7L46 39.7L47 39L48 38.6L49 39L50 38.4L51 38L52 38.4L53 38.5L54 38.9L55 38.7L56 38.7L57 38.2L58 37.6L59 38.2L60 38L61 37.2L62 38.1L63 37.6L64 37.8L65 37.2L66 37.6L67 37.4L68 36.6L69 36.4L70 36.7L71 35.9L72 37L73 36.8L74 35.9L75 35.7L76 35.6L77 35.3L78 35L79 35L80 35.9L81 34.9L82 34.9L82 51.1L81 51.1L80 50.1L79 51L78 51L77 50.7L76 50.4L75 50.3L74 50.1L73 49.2L72 49L71 50.1L70 49.3L69 49.6L68 49.4L67 48.6L66 48.4L65 48.8L64 48.2L63 48.4L62 47.9L61 48.8L60 48L59 47.8L58 48.4L57 47.8L56 47.3L55 47.3L54 47.1L53 47.5L52 47.6L51 48L50 47.6L49 47L48 47.4L47 47L46 46.3L45 47.3L44 47L43 48.3L42 49.6L41 50.9L40 51.1L39 50.6L38 51.1L37 50.8L36 50.5L35 50L34 50.1L33 50.4L32 49.5L31 49.6L30 49.4L29 49.3L28 50L27 49.5L26 48.5L25 49.5L24 49.3L23 48.2L22 49.2L21 48.2L20 48.7L19 47.8L18 48.7L17 47.8L16 47.6L15 47.3L14 47.7L13 47.5L12 46.9L11 47.7L10 47.6L9 47.1L8 47.4L7 47.6L6 47.4L5 47.5L4 47.3L3 47L2 48.3L1 49.6L0 50.9ZM0 53.1L1 54.4L2 55.7L3 57L4 56.7L5 57.1L6 57.5L7 56.6L8 56.7L9 56.3L10 57.2L11 56.2L12 56L13 56L14 55.6L15 55.4L16 56.5L17 55.2L18 56.4L19 55.9L20 55.7L21 55.7L22 56L23 55.6L24 55.4L25 54.7L26 55L27 55.4L28 55L29 54.9L30 54.5L31 54.7L32 53.8L33 53.5L34 54.4L35 54.2L36 54.4L37 53.2L38 53.6L39 52.8L40 52.7L41 53.1L42 54.4L43 55.7L44 57L45 56.6L46 57.4L47 56.4L48 57L49 56.3L50 56.2L51 56.1L52 56.4L53 55.9L54 56.1L55 55.7L56 55.6L57 56.6L58 55.9L59 56L60 55.7L61 55.2L62 55.9L63 56L64 55.6L65 55.4L66 54.8L67 55.4L68 54.4L69 54.5L70 54L71 54.5L72 54.7L73 54.5L74 54.7L75 54.5L76 53.8L77 53.8L78 53.1L79 52.8L80 53.5L81 53.4L82 53.4L82 68.6L81 68.6L80 68.5L79 69.2L78 68.9L77 68.2L76 68.2L75 67.5L74 67.3L73 67.5L72 67.3L71 67.5L70 68L69 67.5L68 67.6L67 66.6L66 67.2L65 66.6L64 66.4L63 66L62 66.1L61 66.8L60 66.3L59 66L58 66.1L57 65.4L56 66.4L55 66.3L54 65.9L53 66.1L52 65.6L51 65.9L50 65.8L49 65.7L48 65L47 65.6L46 64.6L45 65.4L44 65L43 66.3L42 67.6L41 68.9L40 69.3L39 69.2L38 68.4L37 68.8L36 67.6L35 67.8L34 67.6L33 68.5L32 68.2L31 67.3L30 67.5L29 67.1L28 67L27 66.6L26 67L25 67.3L24 66.6L23 66.4L22 66L21 66.3L20 66.3L19 66.1L18 65.6L17 66.8L16 65.5L15 66.6L14 66.4L13 66L12 66L11 65.8L10 64.8L9 65.7L8 65.3L7 65.4L6 64.5L5 64.9L4 65.3L3 65L2 66.3L1 67.6L0 68.9Z"/><path transform="translate(1698)" d="M0 35.1L1 36.4L2 37.7L3 39L4 39.3L5 38.8L6 38.5L7 39.2L8 39.4L9 39.2L10 38L11 38.9L12 38.2L13 37.7L14 37.7L15 38.1L16 38.2L17 38L18 38.3L19 37.1L20 37.4L21 37L22 37.3L23 37.9L24 37.2L25 37.4L26 37.6L27 36.9L28 36.8L29 36.8L30 36L31 35.8L32 36.7L33 36.1L34 36.4L35 35.5L36 36.3L37 35.9L38 35.8L39 35.6L40 35.8L41 35.1L42 36.4L43 37.7L44 39L45 38.6L46 38.8L47 39.4L48 39.4L49 39.3L50 38.3L51 37.9L52 38.1L53 38.8L54 38.2L55 38.3L56 37.8L57 38.6L58 38.1L59 38.2L60 37.6L61 37.2L62 38.1L63 38L64 37.9L65 37L66 37.5L67 36.7L68 36.7L69 36.3L70 36.3L71 36.1L72 36.3L73 36L74 36.2L75 36.1L76 35.2L77 35.7L78 35.8L79 35.5L80 35.5L81 35.1L82 35.1L82 50.9L81 50.9L80 50.5L79 50.5L78 50.2L77 50.3L76 50.8L75 49.9L74 49.8L73 50L72 49.7L71 49.9L70 49.7L69 49.7L68 49.3L67 49.3L66 48.5L65 49L64 48.1L63 48L62 47.9L61 48.8L60 48.4L59 47.8L58 47.9L57 47.4L56 48.2L55 47.7L54 47.8L53 47.2L52 47.9L51 48.1L50 47.7L49 46.7L48 46.6L47 46.6L46 47.2L45 47.4L44 47L43 48.3L42 49.6L41 50.9L40 50.2L39 50.4L38 50.2L37 50.1L36 49.7L35 50.5L34 49.6L33 49.9L32 49.3L31 50.2L30 50L29 49.2L28 49.2L27 49.1L26 48.4L25 48.6L24 48.8L23 48.1L22 48.7L21 49L20 48.6L19 48.9L18 47.7L17 48L16 47.8L15 47.9L14 48.3L13 48.3L12 47.8L11 47.1L10 48L9 46.8L8 46.6L7 46.8L6 47.5L5 47.2L4 46.7L3 47L2 48.3L1 49.6L0 50.9ZM0 53.1L1 54.4L2 55.7L3 57L4 57.8L5 56.7L6 56.8L7 57.1L8 57.2L9 56.2L10 57.3L11 56L12 56.6L13 55.8L14 56.4L15 55.6L16 55.8L17 55.4L18 55.6L19 55L20 55.9L21 55.4L22 55L23 55.7L24 54.5L25 55.4L26 54.7L27 55L28 54.6L29 54.1L30 53.9L31 54.2L32 54.5L33 54L34 54.1L35 54.1L36 54.1L37 53.3L38 53.6L39 53.4L40 53.7L41 53.1L42 54.4L43 55.7L44 57L45 56.7L46 57L47 57.3L48 57.5L49 56.4L50 56.3L51 56.5L52 55.9L53 56.6L54 56.2L55 55.8L56 56.1L57 55.4L58 55.5L59 55.3L60 55.1L61 56.1L62 55.9L63 55.1L64 55L65 54.6L66 55.3L67 54.4L68 54.5L69 54.3L70 55L71 54.7L72 54.4L73 53.9L74 53.8L75 54.4L76 54.4L77 53.2L78 53.4L79 53L80 53.2L81 53.8L82 53.8L82 68.2L81 68.2L80 68.8L79 69L78 68.6L77 68.8L76 67.6L75 67.6L74 68.2L73 68.1L72 67.6L71 67.3L70 67L69 67.7L68 67.5L67 67.6L66 66.7L65 67.4L64 67L63 66.9L62 66.1L61 65.9L60 66.9L59 66.7L58 66.5L57 66.6L56 65.9L55 66.2L54 65.8L53 65.4L52 66.1L51 65.5L50 65.7L49 65.6L48 64.5L47 64.7L46 65L45 65.3L44 65L43 66.3L42 67.6L41 68.9L40 68.3L39 68.6L38 68.4L37 68.7L36 67.9L35 67.9L34 67.9L33 68L32 67.5L31 67.8L30 68.1L29 67.9L28 67.4L27 67L26 67.3L25 66.6L24 67.5L23 66.3L22 67L21 66.6L20 66.1L19 67L18 66.4L17 66.6L16 66.2L15 66.4L14 65.6L13 66.2L12 65.4L11 66L10 64.7L9 65.8L8 64.8L7 64.9L6 65.2L5 65.3L4 64.2L3 65L2 66.3L1 67.6L0 68.9Z"/><path transform="translate(1782)" d="M0 35.1L1 36.4L2 37.7L3 39L4 39.1L5 39.6L6 38.4L7 39.5L8 39.2L9 38.3L10 38.5L11 39.1L12 38.4L13 38.7L14 38.7L15 37.4L16 38.3L17 37.2L18 38L19 38.2L20 37.1L21 37.3L22 37.8L23 37.1L24 37.8L25 36.7L26 36.9L27 36.7L28 36.9L29 36.9L30 35.9L31 35.7L32 36.6L33 35.6L34 36.5L35 35.3L36 35.7L37 35.6L38 36L39 35.2L40 35.2L41 35.1L42 36.4L43 37.7L44 39L45 39L46 38.8L47 39.4L48 39.5L49 38.7L50 39L51 38.2L52 38L53 37.8L54 37.6L55 38.7L56 38.2L57 38.6L58 38.2L59 37.6L60 38L61 37.7L62 37.7L63 36.9L64 37.9L65 37L66 36.4L67 37.4L68 37L69 36.4L70 37L71 37.1L72 35.9L73 36.8L74 35.7L75 35.6L76 35.4L77 35.1L78 35.4L79 34.8L80 35.9L81 35.6L82 35.1L83 36.4L84 36.4L84 49.6L83 49.6L82 50.9L81 50.4L80 50.1L79 51.2L78 50.6L77 50.9L76 50.6L75 50.4L74 50.3L73 49.2L72 50.1L71 48.9L70 49L69 49.6L68 49L67 48.6L66 49.6L65 49L64 48.1L63 49.1L62 48.3L61 48.3L60 48L59 48.4L58 47.8L57 47.4L56 47.8L55 47.3L54 48.4L53 48.2L52 48L51 47.8L50 47L49 47.3L48 46.5L47 46.6L46 47.2L45 47L44 47L43 48.3L42 49.6L41 50.9L40 50.8L39 50.8L38 50L37 50.4L36 50.3L35 50.7L34 49.5L33 50.4L32 49.4L31 50.3L30 50.1L29 49.1L28 49.1L27 49.3L26 49.1L25 49.3L24 48.2L23 48.9L22 48.2L21 48.7L20 48.9L19 47.8L18 48L17 48.8L16 47.7L15 48.6L14 47.3L13 47.3L12 47.6L11 46.9L10 47.5L9 47.7L8 46.8L7 46.5L6 47.6L5 46.4L4 46.9L3 47L2 48.3L1 49.6L0 50.9ZM0 53.1L1 54.4L2 55.7L3 57L4 57.1L5 57.3L6 57.5L7 56.5L8 56.9L9 57.1L10 57.2L11 57.1L12 56.4L13 56.4L14 55.8L15 56.4L16 56.2L17 56.2L18 56.1L19 56.3L20 55.1L21 55.9L22 55.6L23 55L24 55L25 55L26 54.5L27 54.1L28 54L29 55.2L30 54.1L31 53.8L32 54.7L33 54.2L34 53.4L35 54.3L36 53.3L37 53.1L38 53.7L39 53.1L40 52.9L41 53.1L42 54.4L43 55.7L44 57L45 57.2L46 57.1L47 56.6L48 57.4L49 56.4L50 56.9L51 56.3L52 56.2L53 56.4L54 56.8L55 56L56 56L57 56.4L58 55.4L59 55.8L60 56.1L61 55.1L62 54.8L63 55.6L64 55.3L65 54.9L66 54.8L67 54.4L68 54.2L69 54.2L70 55L71 54.8L72 54.6L73 54L74 54.1L75 54.6L76 53.3L77 54.4L78 53.4L79 53.8L80 52.7L81 53.7L82 53.1L83 54.4L84 54.4L84 67.6L83 67.6L82 68.9L81 68.3L80 69.3L79 68.2L78 68.6L77 67.6L76 68.7L75 67.4L74 67.9L73 68L72 67.4L71 67.2L70 67L69 67.8L68 67.8L67 67.6L66 67.2L65 67.1L64 66.7L63 66.4L62 67.2L61 66.9L60 65.9L59 66.2L58 66.6L57 65.6L56 66L55 66L54 65.2L53 65.6L52 65.8L51 65.7L50 65.1L49 65.6L48 64.6L47 65.4L46 64.9L45 64.8L44 65L43 66.3L42 67.6L41 68.9L40 69.1L39 68.9L38 68.3L37 68.9L36 68.7L35 67.7L34 68.6L33 67.8L32 67.3L31 68.2L30 67.9L29 66.8L28 68L27 67.9L26 67.5L25 67L24 67L23 67L22 66.4L21 66.1L20 66.9L19 65.7L18 65.9L17 65.8L16 65.8L15 65.6L14 66.2L13 65.6L12 65.6L11 64.9L10 64.8L9 64.9L8 65.1L7 65.5L6 64.5L5 64.7L4 64.9L3 65L2 66.3L1 67.6L0 68.9Z"/><path transform="translate(1868)" d="M0 35.1L1 36.4L2 37.7L3 39L4 39.6L5 39.7L6 38.5L7 38.4L8 38.6L9 38.3L10 38.6L11 39.1L12 39L13 37.9L14 37.7L15 38L16 38.1L17 37.3L18 37.6L19 38.2L20 37.8L21 38L22 36.9L23 37.5L24 36.7L25 36.9L26 36.7L27 36.8L28 36.1L29 36.4L30 35.8L31 36.7L32 36.8L33 36.3L34 36.1L35 35.2L36 35.1L37 35.3L38 34.8L39 35.3L40 35L41 35.1L42 36.4L43 37.7L44 39L45 38.8L46 39.7L47 38.6L48 39.1L49 38.4L50 39.2L51 38.3L52 37.8L53 38.5L54 38.4L55 37.8L56 38.2L57 38.5L58 38.5L59 37.3L60 37.1L61 37.8L62 37.6L63 37.6L64 37.8L65 36.6L66 37.1L67 37.5L68 37L69 36.9L70 37.1L71 36L72 36.4L73 35.9L74 36.4L75 36.3L76 36.1L77 35.9L78 36L79 35L80 34.8L81 34.6L82 35.1L83 36.4L84 36.4L84 49.6L83 49.6L82 50.9L81 51.4L80 51.2L79 51L78 50L77 50.1L76 49.9L75 49.7L74 49.6L73 50.1L72 49.6L71 50L70 48.9L69 49.1L68 49L67 48.5L66 48.9L65 49.4L64 48.2L63 48.4L62 48.4L61 48.2L60 48.9L59 48.7L58 47.5L57 47.5L56 47.8L55 48.2L54 47.6L53 47.5L52 48.2L51 47.7L50 46.8L49 47.6L48 46.9L47 47.4L46 46.3L45 47.2L44 47L43 48.3L42 49.6L41 50.9L40 51L39 50.7L38 51.2L37 50.7L36 50.9L35 50.8L34 49.9L33 49.7L32 49.2L31 49.3L30 50.2L29 49.6L28 49.9L27 49.2L26 49.3L25 49.1L24 49.3L23 48.5L22 49.1L21 48L20 48.2L19 47.8L18 48.4L17 48.7L16 47.9L15 48L14 48.3L13 48.1L12 47L11 46.9L10 47.4L9 47.7L8 47.4L7 47.6L6 47.5L5 46.3L4 46.4L3 47L2 48.3L1 49.6L0 50.9ZM0 53.1L1 54.4L2 55.7L3 57L4 57.2L5 56.5L6 56.4L7 57.4L8 56.9L9 57L10 56.6L11 57.2L12 55.8L13 56.4L14 55.5L15 55.9L16 56.3L17 55.9L18 55.9L19 55.3L20 55.5L21 55.2L22 54.9L23 54.8L24 54.6L25 55L26 55.6L27 54.7L28 54.6L29 54L30 53.8L31 53.8L32 54.6L33 53.7L34 54.1L35 53.9L36 53.4L37 53.1L38 53.7L39 53.6L40 53.2L41 53.1L42 54.4L43 55.7L44 57L45 56.9L46 57L47 57.4L48 56.5L49 57.1L50 57.3L51 56.3L52 56.3L53 55.8L54 56.4L55 55.6L56 56.1L57 56.2L58 56.4L59 55.2L60 56L61 55.7L62 56L63 55.2L64 55.8L65 54.8L66 54.7L67 54.9L68 54.3L69 55.3L70 55.2L71 54L72 53.9L73 54.7L74 53.9L75 53.7L76 53.4L77 53.1L78 53.4L79 53.4L80 53.3L81 52.7L82 53.1L83 54.4L84 54.4L84 67.6L83 67.6L82 68.9L81 69.3L80 68.7L79 68.6L78 68.6L77 68.9L76 68.6L75 68.3L74 68.1L73 67.3L72 68.1L71 68L70 66.8L69 66.7L68 67.7L67 67.1L66 67.3L65 67.2L64 66.2L63 66.8L62 66L61 66.3L60 66L59 66.8L58 65.6L57 65.8L56 65.9L55 66.4L54 65.6L53 66.2L52 65.7L51 65.7L50 64.7L49 64.9L48 65.5L47 64.6L46 65L45 65.1L44 65L43 66.3L42 67.6L41 68.9L40 68.8L39 68.4L38 68.3L37 68.9L36 68.6L35 68.1L34 67.9L33 68.3L32 67.4L31 68.2L30 68.2L29 68L28 67.4L27 67.3L26 66.4L25 67L24 67.4L23 67.2L22 67.1L21 66.8L20 66.5L19 66.7L18 66.1L17 66.1L16 65.7L15 66.1L14 66.5L13 65.6L12 66.2L11 64.8L10 65.4L9 65L8 65.1L7 64.6L6 65.6L5 65.5L4 64.8L3 65L2 66.3L1 67.6L0 68.9Z"/><path transform="translate(1954)" d="M0 35.1L1 36.4L2 37.7L3 39L4 38.7L5 38.7L6 38.3L7 39.4L8 38.6L9 39L10 38.7L11 38L12 38.4L13 37.9L14 38.1L15 38.1L16 37.9L17 37.9L18 37.7L19 37.2L20 38.1L21 37.2L22 37.5L23 37.8L24 37.6L25 37.4L26 36.7L27 36.7L28 37L29 37L30 36.5L31 36.6L32 36.3L33 36L34 35.6L35 36.3L36 35.3L37 35.7L38 35.3L39 34.9L40 35.6L41 35.1L42 36.4L43 37.7L44 39L45 38.6L46 38.7L47 39.4L48 38.3L49 39.2L50 38.8L51 38.4L52 38L53 38.3L54 38.4L55 38.8L56 38.7L57 37.7L58 37.4L59 37.7L60 38L61 38.1L62 37L63 37.9L64 37.8L65 37.5L66 37.6L67 37.4L68 36.5L69 36L70 36.5L71 36.5L72 35.9L73 36.6L74 35.5L75 36.2L76 35.3L77 35.3L78 36.1L79 35L80 35.4L81 35.4L82 35.4L82 50.6L81 50.6L80 50.6L79 51L78 49.9L77 50.7L76 50.7L75 49.8L74 50.5L73 49.4L72 50.1L71 49.5L70 49.5L69 50L68 49.5L67 48.6L66 48.4L65 48.5L64 48.2L63 48.1L62 49L61 47.9L60 48L59 48.3L58 48.6L57 48.3L56 47.3L55 47.2L54 47.6L53 47.7L52 48L51 47.6L50 47.2L49 46.8L48 47.7L47 46.6L46 47.3L45 47.4L44 47L43 48.3L42 49.6L41 50.9L40 50.4L39 51.1L38 50.7L37 50.3L36 50.7L35 49.7L34 50.4L33 50L32 49.7L31 49.4L30 49.5L29 49L28 49L27 49.3L26 49.3L25 48.6L24 48.4L23 48.2L22 48.5L21 48.8L20 47.9L19 48.8L18 48.3L17 48.1L16 48.1L15 47.9L14 47.9L13 48.1L12 47.6L11 48L10 47.3L9 47L8 47.4L7 46.6L6 47.7L5 47.3L4 47.3L3 47L2 48.3L1 49.6L0 50.9ZM0 53.1L1 54.4L2 55.7L3 57L4 56.9L5 57.1L6 57.1L7 57.4L8 56.6L9 57.4L10 57.1L11 56.8L12 57.1L13 56L14 56.1L15 56.5L16 56L17 56.6L18 55.8L19 56.3L20 56L21 55.6L22 56L23 55.2L24 55.1L25 54.9L26 55L27 54.5L28 55L29 55L30 54.9L31 54.6L32 54.6L33 53.6L34 54.5L35 53.3L36 54.3L37 53.7L38 53.4L39 54L40 53L41 53.1L42 54.4L43 55.7L44 57L45 57.3L46 57.1L47 57.5L48 56.6L49 56.4L50 56.8L51 56.4L52 56.4L53 56.2L54 56L55 56.6L56 55.9L57 55.4L58 55.5L59 55.3L60 55.3L61 55.3L62 55L63 55.7L64 54.7L65 55.4L66 54.4L67 55.5L68 55L69 54.7L70 54L71 54.3L72 54.1L73 54.2L74 53.9L75 53.8L76 54.3L77 53.6L78 54L79 53.5L80 52.8L81 53.9L82 53.9L82 68.1L81 68.1L80 69.2L79 68.5L78 68L77 68.4L76 67.7L75 68.2L74 68.1L73 67.8L72 67.9L71 67.7L70 68L69 67.3L68 67L67 66.5L66 67.6L65 66.6L64 67.3L63 66.3L62 67L61 66.7L60 66.7L59 66.7L58 66.5L57 66.6L56 66.1L55 65.4L54 66L53 65.8L52 65.6L51 65.6L50 65.2L49 65.6L48 65.4L47 64.5L46 64.9L45 64.7L44 65L43 66.3L42 67.6L41 68.9L40 69L39 68L38 68.6L37 68.3L36 67.7L35 68.7L34 67.5L33 68.4L32 67.4L31 67.4L30 67.1L29 67L28 67L27 67.5L26 67L25 67.1L24 66.9L23 66.8L22 66L21 66.4L20 66L19 65.7L18 66.2L17 65.4L16 66L15 65.5L14 65.9L13 66L12 64.9L11 65.2L10 64.9L9 64.6L8 65.4L7 64.6L6 64.9L5 64.9L4 65.1L3 65L2 66.3L1 67.6L0 68.9Z"/><path transform="translate(2038)" d="M0 35.1L1 36.4L2 37.7L3 39L4 39.6L5 38.9L6 38.7L7 39.3L8 39.3L9 39L10 38.7L11 39L12 38L13 39L14 38.2L15 38.2L16 37.5L17 37.3L18 37.6L19 37L20 37.8L21 38.1L22 37.1L23 37.3L24 36.8L25 37.6L26 36.5L27 37L28 36.4L29 36L30 36L31 35.7L32 36.2L33 36.3L34 36L35 35.6L36 36.2L37 35.7L38 35.9L39 35.5L40 35.1L41 35.1L42 36.4L43 37.7L44 39L45 38.5L46 39.3L47 38.7L48 39.2L49 38.6L50 38.9L51 38L52 38.5L53 38.6L54 38L55 38.3L56 38.4L57 38L58 38.3L59 37.6L60 37.7L61 38.2L62 36.8L63 37.4L64 37.5L65 36.6L66 37.5L67 37.5L68 36.2L69 36.8L70 36L71 36.9L72 36.1L73 36.9L74 35.8L75 35.6L76 35.7L77 36.1L78 35.1L79 35.9L80 35.8L81 35.9L82 35.1L83 36.4L84 36.4L84 49.6L83 49.6L82 50.9L81 50.1L80 50.2L79 50.1L78 50.9L77 49.9L76 50.3L75 50.4L74 50.2L73 49.1L72 49.9L71 49.1L70 50L69 49.2L68 49.8L67 48.5L66 48.5L65 49.4L64 48.5L63 48.6L62 49.2L61 47.8L60 48.3L59 48.4L58 47.7L57 48L56 47.6L55 47.7L54 48L53 47.4L52 47.5L51 48L50 47.1L49 47.4L48 46.8L47 47.3L46 46.7L45 47.5L44 47L43 48.3L42 49.6L41 50.9L40 50.9L39 50.5L38 50.1L37 50.3L36 49.8L35 50.4L34 50L33 49.7L32 49.8L31 50.3L30 50L29 50L28 49.6L27 49L26 49.5L25 48.4L24 49.2L23 48.7L22 48.9L21 47.9L20 48.2L19 49L18 48.4L17 48.7L16 48.5L15 47.8L14 47.8L13 47L12 48L11 47L10 47.3L9 47L8 46.7L7 46.7L6 47.3L5 47.1L4 46.4L3 47L2 48.3L1 49.6L0 50.9ZM0 53.1L1 54.4L2 55.7L3 57L4 57.4L5 57L6 56.9L7 56.6L8 57.5L9 56.5L10 55.9L11 55.9L12 56.7L13 56.9L14 55.8L15 56.5L16 56.3L17 55.5L18 55.7L19 56.3L20 55.2L21 55.7L22 55.3L23 54.8L24 55.2L25 55.1L26 55.1L27 54.8L28 55.1L29 54.9L30 55.1L31 54.2L32 54.5L33 53.9L34 53.3L35 53.2L36 53.5L37 54.3L38 53.2L39 54L40 53L41 53.1L42 54.4L43 55.7L44 57L45 57.2L46 56.8L47 56.8L48 57.1L49 56.2L50 57L51 57.2L52 56.3L53 55.8L54 55.8L55 56.6L56 56.6L57 55.9L58 56.5L59 55.9L60 55.2L61 55.8L62 55.6L63 55.2L64 55.4L65 54.5L66 55.5L67 55.2L68 54.6L69 54.1L70 55.1L71 54.9L72 54.2L73 54.4L74 54.3L75 54.6L76 54.2L77 54.2L78 54L79 53.3L80 53.2L81 53L82 53.1L83 54.4L84 54.4L84 67.6L83 67.6L82 68.9L81 69L80 68.8L79 68.7L78 68L77 67.8L76 67.8L75 67.4L74 67.7L73 67.6L72 67.8L71 67.1L70 66.9L69 67.9L68 67.4L67 66.8L66 66.5L65 67.5L64 66.6L63 66.8L62 66.4L61 66.2L60 66.8L59 66.1L58 65.5L57 66.1L56 65.4L55 65.4L54 66.2L53 66.2L52 65.7L51 64.8L50 65L49 65.8L48 64.9L47 65.2L46 65.2L45 64.8L44 65L43 66.3L42 67.6L41 68.9L40 69L39 68L38 68.8L37 67.7L36 68.5L35 68.8L34 68.7L33 68.1L32 67.5L31 67.8L30 66.9L29 67.1L28 66.9L27 67.2L26 66.9L25 66.9L24 66.8L23 67.2L22 66.7L21 66.3L20 66.8L19 65.7L18 66.3L17 66.5L16 65.7L15 65.5L14 66.2L13 65.1L12 65.3L11 66.1L10 66.1L9 65.5L8 64.5L7 65.4L6 65.1L5 65L4 64.6L3 65L2 66.3L1 67.6L0 68.9Z"/><path transform="translate(2124)" d="M0 35.1L1 36.4L2 37.7L3 39L4 38.7L5 38.5L6 38.6L7 38.4L8 38.6L9 38.9L10 38.4L11 38.3L12 39.1L13 38.5L14 38.3L15 38.7L16 38.4L17 38.2L18 37.3L19 38.2L20 37.3L21 37.8L22 36.8L23 37.8L24 36.7L25 36.5L26 37.5L27 36.5L28 36L29 36.7L30 36.6L31 36.4L32 36.5L33 35.6L34 35.9L35 36L36 35.5L37 35.2L38 34.9L39 35.4L40 34.9L41 35.1L42 36.4L43 37.7L44 39L45 38.7L46 39.7L47 39L48 38.6L49 39L50 38.4L51 38L52 38.4L53 38.5L54 38.9L55 38.7L56 38.7L57 38.2L58 37.6L59 38.2L60 38L61 37.2L62 38.1L63 37.6L64 37.8L65 37.2L66 37.6L67 37.4L68 36.6L69 36.4L70 36.7L71 35.9L72 37L73 36.8L74 35.9L75 35.7L76 35.6L77 35.3L78 35L79 35L80 35.9L81 34.9L82 34.9L82 51.1L81 51.1L80 50.1L79 51L78 51L77 50.7L76 50.4L75 50.3L74 50.1L73 49.2L72 49L71 50.1L70 49.3L69 49.6L68 49.4L67 48.6L66 48.4L65 48.8L64 48.2L63 48.4L62 47.9L61 48.8L60 48L59 47.8L58 48.4L57 47.8L56 47.3L55 47.3L54 47.1L53 47.5L52 47.6L51 48L50 47.6L49 47L48 47.4L47 47L46 46.3L45 47.3L44 47L43 48.3L42 49.6L41 50.9L40 51.1L39 50.6L38 51.1L37 50.8L36 50.5L35 50L34 50.1L33 50.4L32 49.5L31 49.6L30 49.4L29 49.3L28 50L27 49.5L26 48.5L25 49.5L24 49.3L23 48.2L22 49.2L21 48.2L20 48.7L19 47.8L18 48.7L17 47.8L16 47.6L15 47.3L14 47.7L13 47.5L12 46.9L11 47.7L10 47.6L9 47.1L8 47.4L7 47.6L6 47.4L5 47.5L4 47.3L3 47L2 48.3L1 49.6L0 50.9ZM0 53.1L1 54.4L2 55.7L3 57L4 56.7L5 57.1L6 57.5L7 56.6L8 56.7L9 56.3L10 57.2L11 56.2L12 56L13 56L14 55.6L15 55.4L16 56.5L17 55.2L18 56.4L19 55.9L20 55.7L21 55.7L22 56L23 55.6L24 55.4L25 54.7L26 55L27 55.4L28 55L29 54.9L30 54.5L31 54.7L32 53.8L33 53.5L34 54.4L35 54.2L36 54.4L37 53.2L38 53.6L39 52.8L40 52.7L41 53.1L42 54.4L43 55.7L44 57L45 56.6L46 57.4L47 56.4L48 57L49 56.3L50 56.2L51 56.1L52 56.4L53 55.9L54 56.1L55 55.7L56 55.6L57 56.6L58 55.9L59 56L60 55.7L61 55.2L62 55.9L63 56L64 55.6L65 55.4L66 54.8L67 55.4L68 54.4L69 54.5L70 54L71 54.5L72 54.7L73 54.5L74 54.7L75 54.5L76 53.8L77 53.8L78 53.1L79 52.8L80 53.5L81 53.4L82 53.4L82 68.6L81 68.6L80 68.5L79 69.2L78 68.9L77 68.2L76 68.2L75 67.5L74 67.3L73 67.5L72 67.3L71 67.5L70 68L69 67.5L68 67.6L67 66.6L66 67.2L65 66.6L64 66.4L63 66L62 66.1L61 66.8L60 66.3L59 66L58 66.1L57 65.4L56 66.4L55 66.3L54 65.9L53 66.1L52 65.6L51 65.9L50 65.8L49 65.7L48 65L47 65.6L46 64.6L45 65.4L44 65L43 66.3L42 67.6L41 68.9L40 69.3L39 69.2L38 68.4L37 68.8L36 67.6L35 67.8L34 67.6L33 68.5L32 68.2L31 67.3L30 67.5L29 67.1L28 67L27 66.6L26 67L25 67.3L24 66.6L23 66.4L22 66L21 66.3L20 66.3L19 66.1L18 65.6L17 66.8L16 65.5L15 66.6L14 66.4L13 66L12 66L11 65.8L10 64.8L9 65.7L8 65.3L7 65.4L6 64.5L5 64.9L4 65.3L3 65L2 66.3L1 67.6L0 68.9Z"/></g></svg></div>
<div class="r t k_fx" style="top:840px"><i class="c" style="left:864px;width:170px">fx</i><i class="c" style="left:1034px;width:172px">fx</i><i class="c" style="left:2036px;width:170px">fx</i><svg width="2270" height="70" viewBox="0 0 2270 70"><path d="M909 34v36M951 34v36M993 34v36M1079 34v36M1121 34v36M1163 34v36M2059 34v36M2101 34v36M2143 34v36M2187 34v36" stroke="#000" stroke-opacity=".22" stroke-width="2" fill="none"/><g fill="#202625"><path transform="translate(866)" d="M0 42.2L1 42.2L2 42.2L3 42.2L4 42.2L5 42.2L6 42.1L7 42.2L8 42.2L9 42.2L10 42.1L11 42.1L12 42.2L13 42.2L14 42.2L15 42.2L16 42L17 42.1L18 42.1L19 42.2L20 42L21 41.9L22 42L23 42L24 42.1L25 41.9L26 42L27 41.9L28 42L29 42L30 42L31 42L32 41.8L33 41.9L34 41.9L35 41.9L36 41.8L37 41.8L38 41.8L39 41.6L40 41.5L41 41.7L42 41.6L43 41.5L44 41.5L45 41.5L46 41.5L47 41.5L48 41.5L49 41.3L50 41.4L51 41.4L52 41.4L53 41.4L54 41.3L55 41.3L56 41.3L57 41.2L58 41.1L59 41.1L60 41.1L61 41.1L62 41.1L63 41.1L64 41L65 41L66 40.9L67 40.8L68 40.9L69 40.7L70 40.6L71 40.6L72 40.6L73 40.6L74 40.6L75 40.6L76 40.4L77 40.4L78 40.4L79 40.4L80 40.4L81 40.3L82 40.1L83 40.2L84 40.2L85 40L86 40.1L87 39.9L88 40.1L89 39.9L90 39.9L91 39.8L92 39.7L93 39.6L94 39.7L95 39.6L96 39.7L97 39.7L98 39.4L99 39.4L100 39.3L101 39.3L102 39.4L103 39.3L104 39.1L105 39.3L106 39.2L107 39.1L108 39.1L109 39.1L110 38.9L111 39L112 38.7L113 38.7L114 38.8L115 38.7L116 38.6L117 38.6L118 38.4L119 38.5L120 38.3L121 38.3L122 38.4L123 38.3L124 38.2L125 38.2L126 37.9L127 38.1L128 37.8L129 37.8L130 37.9L131 37.9L132 37.8L133 37.8L134 37.6L135 37.7L136 37.4L137 37.4L138 37.4L139 37.4L140 37.3L141 37.1L142 37L143 37.1L144 36.9L145 36.8L146 36.8L147 36.7L148 36.8L149 36.6L150 36.6L151 36.6L152 36.4L153 36.4L154 36.3L155 36.2L156 36.2L157 36.1L158 36.2L159 36L160 36.1L161 36L162 35.8L163 35.8L164 35.6L165 35.7L166 35.5L167 35.4L168 35.4L168 50.6L167 50.6L166 50.5L165 50.3L164 50.4L163 50.2L162 50.2L161 50L160 49.9L159 50L158 49.8L157 49.9L156 49.8L155 49.8L154 49.7L153 49.6L152 49.6L151 49.4L150 49.4L149 49.4L148 49.2L147 49.3L146 49.2L145 49.2L144 49.1L143 48.9L142 49L141 48.9L140 48.7L139 48.6L138 48.6L137 48.6L136 48.6L135 48.3L134 48.4L133 48.2L132 48.2L131 48.1L130 48.1L129 48.2L128 48.2L127 47.9L126 48.1L125 47.8L124 47.8L123 47.7L122 47.6L121 47.7L120 47.7L119 47.5L118 47.6L117 47.4L116 47.4L115 47.3L114 47.2L113 47.3L112 47.3L111 47L110 47.1L109 46.9L108 46.9L107 46.9L106 46.8L105 46.7L104 46.9L103 46.7L102 46.6L101 46.7L100 46.7L99 46.6L98 46.6L97 46.3L96 46.3L95 46.4L94 46.3L93 46.4L92 46.3L91 46.2L90 46.1L89 46.1L88 45.9L87 46.1L86 45.9L85 46L84 45.8L83 45.8L82 45.9L81 45.7L80 45.6L79 45.6L78 45.6L77 45.6L76 45.6L75 45.4L74 45.4L73 45.4L72 45.4L71 45.4L70 45.4L69 45.3L68 45.1L67 45.2L66 45.1L65 45L64 45L63 44.9L62 44.9L61 44.9L60 44.9L59 44.9L58 44.9L57 44.8L56 44.7L55 44.7L54 44.7L53 44.6L52 44.6L51 44.6L50 44.6L49 44.7L48 44.5L47 44.5L46 44.5L45 44.5L44 44.5L43 44.5L42 44.4L41 44.3L40 44.5L39 44.4L38 44.2L37 44.2L36 44.2L35 44.1L34 44.1L33 44.1L32 44.2L31 44L30 44L29 44L28 44L27 44.1L26 44L25 44.1L24 43.9L23 44L22 44L21 44.1L20 44L19 43.8L18 43.9L17 43.9L16 44L15 43.8L14 43.8L13 43.8L12 43.8L11 43.9L10 43.9L9 43.8L8 43.8L7 43.8L6 43.9L5 43.8L4 43.8L3 43.8L2 43.8L1 43.8L0 43.8ZM0 60.2L1 60.2L2 60.2L3 60.2L4 60.2L5 60.2L6 60.1L7 60.2L8 60.2L9 60.2L10 60.1L11 60.1L12 60.2L13 60.2L14 60.2L15 60.2L16 60L17 60.1L18 60.1L19 60.2L20 60L21 59.9L22 60L23 60L24 60.1L25 59.9L26 60L27 59.9L28 60L29 60L30 60L31 60L32 59.8L33 59.9L34 59.9L35 59.9L36 59.8L37 59.8L38 59.8L39 59.6L40 59.5L41 59.7L42 59.6L43 59.5L44 59.5L45 59.5L46 59.5L47 59.5L48 59.5L49 59.3L50 59.4L51 59.4L52 59.4L53 59.4L54 59.3L55 59.3L56 59.3L57 59.2L58 59.1L59 59.1L60 59.1L61 59.1L62 59.1L63 59.1L64 59L65 59L66 58.9L67 58.8L68 58.9L69 58.7L70 58.6L71 58.6L72 58.6L73 58.6L74 58.6L75 58.6L76 58.4L77 58.4L78 58.4L79 58.4L80 58.4L81 58.3L82 58.1L83 58.2L84 58.2L85 58L86 58.1L87 57.9L88 58.1L89 57.9L90 57.9L91 57.8L92 57.7L93 57.6L94 57.7L95 57.6L96 57.7L97 57.7L98 57.4L99 57.4L100 57.3L101 57.3L102 57.4L103 57.3L104 57.1L105 57.3L106 57.2L107 57.1L108 57.1L109 57.1L110 56.9L111 57L112 56.7L113 56.7L114 56.8L115 56.7L116 56.6L117 56.6L118 56.4L119 56.5L120 56.3L121 56.3L122 56.4L123 56.3L124 56.2L125 56.2L126 55.9L127 56.1L128 55.8L129 55.8L130 55.9L131 55.9L132 55.8L133 55.8L134 55.6L135 55.7L136 55.4L137 55.4L138 55.4L139 55.4L140 55.3L141 55.1L142 55L143 55.1L144 54.9L145 54.8L146 54.8L147 54.7L148 54.8L149 54.6L150 54.6L151 54.6L152 54.4L153 54.4L154 54.3L155 54.2L156 54.2L157 54.1L158 54.2L159 54L160 54.1L161 54L162 53.8L163 53.8L164 53.6L165 53.7L166 53.5L167 53.4L168 53.4L168 68.6L167 68.6L166 68.5L165 68.3L164 68.4L163 68.2L162 68.2L161 68L160 67.9L159 68L158 67.8L157 67.9L156 67.8L155 67.8L154 67.7L153 67.6L152 67.6L151 67.4L150 67.4L149 67.4L148 67.2L147 67.3L146 67.2L145 67.2L144 67.1L143 66.9L142 67L141 66.9L140 66.7L139 66.6L138 66.6L137 66.6L136 66.6L135 66.3L134 66.4L133 66.2L132 66.2L131 66.1L130 66.1L129 66.2L128 66.2L127 65.9L126 66.1L125 65.8L124 65.8L123 65.7L122 65.6L121 65.7L120 65.7L119 65.5L118 65.6L117 65.4L116 65.4L115 65.3L114 65.2L113 65.3L112 65.3L111 65L110 65.1L109 64.9L108 64.9L107 64.9L106 64.8L105 64.7L104 64.9L103 64.7L102 64.6L101 64.7L100 64.7L99 64.6L98 64.6L97 64.3L96 64.3L95 64.4L94 64.3L93 64.4L92 64.3L91 64.2L90 64.1L89 64.1L88 63.9L87 64.1L86 63.9L85 64L84 63.8L83 63.8L82 63.9L81 63.7L80 63.6L79 63.6L78 63.6L77 63.6L76 63.6L75 63.4L74 63.4L73 63.4L72 63.4L71 63.4L70 63.4L69 63.3L68 63.1L67 63.2L66 63.1L65 63L64 63L63 62.9L62 62.9L61 62.9L60 62.9L59 62.9L58 62.9L57 62.8L56 62.7L55 62.7L54 62.7L53 62.6L52 62.6L51 62.6L50 62.6L49 62.7L48 62.5L47 62.5L46 62.5L45 62.5L44 62.5L43 62.5L42 62.4L41 62.3L40 62.5L39 62.4L38 62.2L37 62.2L36 62.2L35 62.1L34 62.1L33 62.1L32 62.2L31 62L30 62L29 62L28 62L27 62.1L26 62L25 62.1L24 61.9L23 62L22 62L21 62.1L20 62L19 61.8L18 61.9L17 61.9L16 62L15 61.8L14 61.8L13 61.8L12 61.8L11 61.9L10 61.9L9 61.8L8 61.8L7 61.8L6 61.9L5 61.8L4 61.8L3 61.8L2 61.8L1 61.8L0 61.8Z"/><path transform="translate(1036)" d="M0 35.5L1 35.3L2 35.6L3 35.7L4 35.7L5 35.8L6 35.7L7 36L8 36L9 35.9L10 36.1L11 36.2L12 36.3L13 36.4L14 36.3L15 36.4L16 36.5L17 36.4L18 36.7L19 36.5L20 36.7L21 36.9L22 36.9L23 36.9L24 36.9L25 37L26 37.2L27 37L28 37.3L29 37.2L30 37.2L31 37.4L32 37.6L33 37.5L34 37.4L35 37.7L36 37.8L37 37.7L38 37.9L39 37.9L40 38L41 38L42 38L43 38.2L44 38L45 38.1L46 38.2L47 38.3L48 38.2L49 38.4L50 38.4L51 38.6L52 38.7L53 38.6L54 38.6L55 38.7L56 38.8L57 38.9L58 38.8L59 38.8L60 39.1L61 39.1L62 39.2L63 39.1L64 39.2L65 39.2L66 39.2L67 39.4L68 39.3L69 39.4L70 39.4L71 39.5L72 39.7L73 39.5L74 39.6L75 39.6L76 39.7L77 39.9L78 39.7L79 40L80 40L81 39.9L82 40L83 40.2L84 40.2L85 40.1L86 40.2L87 40.2L88 40.2L89 40.4L90 40.4L91 40.3L92 40.4L93 40.6L94 40.5L95 40.6L96 40.5L97 40.5L98 40.6L99 40.8L100 40.8L101 40.7L102 40.9L103 40.8L104 40.9L105 41.1L106 41L107 41.1L108 41.1L109 41L110 41.1L111 41.2L112 41.2L113 41.1L114 41.2L115 41.2L116 41.3L117 41.3L118 41.5L119 41.3L120 41.4L121 41.5L122 41.5L123 41.4L124 41.4L125 41.6L126 41.5L127 41.5L128 41.6L129 41.7L130 41.7L131 41.7L132 41.8L133 41.7L134 41.9L135 41.7L136 41.8L137 41.8L138 41.8L139 41.8L140 42L141 41.8L142 41.9L143 42L144 42L145 42L146 42L147 42L148 42.1L149 42.1L150 42.1L151 42.2L152 42.2L153 42.1L154 42.1L155 42.2L156 42.1L157 42.1L158 42.1L159 42.2L160 42.1L161 42.2L162 42.1L163 42.2L164 42.2L165 42.2L166 42.2L167 42.2L168 42.2L169 42.2L170 42.2L170 43.8L169 43.8L168 43.8L167 43.8L166 43.8L165 43.8L164 43.8L163 43.8L162 43.9L161 43.8L160 43.9L159 43.8L158 43.9L157 43.9L156 43.9L155 43.8L154 43.9L153 43.9L152 43.8L151 43.8L150 43.9L149 43.9L148 43.9L147 44L146 44L145 44L144 44L143 44L142 44.1L141 44.2L140 44L139 44.2L138 44.2L137 44.2L136 44.2L135 44.3L134 44.1L133 44.3L132 44.2L131 44.3L130 44.3L129 44.3L128 44.4L127 44.5L126 44.5L125 44.4L124 44.6L123 44.6L122 44.5L121 44.5L120 44.6L119 44.7L118 44.5L117 44.7L116 44.7L115 44.8L114 44.8L113 44.9L112 44.8L111 44.8L110 44.9L109 45L108 44.9L107 44.9L106 45L105 44.9L104 45.1L103 45.2L102 45.1L101 45.3L100 45.2L99 45.2L98 45.4L97 45.5L96 45.5L95 45.4L94 45.5L93 45.4L92 45.6L91 45.7L90 45.6L89 45.6L88 45.8L87 45.8L86 45.8L85 45.9L84 45.8L83 45.8L82 46L81 46.1L80 46L79 46L78 46.3L77 46.1L76 46.3L75 46.4L74 46.4L73 46.5L72 46.3L71 46.5L70 46.6L69 46.6L68 46.7L67 46.6L66 46.8L65 46.8L64 46.8L63 46.9L62 46.8L61 46.9L60 46.9L59 47.2L58 47.2L57 47.1L56 47.2L55 47.3L54 47.4L53 47.4L52 47.3L51 47.4L50 47.6L49 47.6L48 47.8L47 47.7L46 47.8L45 47.9L44 48L43 47.8L42 48L41 48L40 48L39 48.1L38 48.1L37 48.3L36 48.2L35 48.3L34 48.6L33 48.5L32 48.4L31 48.6L30 48.8L29 48.8L28 48.7L27 49L26 48.8L25 49L24 49.1L23 49.1L22 49.1L21 49.1L20 49.3L19 49.5L18 49.3L17 49.6L16 49.5L15 49.6L14 49.7L13 49.6L12 49.7L11 49.8L10 49.9L9 50.1L8 50L7 50L6 50.3L5 50.2L4 50.3L3 50.3L2 50.4L1 50.7L0 50.5ZM0 53.5L1 53.3L2 53.6L3 53.7L4 53.7L5 53.8L6 53.7L7 54L8 54L9 53.9L10 54.1L11 54.2L12 54.3L13 54.4L14 54.3L15 54.4L16 54.5L17 54.4L18 54.7L19 54.5L20 54.7L21 54.9L22 54.9L23 54.9L24 54.9L25 55L26 55.2L27 55L28 55.3L29 55.2L30 55.2L31 55.4L32 55.6L33 55.5L34 55.4L35 55.7L36 55.8L37 55.7L38 55.9L39 55.9L40 56L41 56L42 56L43 56.2L44 56L45 56.1L46 56.2L47 56.3L48 56.2L49 56.4L50 56.4L51 56.6L52 56.7L53 56.6L54 56.6L55 56.7L56 56.8L57 56.9L58 56.8L59 56.8L60 57.1L61 57.1L62 57.2L63 57.1L64 57.2L65 57.2L66 57.2L67 57.4L68 57.3L69 57.4L70 57.4L71 57.5L72 57.7L73 57.5L74 57.6L75 57.6L76 57.7L77 57.9L78 57.7L79 58L80 58L81 57.9L82 58L83 58.2L84 58.2L85 58.1L86 58.2L87 58.2L88 58.2L89 58.4L90 58.4L91 58.3L92 58.4L93 58.6L94 58.5L95 58.6L96 58.5L97 58.5L98 58.6L99 58.8L100 58.8L101 58.7L102 58.9L103 58.8L104 58.9L105 59.1L106 59L107 59.1L108 59.1L109 59L110 59.1L111 59.2L112 59.2L113 59.1L114 59.2L115 59.2L116 59.3L117 59.3L118 59.5L119 59.3L120 59.4L121 59.5L122 59.5L123 59.4L124 59.4L125 59.6L126 59.5L127 59.5L128 59.6L129 59.7L130 59.7L131 59.7L132 59.8L133 59.7L134 59.9L135 59.7L136 59.8L137 59.8L138 59.8L139 59.8L140 60L141 59.8L142 59.9L143 60L144 60L145 60L146 60L147 60L148 60.1L149 60.1L150 60.1L151 60.2L152 60.2L153 60.1L154 60.1L155 60.2L156 60.1L157 60.1L158 60.1L159 60.2L160 60.1L161 60.2L162 60.1L163 60.2L164 60.2L165 60.2L166 60.2L167 60.2L168 60.2L169 60.2L170 60.2L170 61.8L169 61.8L168 61.8L167 61.8L166 61.8L165 61.8L164 61.8L163 61.8L162 61.9L161 61.8L160 61.9L159 61.8L158 61.9L157 61.9L156 61.9L155 61.8L154 61.9L153 61.9L152 61.8L151 61.8L150 61.9L149 61.9L148 61.9L147 62L146 62L145 62L144 62L143 62L142 62.1L141 62.2L140 62L139 62.2L138 62.2L137 62.2L136 62.2L135 62.3L134 62.1L133 62.3L132 62.2L131 62.3L130 62.3L129 62.3L128 62.4L127 62.5L126 62.5L125 62.4L124 62.6L123 62.6L122 62.5L121 62.5L120 62.6L119 62.7L118 62.5L117 62.7L116 62.7L115 62.8L114 62.8L113 62.9L112 62.8L111 62.8L110 62.9L109 63L108 62.9L107 62.9L106 63L105 62.9L104 63.1L103 63.2L102 63.1L101 63.3L100 63.2L99 63.2L98 63.4L97 63.5L96 63.5L95 63.4L94 63.5L93 63.4L92 63.6L91 63.7L90 63.6L89 63.6L88 63.8L87 63.8L86 63.8L85 63.9L84 63.8L83 63.8L82 64L81 64.1L80 64L79 64L78 64.3L77 64.1L76 64.3L75 64.4L74 64.4L73 64.5L72 64.3L71 64.5L70 64.6L69 64.6L68 64.7L67 64.6L66 64.8L65 64.8L64 64.8L63 64.9L62 64.8L61 64.9L60 64.9L59 65.2L58 65.2L57 65.1L56 65.2L55 65.3L54 65.4L53 65.4L52 65.3L51 65.4L50 65.6L49 65.6L48 65.8L47 65.7L46 65.8L45 65.9L44 66L43 65.8L42 66L41 66L40 66L39 66.1L38 66.1L37 66.3L36 66.2L35 66.3L34 66.6L33 66.5L32 66.4L31 66.6L30 66.8L29 66.8L28 66.7L27 67L26 66.8L25 67L24 67.1L23 67.1L22 67.1L21 67.1L20 67.3L19 67.5L18 67.3L17 67.6L16 67.5L15 67.6L14 67.7L13 67.6L12 67.7L11 67.8L10 67.9L9 68.1L8 68L7 68L6 68.3L5 68.2L4 68.3L3 68.3L2 68.4L1 68.7L0 68.5Z"/><path transform="translate(2038)" d="M0 42.2L1 42.2L2 42.2L3 42.2L4 42.2L5 42.2L6 42.1L7 42.2L8 42.2L9 42.2L10 42.1L11 42.1L12 42.2L13 42.2L14 42.2L15 42.2L16 42L17 42.1L18 42.1L19 42.2L20 42L21 41.9L22 42L23 42L24 42.1L25 41.9L26 42L27 41.9L28 42L29 42L30 42L31 42L32 41.8L33 41.9L34 41.9L35 41.9L36 41.8L37 41.8L38 41.8L39 41.6L40 41.5L41 41.7L42 41.6L43 41.5L44 41.5L45 41.5L46 41.5L47 41.5L48 41.5L49 41.3L50 41.4L51 41.4L52 41.4L53 41.4L54 41.3L55 41.3L56 41.3L57 41.2L58 41.1L59 41.1L60 41.1L61 41.1L62 41.1L63 41.1L64 41L65 41L66 40.9L67 40.8L68 40.9L69 40.7L70 40.6L71 40.6L72 40.6L73 40.6L74 40.6L75 40.6L76 40.4L77 40.4L78 40.4L79 40.4L80 40.4L81 40.3L82 40.1L83 40.2L84 40.2L85 40L86 40.1L87 39.9L88 40.1L89 39.9L90 39.9L91 39.8L92 39.7L93 39.6L94 39.7L95 39.6L96 39.7L97 39.7L98 39.4L99 39.4L100 39.3L101 39.3L102 39.4L103 39.3L104 39.1L105 39.3L106 39.2L107 39.1L108 39.1L109 39.1L110 38.9L111 39L112 38.7L113 38.7L114 38.8L115 38.7L116 38.6L117 38.6L118 38.4L119 38.5L120 38.3L121 38.3L122 38.4L123 38.3L124 38.2L125 38.2L126 37.9L127 38.1L128 37.8L129 37.8L130 37.9L131 37.9L132 37.8L133 37.8L134 37.6L135 37.7L136 37.4L137 37.4L138 37.4L139 37.4L140 37.3L141 37.1L142 37L143 37.1L144 36.9L145 36.8L146 36.8L147 36.7L148 36.8L149 36.6L150 36.6L151 36.6L152 36.4L153 36.4L154 36.3L155 36.2L156 36.2L157 36.1L158 36.2L159 36L160 36.1L161 36L162 35.8L163 35.8L164 35.6L165 35.7L166 35.5L167 35.4L168 35.4L168 50.6L167 50.6L166 50.5L165 50.3L164 50.4L163 50.2L162 50.2L161 50L160 49.9L159 50L158 49.8L157 49.9L156 49.8L155 49.8L154 49.7L153 49.6L152 49.6L151 49.4L150 49.4L149 49.4L148 49.2L147 49.3L146 49.2L145 49.2L144 49.1L143 48.9L142 49L141 48.9L140 48.7L139 48.6L138 48.6L137 48.6L136 48.6L135 48.3L134 48.4L133 48.2L132 48.2L131 48.1L130 48.1L129 48.2L128 48.2L127 47.9L126 48.1L125 47.8L124 47.8L123 47.7L122 47.6L121 47.7L120 47.7L119 47.5L118 47.6L117 47.4L116 47.4L115 47.3L114 47.2L113 47.3L112 47.3L111 47L110 47.1L109 46.9L108 46.9L107 46.9L106 46.8L105 46.7L104 46.9L103 46.7L102 46.6L101 46.7L100 46.7L99 46.6L98 46.6L97 46.3L96 46.3L95 46.4L94 46.3L93 46.4L92 46.3L91 46.2L90 46.1L89 46.1L88 45.9L87 46.1L86 45.9L85 46L84 45.8L83 45.8L82 45.9L81 45.7L80 45.6L79 45.6L78 45.6L77 45.6L76 45.6L75 45.4L74 45.4L73 45.4L72 45.4L71 45.4L70 45.4L69 45.3L68 45.1L67 45.2L66 45.1L65 45L64 45L63 44.9L62 44.9L61 44.9L60 44.9L59 44.9L58 44.9L57 44.8L56 44.7L55 44.7L54 44.7L53 44.6L52 44.6L51 44.6L50 44.6L49 44.7L48 44.5L47 44.5L46 44.5L45 44.5L44 44.5L43 44.5L42 44.4L41 44.3L40 44.5L39 44.4L38 44.2L37 44.2L36 44.2L35 44.1L34 44.1L33 44.1L32 44.2L31 44L30 44L29 44L28 44L27 44.1L26 44L25 44.1L24 43.9L23 44L22 44L21 44.1L20 44L19 43.8L18 43.9L17 43.9L16 44L15 43.8L14 43.8L13 43.8L12 43.8L11 43.9L10 43.9L9 43.8L8 43.8L7 43.8L6 43.9L5 43.8L4 43.8L3 43.8L2 43.8L1 43.8L0 43.8ZM0 60.2L1 60.2L2 60.2L3 60.2L4 60.2L5 60.2L6 60.1L7 60.2L8 60.2L9 60.2L10 60.1L11 60.1L12 60.2L13 60.2L14 60.2L15 60.2L16 60L17 60.1L18 60.1L19 60.2L20 60L21 59.9L22 60L23 60L24 60.1L25 59.9L26 60L27 59.9L28 60L29 60L30 60L31 60L32 59.8L33 59.9L34 59.9L35 59.9L36 59.8L37 59.8L38 59.8L39 59.6L40 59.5L41 59.7L42 59.6L43 59.5L44 59.5L45 59.5L46 59.5L47 59.5L48 59.5L49 59.3L50 59.4L51 59.4L52 59.4L53 59.4L54 59.3L55 59.3L56 59.3L57 59.2L58 59.1L59 59.1L60 59.1L61 59.1L62 59.1L63 59.1L64 59L65 59L66 58.9L67 58.8L68 58.9L69 58.7L70 58.6L71 58.6L72 58.6L73 58.6L74 58.6L75 58.6L76 58.4L77 58.4L78 58.4L79 58.4L80 58.4L81 58.3L82 58.1L83 58.2L84 58.2L85 58L86 58.1L87 57.9L88 58.1L89 57.9L90 57.9L91 57.8L92 57.7L93 57.6L94 57.7L95 57.6L96 57.7L97 57.7L98 57.4L99 57.4L100 57.3L101 57.3L102 57.4L103 57.3L104 57.1L105 57.3L106 57.2L107 57.1L108 57.1L109 57.1L110 56.9L111 57L112 56.7L113 56.7L114 56.8L115 56.7L116 56.6L117 56.6L118 56.4L119 56.5L120 56.3L121 56.3L122 56.4L123 56.3L124 56.2L125 56.2L126 55.9L127 56.1L128 55.8L129 55.8L130 55.9L131 55.9L132 55.8L133 55.8L134 55.6L135 55.7L136 55.4L137 55.4L138 55.4L139 55.4L140 55.3L141 55.1L142 55L143 55.1L144 54.9L145 54.8L146 54.8L147 54.7L148 54.8L149 54.6L150 54.6L151 54.6L152 54.4L153 54.4L154 54.3L155 54.2L156 54.2L157 54.1L158 54.2L159 54L160 54.1L161 54L162 53.8L163 53.8L164 53.6L165 53.7L166 53.5L167 53.4L168 53.4L168 68.6L167 68.6L166 68.5L165 68.3L164 68.4L163 68.2L162 68.2L161 68L160 67.9L159 68L158 67.8L157 67.9L156 67.8L155 67.8L154 67.7L153 67.6L152 67.6L151 67.4L150 67.4L149 67.4L148 67.2L147 67.3L146 67.2L145 67.2L144 67.1L143 66.9L142 67L141 66.9L140 66.7L139 66.6L138 66.6L137 66.6L136 66.6L135 66.3L134 66.4L133 66.2L132 66.2L131 66.1L130 66.1L129 66.2L128 66.2L127 65.9L126 66.1L125 65.8L124 65.8L123 65.7L122 65.6L121 65.7L120 65.7L119 65.5L118 65.6L117 65.4L116 65.4L115 65.3L114 65.2L113 65.3L112 65.3L111 65L110 65.1L109 64.9L108 64.9L107 64.9L106 64.8L105 64.7L104 64.9L103 64.7L102 64.6L101 64.7L100 64.7L99 64.6L98 64.6L97 64.3L96 64.3L95 64.4L94 64.3L93 64.4L92 64.3L91 64.2L90 64.1L89 64.1L88 63.9L87 64.1L86 63.9L85 64L84 63.8L83 63.8L82 63.9L81 63.7L80 63.6L79 63.6L78 63.6L77 63.6L76 63.6L75 63.4L74 63.4L73 63.4L72 63.4L71 63.4L70 63.4L69 63.3L68 63.1L67 63.2L66 63.1L65 63L64 63L63 62.9L62 62.9L61 62.9L60 62.9L59 62.9L58 62.9L57 62.8L56 62.7L55 62.7L54 62.7L53 62.6L52 62.6L51 62.6L50 62.6L49 62.7L48 62.5L47 62.5L46 62.5L45 62.5L44 62.5L43 62.5L42 62.4L41 62.3L40 62.5L39 62.4L38 62.2L37 62.2L36 62.2L35 62.1L34 62.1L33 62.1L32 62.2L31 62L30 62L29 62L28 62L27 62.1L26 62L25 62.1L24 61.9L23 62L22 62L21 62.1L20 62L19 61.8L18 61.9L17 61.9L16 62L15 61.8L14 61.8L13 61.8L12 61.8L11 61.9L10 61.9L9 61.8L8 61.8L7 61.8L6 61.9L5 61.8L4 61.8L3 61.8L2 61.8L1 61.8L0 61.8Z"/></g></svg></div>
<div class="r t k_crash" style="top:914px"><i class="c" style="left:1034px;width:44px">crash</i><i class="c" style="left:1524px;width:44px">crash</i><svg width="2270" height="70" viewBox="0 0 2270 70"><path d="M1547 34v36" stroke="#000" stroke-opacity=".22" stroke-width="2" fill="none"/><g fill="#202426"><path transform="translate(1036)" d="M0 34.4L1 35.2L2 36.5L3 37.5L4 38.4L5 39.1L6 39.6L7 40.1L8 40.5L9 40.8L10 41.1L11 41.3L12 41.4L13 41.6L14 41.7L15 41.8L16 41.9L17 41.9L18 42L19 42L20 42.1L21 42.1L22 42.1L23 42.1L24 42.2L25 42.2L26 42.2L27 42.2L28 42.2L29 42.2L30 42.2L31 42.2L32 42.2L33 42.2L34 42.2L35 42.2L36 42.2L37 42.2L38 42.2L39 42.2L40 42.2L41 42.2L42 42.2L42 43.8L41 43.8L40 43.8L39 43.8L38 43.8L37 43.8L36 43.8L35 43.8L34 43.8L33 43.8L32 43.8L31 43.8L30 43.8L29 43.8L28 43.8L27 43.8L26 43.8L25 43.8L24 43.8L23 43.9L22 43.9L21 43.9L20 43.9L19 44L18 44L17 44.1L16 44.1L15 44.2L14 44.3L13 44.4L12 44.6L11 44.7L10 44.9L9 45.2L8 45.5L7 45.9L6 46.4L5 46.9L4 47.6L3 48.5L2 49.5L1 50.8L0 51.6ZM0 52.4L1 53.2L2 54.5L3 55.5L4 56.4L5 57.1L6 57.6L7 58.1L8 58.5L9 58.8L10 59.1L11 59.3L12 59.4L13 59.6L14 59.7L15 59.8L16 59.9L17 59.9L18 60L19 60L20 60.1L21 60.1L22 60.1L23 60.1L24 60.2L25 60.2L26 60.2L27 60.2L28 60.2L29 60.2L30 60.2L31 60.2L32 60.2L33 60.2L34 60.2L35 60.2L36 60.2L37 60.2L38 60.2L39 60.2L40 60.2L41 60.2L42 60.2L42 61.8L41 61.8L40 61.8L39 61.8L38 61.8L37 61.8L36 61.8L35 61.8L34 61.8L33 61.8L32 61.8L31 61.8L30 61.8L29 61.8L28 61.8L27 61.8L26 61.8L25 61.8L24 61.8L23 61.9L22 61.9L21 61.9L20 61.9L19 62L18 62L17 62.1L16 62.1L15 62.2L14 62.3L13 62.4L12 62.6L11 62.7L10 62.9L9 63.2L8 63.5L7 63.9L6 64.4L5 64.9L4 65.6L3 66.5L2 67.5L1 68.8L0 69.6Z"/><path transform="translate(1526)" d="M0 34.4L1 35.2L2 36.5L3 37.5L4 38.4L5 39.1L6 39.6L7 40.1L8 40.5L9 40.8L10 41.1L11 41.3L12 41.4L13 41.6L14 41.7L15 41.8L16 41.9L17 41.9L18 42L19 42L20 42.1L21 42.1L22 42.1L23 42.1L24 42.2L25 42.2L26 42.2L27 42.2L28 42.2L29 42.2L30 42.2L31 42.2L32 42.2L33 42.2L34 42.2L35 42.2L36 42.2L37 42.2L38 42.2L39 42.2L40 42.2L41 42.2L42 42.2L42 43.8L41 43.8L40 43.8L39 43.8L38 43.8L37 43.8L36 43.8L35 43.8L34 43.8L33 43.8L32 43.8L31 43.8L30 43.8L29 43.8L28 43.8L27 43.8L26 43.8L25 43.8L24 43.8L23 43.9L22 43.9L21 43.9L20 43.9L19 44L18 44L17 44.1L16 44.1L15 44.2L14 44.3L13 44.4L12 44.6L11 44.7L10 44.9L9 45.2L8 45.5L7 45.9L6 46.4L5 46.9L4 47.6L3 48.5L2 49.5L1 50.8L0 51.6ZM0 52.4L1 53.2L2 54.5L3 55.5L4 56.4L5 57.1L6 57.6L7 58.1L8 58.5L9 58.8L10 59.1L11 59.3L12 59.4L13 59.6L14 59.7L15 59.8L16 59.9L17 59.9L18 60L19 60L20 60.1L21 60.1L22 60.1L23 60.1L24 60.2L25 60.2L26 60.2L27 60.2L28 60.2L29 60.2L30 60.2L31 60.2L32 60.2L33 60.2L34 60.2L35 60.2L36 60.2L37 60.2L38 60.2L39 60.2L40 60.2L41 60.2L42 60.2L42 61.8L41 61.8L40 61.8L39 61.8L38 61.8L37 61.8L36 61.8L35 61.8L34 61.8L33 61.8L32 61.8L31 61.8L30 61.8L29 61.8L28 61.8L27 61.8L26 61.8L25 61.8L24 61.8L23 61.9L22 61.9L21 61.9L20 61.9L19 62L18 62L17 62.1L16 62.1L15 62.2L14 62.3L13 62.4L12 62.6L11 62.7L10 62.9L9 63.2L8 63.5L7 63.9L6 64.4L5 64.9L4 65.6L3 66.5L2 67.5L1 68.8L0 69.6Z"/></g></svg></div>
<div class="r t k_fx_2" style="top:988px"><i class="c" style="left:1034px;width:172px">fx_2</i><svg width="2270" height="70" viewBox="0 0 2270 70"><path d="M1079 34v36M1121 34v36M1163 34v36" stroke="#000" stroke-opacity=".22" stroke-width="2" fill="none"/><g fill="#202326"><path transform="translate(1036)" d="M0 35.4L1 35.5L2 35.5L3 35.5L4 35.6L5 35.6L6 35.6L7 35.7L8 35.7L9 35.7L10 35.8L11 35.8L12 35.8L13 35.9L14 35.9L15 35.9L16 36L17 36L18 36.1L19 36.1L20 36.1L21 36.2L22 36.2L23 36.2L24 36.3L25 36.3L26 36.3L27 36.4L28 36.4L29 36.4L30 36.5L31 36.5L32 36.5L33 36.6L34 36.6L35 36.7L36 36.7L37 36.7L38 36.8L39 36.8L40 36.8L41 36.9L42 36.9L43 36.9L44 37L45 37L46 37L47 37.1L48 37.1L49 37.2L50 37.2L51 37.2L52 37.3L53 37.3L54 37.3L55 37.4L56 37.4L57 37.4L58 37.5L59 37.5L60 37.6L61 37.6L62 37.6L63 37.7L64 37.7L65 37.7L66 37.8L67 37.8L68 37.9L69 37.9L70 37.9L71 38L72 38L73 38.1L74 38.1L75 38.1L76 38.2L77 38.2L78 38.2L79 38.3L80 38.3L81 38.4L82 38.4L83 38.4L84 38.5L85 38.5L86 38.5L87 38.4L88 38.3L89 38.1L90 37.9L91 37.8L92 37.8L93 37.8L94 37.9L95 38.1L96 38.3L97 38.6L98 38.8L99 39L100 39.1L101 39.2L102 39.2L103 39.2L104 39.3L105 39.3L106 39.4L107 39.4L108 39.5L109 39.5L110 39.5L111 39.6L112 39.6L113 39.7L114 39.7L115 39.8L116 39.8L117 39.8L118 39.8L119 39.7L120 39.6L121 39.5L122 39.4L123 39.4L124 39.4L125 39.5L126 39.7L127 39.9L128 40.1L129 40.2L130 40.4L131 40.5L132 40.5L133 40.6L134 40.6L135 40.7L136 40.7L137 40.8L138 40.8L139 40.9L140 40.9L141 41L142 41L143 41.1L144 41.1L145 41.2L146 41.2L147 41.3L148 41.3L149 41.3L150 41.3L151 41.3L152 41.2L153 41.6L154 41.7L155 41.8L156 41.8L157 41.9L158 42L159 42L160 42.1L161 42.2L162 42.2L163 42.2L164 42.2L165 42.2L166 42.2L167 42.2L168 42.2L169 42.2L170 42.2L170 43.8L169 43.8L168 43.8L167 43.8L166 43.8L165 43.8L164 43.8L163 43.8L162 43.8L161 43.8L160 43.9L159 44L158 44L157 44.1L156 44.2L155 44.2L154 44.3L153 44.4L152 44.8L151 44.7L150 44.7L149 44.7L148 44.7L147 44.7L146 44.8L145 44.8L144 44.9L143 44.9L142 45L141 45L140 45.1L139 45.1L138 45.2L137 45.2L136 45.3L135 45.3L134 45.4L133 45.4L132 45.5L131 45.5L130 45.6L129 45.8L128 45.9L127 46.1L126 46.3L125 46.5L124 46.6L123 46.6L122 46.6L121 46.5L120 46.4L119 46.3L118 46.2L117 46.2L116 46.2L115 46.2L114 46.3L113 46.3L112 46.4L111 46.4L110 46.5L109 46.5L108 46.5L107 46.6L106 46.6L105 46.7L104 46.7L103 46.8L102 46.8L101 46.8L100 46.9L99 47L98 47.2L97 47.4L96 47.7L95 47.9L94 48.1L93 48.2L92 48.2L91 48.2L90 48.1L89 47.9L88 47.7L87 47.6L86 47.5L85 47.5L84 47.5L83 47.6L82 47.6L81 47.6L80 47.7L79 47.7L78 47.8L77 47.8L76 47.8L75 47.9L74 47.9L73 47.9L72 48L71 48L70 48.1L69 48.1L68 48.1L67 48.2L66 48.2L65 48.3L64 48.3L63 48.3L62 48.4L61 48.4L60 48.4L59 48.5L58 48.5L57 48.6L56 48.6L55 48.6L54 48.7L53 48.7L52 48.7L51 48.8L50 48.8L49 48.8L48 48.9L47 48.9L46 49L45 49L44 49L43 49.1L42 49.1L41 49.1L40 49.2L39 49.2L38 49.2L37 49.3L36 49.3L35 49.3L34 49.4L33 49.4L32 49.5L31 49.5L30 49.5L29 49.6L28 49.6L27 49.6L26 49.7L25 49.7L24 49.7L23 49.8L22 49.8L21 49.8L20 49.9L19 49.9L18 49.9L17 50L16 50L15 50.1L14 50.1L13 50.1L12 50.2L11 50.2L10 50.2L9 50.3L8 50.3L7 50.3L6 50.4L5 50.4L4 50.4L3 50.5L2 50.5L1 50.5L0 50.6ZM0 53.4L1 53.5L2 53.5L3 53.5L4 53.6L5 53.6L6 53.6L7 53.7L8 53.7L9 53.7L10 53.8L11 53.8L12 53.8L13 53.9L14 53.9L15 53.9L16 54L17 54L18 54.1L19 54.1L20 54.1L21 54.2L22 54.2L23 54.2L24 54.3L25 54.3L26 54.3L27 54.4L28 54.4L29 54.4L30 54.5L31 54.5L32 54.5L33 54.6L34 54.6L35 54.7L36 54.7L37 54.7L38 54.8L39 54.8L40 54.8L41 54.9L42 54.9L43 54.9L44 55L45 55L46 55L47 55.1L48 55.1L49 55.2L50 55.2L51 55.2L52 55.3L53 55.3L54 55.3L55 55.4L56 55.4L57 55.4L58 55.5L59 55.5L60 55.6L61 55.6L62 55.6L63 55.7L64 55.7L65 55.7L66 55.8L67 55.8L68 55.9L69 55.9L70 55.9L71 56L72 56L73 56.1L74 56.1L75 56.1L76 56.2L77 56.2L78 56.2L79 56.3L80 56.3L81 56.4L82 56.4L83 56.4L84 56.5L85 56.5L86 56.5L87 56.4L88 56.3L89 56.1L90 55.9L91 55.8L92 55.8L93 55.8L94 55.9L95 56.1L96 56.3L97 56.6L98 56.8L99 57L100 57.1L101 57.2L102 57.2L103 57.2L104 57.3L105 57.3L106 57.4L107 57.4L108 57.5L109 57.5L110 57.5L111 57.6L112 57.6L113 57.7L114 57.7L115 57.8L116 57.8L117 57.8L118 57.8L119 57.7L120 57.6L121 57.5L122 57.4L123 57.4L124 57.4L125 57.5L126 57.7L127 57.9L128 58.1L129 58.2L130 58.4L131 58.5L132 58.5L133 58.6L134 58.6L135 58.7L136 58.7L137 58.8L138 58.8L139 58.9L140 58.9L141 59L142 59L143 59.1L144 59.1L145 59.2L146 59.2L147 59.3L148 59.3L149 59.3L150 59.3L151 59.3L152 59.2L153 59.6L154 59.7L155 59.8L156 59.8L157 59.9L158 60L159 60L160 60.1L161 60.2L162 60.2L163 60.2L164 60.2L165 60.2L166 60.2L167 60.2L168 60.2L169 60.2L170 60.2L170 61.8L169 61.8L168 61.8L167 61.8L166 61.8L165 61.8L164 61.8L163 61.8L162 61.8L161 61.8L160 61.9L159 62L158 62L157 62.1L156 62.2L155 62.2L154 62.3L153 62.4L152 62.8L151 62.7L150 62.7L149 62.7L148 62.7L147 62.7L146 62.8L145 62.8L144 62.9L143 62.9L142 63L141 63L140 63.1L139 63.1L138 63.2L137 63.2L136 63.3L135 63.3L134 63.4L133 63.4L132 63.5L131 63.5L130 63.6L129 63.8L128 63.9L127 64.1L126 64.3L125 64.5L124 64.6L123 64.6L122 64.6L121 64.5L120 64.4L119 64.3L118 64.2L117 64.2L116 64.2L115 64.2L114 64.3L113 64.3L112 64.4L111 64.4L110 64.5L109 64.5L108 64.5L107 64.6L106 64.6L105 64.7L104 64.7L103 64.8L102 64.8L101 64.8L100 64.9L99 65L98 65.2L97 65.4L96 65.7L95 65.9L94 66.1L93 66.2L92 66.2L91 66.2L90 66.1L89 65.9L88 65.7L87 65.6L86 65.5L85 65.5L84 65.5L83 65.6L82 65.6L81 65.6L80 65.7L79 65.7L78 65.8L77 65.8L76 65.8L75 65.9L74 65.9L73 65.9L72 66L71 66L70 66.1L69 66.1L68 66.1L67 66.2L66 66.2L65 66.3L64 66.3L63 66.3L62 66.4L61 66.4L60 66.4L59 66.5L58 66.5L57 66.6L56 66.6L55 66.6L54 66.7L53 66.7L52 66.7L51 66.8L50 66.8L49 66.8L48 66.9L47 66.9L46 67L45 67L44 67L43 67.1L42 67.1L41 67.1L40 67.2L39 67.2L38 67.2L37 67.3L36 67.3L35 67.3L34 67.4L33 67.4L32 67.5L31 67.5L30 67.5L29 67.6L28 67.6L27 67.6L26 67.7L25 67.7L24 67.7L23 67.8L22 67.8L21 67.8L20 67.9L19 67.9L18 67.9L17 68L16 68L15 68.1L14 68.1L13 68.1L12 68.2L11 68.2L10 68.2L9 68.3L8 68.3L7 68.3L6 68.4L5 68.4L4 68.4L3 68.5L2 68.5L1 68.5L0 68.6Z"/></g></svg></div>
<div class="r t k_riser" style="top:1062px"><i class="c" style="left:1290px;width:172px">riser</i><svg width="2270" height="70" viewBox="0 0 2270 70"><path d="M1335 34v36M1377 34v36M1419 34v36" stroke="#000" stroke-opacity=".22" stroke-width="2" fill="none"/><g fill="#1d2225"><path fill="#000" fill-opacity=".17" d="M1292 34H1462Q1387 50 1292 70H1292Z"/><path transform="translate(1292)" d="M0 42.2L1 42.2L2 42.2L3 42.2L4 42.2L5 42.2L6 42.2L7 42.2L8 42.2L9 42.2L10 42.2L11 42.2L12 42.2L13 42.2L14 42.2L15 42.2L16 42.2L17 42.2L18 42.2L19 42.2L20 42.2L21 42.2L22 42.2L23 42.2L24 42.2L25 42.2L26 42.2L27 42.2L28 42.2L29 42.2L30 42.2L31 42.2L32 42.2L33 42.2L34 42.2L35 42.2L36 42.2L37 42.2L38 42.2L39 42.2L40 42.2L41 42.2L42 42.2L43 42.2L44 42.2L45 42.2L46 42.2L47 42.2L48 42.2L49 42.2L50 42.2L51 42.2L52 42.2L53 42.2L54 42.2L55 42.2L56 42.2L57 42.2L58 42.2L59 42.2L60 42.2L61 42.2L62 42.2L63 42.2L64 42.2L65 42.2L66 42.2L67 42.2L68 42.2L69 42.2L70 42.2L71 42.2L72 42.1L73 42.1L74 42.2L75 42.2L76 42L77 41.9L78 41.9L79 42L80 42L81 41.8L82 41.8L83 41.8L84 41.7L85 41.6L86 41.7L87 41.5L88 41.5L89 41.5L90 41.4L91 41.4L92 41.2L93 41.3L94 41.3L95 41.1L96 41L97 41L98 41L99 40.9L100 40.8L101 40.8L102 40.8L103 40.6L104 40.7L105 40.6L106 40.5L107 40.5L108 40.4L109 40.3L110 40.2L111 40.2L112 40.1L113 40L114 40.1L115 39.9L116 39.7L117 39.7L118 39.9L119 39.7L120 39.5L121 39.6L122 39.4L123 39.4L124 39.4L125 39.3L126 39L127 39.1L128 39.1L129 38.9L130 38.8L131 38.8L132 38.6L133 38.8L134 38.7L135 38.4L136 38.3L137 38.4L138 38.4L139 38.4L140 38.1L141 38.2L142 38L143 38L144 37.8L145 37.7L146 37.7L147 37.6L148 37.8L149 37.6L150 37.5L151 37.5L152 37.5L153 37L154 37L155 37.2L156 36.8L157 37L158 36.7L159 36.9L160 36.6L161 36.5L162 36.5L163 36.6L164 36.2L165 36.5L166 36.2L167 36L168 36L169 36.1L170 36.1L170 49.9L169 49.9L168 50L167 50L166 49.8L165 49.5L164 49.8L163 49.4L162 49.5L161 49.5L160 49.4L159 49.1L158 49.3L157 49L156 49.2L155 48.8L154 49L153 49L152 48.5L151 48.5L150 48.5L149 48.4L148 48.2L147 48.4L146 48.3L145 48.3L144 48.2L143 48L142 48L141 47.8L140 47.9L139 47.6L138 47.6L137 47.6L136 47.7L135 47.6L134 47.3L133 47.2L132 47.4L131 47.2L130 47.2L129 47.1L128 46.9L127 46.9L126 47L125 46.7L124 46.6L123 46.6L122 46.6L121 46.4L120 46.5L119 46.3L118 46.1L117 46.3L116 46.3L115 46.1L114 45.9L113 46L112 45.9L111 45.8L110 45.8L109 45.7L108 45.6L107 45.5L106 45.5L105 45.4L104 45.3L103 45.4L102 45.2L101 45.2L100 45.2L99 45.1L98 45L97 45L96 45L95 44.9L94 44.7L93 44.7L92 44.8L91 44.6L90 44.6L89 44.5L88 44.5L87 44.5L86 44.3L85 44.4L84 44.3L83 44.2L82 44.2L81 44.2L80 44L79 44L78 44.1L77 44.1L76 44L75 43.8L74 43.8L73 43.9L72 43.9L71 43.8L70 43.8L69 43.8L68 43.8L67 43.8L66 43.8L65 43.8L64 43.8L63 43.8L62 43.8L61 43.8L60 43.8L59 43.8L58 43.8L57 43.8L56 43.8L55 43.8L54 43.8L53 43.8L52 43.8L51 43.8L50 43.8L49 43.8L48 43.8L47 43.8L46 43.8L45 43.8L44 43.8L43 43.8L42 43.8L41 43.8L40 43.8L39 43.8L38 43.8L37 43.8L36 43.8L35 43.8L34 43.8L33 43.8L32 43.8L31 43.8L30 43.8L29 43.8L28 43.8L27 43.8L26 43.8L25 43.8L24 43.8L23 43.8L22 43.8L21 43.8L20 43.8L19 43.8L18 43.8L17 43.8L16 43.8L15 43.8L14 43.8L13 43.8L12 43.8L11 43.8L10 43.8L9 43.8L8 43.8L7 43.8L6 43.8L5 43.8L4 43.8L3 43.8L2 43.8L1 43.8L0 43.8ZM0 60.2L1 60.2L2 60.2L3 60.2L4 60.2L5 60.2L6 60.2L7 60.2L8 60.2L9 60.2L10 60.2L11 60.2L12 60.2L13 60.2L14 60.2L15 60.2L16 60.2L17 60.2L18 60.2L19 60.2L20 60.2L21 60.2L22 60.2L23 60.2L24 60.2L25 60.2L26 60.2L27 60.2L28 60.2L29 60.2L30 60.2L31 60.2L32 60.2L33 60.2L34 60.2L35 60.2L36 60.2L37 60.2L38 60.2L39 60.2L40 60.2L41 60.2L42 60.2L43 60.2L44 60.2L45 60.2L46 60.2L47 60.2L48 60.2L49 60.2L50 60.2L51 60.2L52 60.2L53 60.2L54 60.2L55 60.2L56 60.2L57 60.2L58 60.2L59 60.2L60 60.2L61 60.2L62 60.2L63 60.2L64 60.2L65 60.2L66 60.2L67 60.2L68 60.2L69 60.2L70 60.2L71 60.2L72 60.1L73 60.1L74 60.2L75 60.2L76 60L77 59.9L78 59.9L79 60L80 60L81 59.8L82 59.8L83 59.8L84 59.7L85 59.6L86 59.7L87 59.5L88 59.5L89 59.5L90 59.4L91 59.4L92 59.2L93 59.3L94 59.3L95 59.1L96 59L97 59L98 59L99 58.9L100 58.8L101 58.8L102 58.8L103 58.6L104 58.7L105 58.6L106 58.5L107 58.5L108 58.4L109 58.3L110 58.2L111 58.2L112 58.1L113 58L114 58.1L115 57.9L116 57.7L117 57.7L118 57.9L119 57.7L120 57.5L121 57.6L122 57.4L123 57.4L124 57.4L125 57.3L126 57L127 57.1L128 57.1L129 56.9L130 56.8L131 56.8L132 56.6L133 56.8L134 56.7L135 56.4L136 56.3L137 56.4L138 56.4L139 56.4L140 56.1L141 56.2L142 56L143 56L144 55.8L145 55.7L146 55.7L147 55.6L148 55.8L149 55.6L150 55.5L151 55.5L152 55.5L153 55L154 55L155 55.2L156 54.8L157 55L158 54.7L159 54.9L160 54.6L161 54.5L162 54.5L163 54.6L164 54.2L165 54.5L166 54.2L167 54L168 54L169 54.1L170 54.1L170 67.9L169 67.9L168 68L167 68L166 67.8L165 67.5L164 67.8L163 67.4L162 67.5L161 67.5L160 67.4L159 67.1L158 67.3L157 67L156 67.2L155 66.8L154 67L153 67L152 66.5L151 66.5L150 66.5L149 66.4L148 66.2L147 66.4L146 66.3L145 66.3L144 66.2L143 66L142 66L141 65.8L140 65.9L139 65.6L138 65.6L137 65.6L136 65.7L135 65.6L134 65.3L133 65.2L132 65.4L131 65.2L130 65.2L129 65.1L128 64.9L127 64.9L126 65L125 64.7L124 64.6L123 64.6L122 64.6L121 64.4L120 64.5L119 64.3L118 64.1L117 64.3L116 64.3L115 64.1L114 63.9L113 64L112 63.9L111 63.8L110 63.8L109 63.7L108 63.6L107 63.5L106 63.5L105 63.4L104 63.3L103 63.4L102 63.2L101 63.2L100 63.2L99 63.1L98 63L97 63L96 63L95 62.9L94 62.7L93 62.7L92 62.8L91 62.6L90 62.6L89 62.5L88 62.5L87 62.5L86 62.3L85 62.4L84 62.3L83 62.2L82 62.2L81 62.2L80 62L79 62L78 62.1L77 62.1L76 62L75 61.8L74 61.8L73 61.9L72 61.9L71 61.8L70 61.8L69 61.8L68 61.8L67 61.8L66 61.8L65 61.8L64 61.8L63 61.8L62 61.8L61 61.8L60 61.8L59 61.8L58 61.8L57 61.8L56 61.8L55 61.8L54 61.8L53 61.8L52 61.8L51 61.8L50 61.8L49 61.8L48 61.8L47 61.8L46 61.8L45 61.8L44 61.8L43 61.8L42 61.8L41 61.8L40 61.8L39 61.8L38 61.8L37 61.8L36 61.8L35 61.8L34 61.8L33 61.8L32 61.8L31 61.8L30 61.8L29 61.8L28 61.8L27 61.8L26 61.8L25 61.8L24 61.8L23 61.8L22 61.8L21 61.8L20 61.8L19 61.8L18 61.8L17 61.8L16 61.8L15 61.8L14 61.8L13 61.8L12 61.8L11 61.8L10 61.8L9 61.8L8 61.8L7 61.8L6 61.8L5 61.8L4 61.8L3 61.8L2 61.8L1 61.8L0 61.8Z"/></g></svg></div>
<div class="r t k_fx_3" style="top:1136px"><i class="c" style="left:438px;width:10px">fx_3</i><i class="c" style="left:480px;width:12px">fx_3</i><i class="c" style="left:524px;width:8px"></i><i class="c" style="left:538px;width:8px"></i><i class="c" style="left:546px;width:6px"></i><i class="c" style="left:558px;width:8px"></i><i class="c" style="left:566px;width:8px"></i><i class="c" style="left:580px;width:8px"></i><i class="c" style="left:588px;width:8px"></i><i class="c" style="left:600px;width:8px"></i><i class="c" style="left:1610px;width:10px">fx_3</i><i class="c" style="left:1652px;width:12px">fx_3</i><i class="c" style="left:1696px;width:8px"></i><i class="c" style="left:1710px;width:8px"></i><i class="c" style="left:1718px;width:6px"></i><i class="c" style="left:1730px;width:8px"></i><i class="c" style="left:1738px;width:8px"></i><i class="c" style="left:1752px;width:8px"></i><i class="c" style="left:1760px;width:8px"></i><i class="c" style="left:1772px;width:8px"></i><svg width="2270" height="70" viewBox="0 0 2270 70"><path d="M1717 34v36" stroke="#000" stroke-opacity=".22" stroke-width="2" fill="none"/><g fill="#1f2025"><path transform="translate(440)" d="M0 34.4L1 34.4L2 34.4L3 34.4L4 34.4L5 36.3L6 37.4L7 39.4L8 39.4L8 46.6L7 46.6L6 48.6L5 49.7L4 51.6L3 51.6L2 51.6L1 51.6L0 51.6ZM0 52.4L1 52.4L2 52.4L3 52.4L4 52.4L5 54.3L6 55.4L7 57.4L8 57.4L8 64.6L7 64.6L6 66.6L5 67.7L4 69.6L3 69.6L2 69.6L1 69.6L0 69.6Z"/><path transform="translate(482)" d="M0 34.4L1 34.4L2 34.4L3 34.4L4 34.4L5 34.4L6 35.6L7 36.5L8 38.2L9 39.8L10 39.8L10 46.2L9 46.2L8 47.8L7 49.5L6 50.4L5 51.6L4 51.6L3 51.6L2 51.6L1 51.6L0 51.6ZM0 52.4L1 52.4L2 52.4L3 52.4L4 52.4L5 52.4L6 53.6L7 54.5L8 56.2L9 57.8L10 57.8L10 64.2L9 64.2L8 65.8L7 67.5L6 68.4L5 69.6L4 69.6L3 69.6L2 69.6L1 69.6L0 69.6Z"/><path transform="translate(526)" d="M0 34.4L1 34.4L2 34.4L3 34.4L4 36.8L5 38.8L6 38.8L6 47.2L5 47.2L4 49.2L3 51.6L2 51.6L1 51.6L0 51.6ZM0 52.4L1 52.4L2 52.4L3 52.4L4 54.8L5 56.8L6 56.8L6 65.2L5 65.2L4 67.2L3 69.6L2 69.6L1 69.6L0 69.6Z"/><path transform="translate(540)" d="M0 34.4L1 34.4L2 34.4L3 34.4L4 36.8L5 39.1L6 39.1L6 46.9L5 46.9L4 49.2L3 51.6L2 51.6L1 51.6L0 51.6ZM0 52.4L1 52.4L2 52.4L3 52.4L4 54.8L5 57.1L6 57.1L6 64.9L5 64.9L4 67.2L3 69.6L2 69.6L1 69.6L0 69.6Z"/><path transform="translate(548)" d="M0 34.4L1 34.4L2 35.4L3 38.4L4 38.4L4 47.6L3 47.6L2 50.6L1 51.6L0 51.6ZM0 52.4L1 52.4L2 53.4L3 56.4L4 56.4L4 65.6L3 65.6L2 68.6L1 69.6L0 69.6Z"/><path transform="translate(560)" d="M0 34.4L1 34.4L2 34.4L3 34.4L4 37.1L5 38.9L6 38.9L6 47.1L5 47.1L4 48.9L3 51.6L2 51.6L1 51.6L0 51.6ZM0 52.4L1 52.4L2 52.4L3 52.4L4 55.1L5 56.9L6 56.9L6 65.1L5 65.1L4 66.9L3 69.6L2 69.6L1 69.6L0 69.6Z"/><path transform="translate(568)" d="M0 34.4L1 34.4L2 34.4L3 34.4L4 37L5 39.1L6 39.1L6 46.9L5 46.9L4 49L3 51.6L2 51.6L1 51.6L0 51.6ZM0 52.4L1 52.4L2 52.4L3 52.4L4 55L5 57.1L6 57.1L6 64.9L5 64.9L4 67L3 69.6L2 69.6L1 69.6L0 69.6Z"/><path transform="translate(582)" d="M0 34.4L1 34.4L2 34.4L3 34.4L4 37L5 39.4L6 39.4L6 46.6L5 46.6L4 49L3 51.6L2 51.6L1 51.6L0 51.6ZM0 52.4L1 52.4L2 52.4L3 52.4L4 55L5 57.4L6 57.4L6 64.6L5 64.6L4 67L3 69.6L2 69.6L1 69.6L0 69.6Z"/><path transform="translate(590)" d="M0 34.4L1 34.4L2 34.4L3 34.4L4 36.6L5 38.6L6 38.6L6 47.4L5 47.4L4 49.4L3 51.6L2 51.6L1 51.6L0 51.6ZM0 52.4L1 52.4L2 52.4L3 52.4L4 54.6L5 56.6L6 56.6L6 65.4L5 65.4L4 67.4L3 69.6L2 69.6L1 69.6L0 69.6Z"/><path transform="translate(602)" d="M0 34.4L1 34.4L2 34.4L3 34.4L4 36.5L5 39.1L6 39.1L6 46.9L5 46.9L4 49.5L3 51.6L2 51.6L1 51.6L0 51.6ZM0 52.4L1 52.4L2 52.4L3 52.4L4 54.5L5 57.1L6 57.1L6 64.9L5 64.9L4 67.5L3 69.6L2 69.6L1 69.6L0 69.6Z"/><path transform="translate(1612)" d="M0 34.4L1 34.4L2 34.4L3 34.4L4 34.4L5 36.3L6 37.4L7 39.4L8 39.4L8 46.6L7 46.6L6 48.6L5 49.7L4 51.6L3 51.6L2 51.6L1 51.6L0 51.6ZM0 52.4L1 52.4L2 52.4L3 52.4L4 52.4L5 54.3L6 55.4L7 57.4L8 57.4L8 64.6L7 64.6L6 66.6L5 67.7L4 69.6L3 69.6L2 69.6L1 69.6L0 69.6Z"/><path transform="translate(1654)" d="M0 34.4L1 34.4L2 34.4L3 34.4L4 34.4L5 34.4L6 35.6L7 36.5L8 38.2L9 39.8L10 39.8L10 46.2L9 46.2L8 47.8L7 49.5L6 50.4L5 51.6L4 51.6L3 51.6L2 51.6L1 51.6L0 51.6ZM0 52.4L1 52.4L2 52.4L3 52.4L4 52.4L5 52.4L6 53.6L7 54.5L8 56.2L9 57.8L10 57.8L10 64.2L9 64.2L8 65.8L7 67.5L6 68.4L5 69.6L4 69.6L3 69.6L2 69.6L1 69.6L0 69.6Z"/><path transform="translate(1698)" d="M0 34.4L1 34.4L2 34.4L3 34.4L4 36.8L5 38.8L6 38.8L6 47.2L5 47.2L4 49.2L3 51.6L2 51.6L1 51.6L0 51.6ZM0 52.4L1 52.4L2 52.4L3 52.4L4 54.8L5 56.8L6 56.8L6 65.2L5 65.2L4 67.2L3 69.6L2 69.6L1 69.6L0 69.6Z"/><path transform="translate(1712)" d="M0 34.4L1 34.4L2 34.4L3 34.4L4 36.8L5 39.1L6 39.1L6 46.9L5 46.9L4 49.2L3 51.6L2 51.6L1 51.6L0 51.6ZM0 52.4L1 52.4L2 52.4L3 52.4L4 54.8L5 57.1L6 57.1L6 64.9L5 64.9L4 67.2L3 69.6L2 69.6L1 69.6L0 69.6Z"/><path transform="translate(1720)" d="M0 34.4L1 34.4L2 35.4L3 38.4L4 38.4L4 47.6L3 47.6L2 50.6L1 51.6L0 51.6ZM0 52.4L1 52.4L2 53.4L3 56.4L4 56.4L4 65.6L3 65.6L2 68.6L1 69.6L0 69.6Z"/><path transform="translate(1732)" d="M0 34.4L1 34.4L2 34.4L3 34.4L4 37.1L5 38.9L6 38.9L6 47.1L5 47.1L4 48.9L3 51.6L2 51.6L1 51.6L0 51.6ZM0 52.4L1 52.4L2 52.4L3 52.4L4 55.1L5 56.9L6 56.9L6 65.1L5 65.1L4 66.9L3 69.6L2 69.6L1 69.6L0 69.6Z"/><path transform="translate(1740)" d="M0 34.4L1 34.4L2 34.4L3 34.4L4 37L5 39.1L6 39.1L6 46.9L5 46.9L4 49L3 51.6L2 51.6L1 51.6L0 51.6ZM0 52.4L1 52.4L2 52.4L3 52.4L4 55L5 57.1L6 57.1L6 64.9L5 64.9L4 67L3 69.6L2 69.6L1 69.6L0 69.6Z"/><path transform="translate(1754)" d="M0 34.4L1 34.4L2 34.4L3 34.4L4 37L5 39.4L6 39.4L6 46.6L5 46.6L4 49L3 51.6L2 51.6L1 51.6L0 51.6ZM0 52.4L1 52.4L2 52.4L3 52.4L4 55L5 57.4L6 57.4L6 64.6L5 64.6L4 67L3 69.6L2 69.6L1 69.6L0 69.6Z"/><path transform="translate(1762)" d="M0 34.4L1 34.4L2 34.4L3 34.4L4 36.6L5 38.6L6 38.6L6 47.4L5 47.4L4 49.4L3 51.6L2 51.6L1 51.6L0 51.6ZM0 52.4L1 52.4L2 52.4L3 52.4L4 54.6L5 56.6L6 56.6L6 65.4L5 65.4L4 67.4L3 69.6L2 69.6L1 69.6L0 69.6Z"/><path transform="translate(1774)" d="M0 34.4L1 34.4L2 34.4L3 34.4L4 36.5L5 39.1L6 39.1L6 46.9L5 46.9L4 49.5L3 51.6L2 51.6L1 51.6L0 51.6ZM0 52.4L1 52.4L2 52.4L3 52.4L4 54.5L5 57.1L6 57.1L6 64.9L5 64.9L4 67.5L3 69.6L2 69.6L1 69.6L0 69.6Z"/></g></svg></div>
<div class="r t k_riser_2" style="top:1210px"><i class="c" style="left:1120px;width:342px">riser_2</i><svg width="2270" height="70" viewBox="0 0 2270 70"><path d="M1163 34v36M1207 34v36M1249 34v36M1291 34v36M1335 34v36M1377 34v36M1419 34v36" stroke="#000" stroke-opacity=".22" stroke-width="2" fill="none"/><g fill="#1f2025"><path fill="#000" fill-opacity=".17" d="M1122 34H1462Q1363 50 1244 70H1122Z"/><path transform="translate(1122)" d="M0 42.2L1 42.2L2 42.2L3 42.2L4 42.2L5 42.2L6 42.2L7 42.2L8 42.2L9 42.2L10 42.2L11 42.2L12 42.2L13 42.2L14 42.2L15 42.2L16 42.2L17 42.2L18 42.2L19 42.2L20 42.2L21 42.2L22 42.2L23 42.2L24 42.2L25 42.2L26 42.2L27 42.2L28 42.2L29 42.2L30 42.2L31 42.2L32 42.2L33 42.2L34 42.2L35 42.2L36 42.2L37 42.2L38 42.2L39 42.2L40 42.2L41 42.2L42 42.2L43 42.2L44 42.2L45 42.2L46 42.2L47 42.2L48 42.2L49 42.2L50 42.2L51 42.2L52 42.2L53 42.2L54 42.2L55 42.2L56 42.2L57 42.2L58 42.2L59 42.2L60 42.2L61 42.2L62 42.2L63 42.2L64 42.2L65 42.2L66 42.2L67 42.2L68 42.2L69 42.2L70 42.2L71 42.2L72 42.2L73 42.2L74 42.2L75 42.2L76 42.2L77 42.2L78 42.2L79 42.2L80 42.2L81 42.2L82 42.2L83 42.2L84 42.2L85 42.2L86 42.2L87 42.2L88 42.2L89 42.2L90 42.2L91 42.2L92 42.2L93 42.2L94 42.2L95 42.2L96 42.2L97 42.2L98 42.2L99 42.2L100 42.2L101 42.2L102 42.2L103 42.2L104 42.2L105 42.2L106 42.2L107 42.2L108 42.2L109 42.2L110 42.2L111 42.1L112 42.2L113 42.2L114 42.2L115 42.1L116 42.2L117 42.2L118 42.2L119 42.2L120 42.2L121 42.1L122 42.2L123 42.2L124 42.2L125 42.2L126 42.2L127 42.2L128 42.1L129 42.2L130 42.2L131 42.2L132 42.1L133 42.1L134 42.2L135 42.1L136 42.2L137 42.2L138 42.2L139 42.2L140 42.2L141 42.2L142 42.2L143 42.2L144 42.1L145 42.2L146 42.2L147 42.2L148 42.1L149 42L150 42.1L151 41.9L152 42.1L153 42.1L154 42.1L155 42L156 42L157 41.9L158 41.9L159 41.8L160 42L161 41.8L162 41.7L163 41.8L164 41.7L165 41.8L166 41.6L167 41.7L168 41.5L169 41.5L170 41.6L171 41.5L172 41.7L173 41.4L174 41.5L175 41.5L176 41.4L177 41.4L178 41.3L179 41.4L180 41.3L181 41.3L182 41.3L183 41.4L184 41.3L185 41.2L186 41.3L187 41.2L188 41L189 41.1L190 41L191 40.9L192 40.9L193 40.9L194 41L195 41L196 40.8L197 40.8L198 40.8L199 40.7L200 40.9L201 40.7L202 40.8L203 40.7L204 40.6L205 40.6L206 40.6L207 40.7L208 40.4L209 40.6L210 40.5L211 40.5L212 40.3L213 40.2L214 40.2L215 40.4L216 40.3L217 40.3L218 40.3L219 40.2L220 40.3L221 40.1L222 40.2L223 40L224 40.1L225 40.1L226 39.9L227 40L228 39.9L229 39.7L230 39.8L231 39.9L232 39.6L233 39.6L234 39.7L235 39.6L236 39.5L237 39.6L238 39.4L239 39.6L240 39.4L241 39.5L242 39.6L243 39.5L244 39.3L245 39.5L246 39.1L247 39.1L248 39.3L249 39.2L250 39L251 39.1L252 39.1L253 39.2L254 39.2L255 39L256 38.9L257 38.9L258 38.9L259 38.7L260 38.9L261 38.7L262 38.6L263 38.7L264 38.6L265 38.6L266 38.8L267 38.5L268 38.4L269 38.5L270 38.3L271 38.3L272 38.3L273 38.2L274 38.4L275 38.2L276 38.4L277 38.2L278 38.2L279 38L280 37.9L281 38.2L282 38.2L283 38L284 37.9L285 38L286 37.9L287 37.8L288 38L289 37.8L290 37.9L291 37.8L292 37.7L293 37.6L294 37.4L295 37.7L296 37.3L297 37.5L298 37.5L299 37.3L300 37.6L301 37.2L302 37.2L303 37.3L304 37.3L305 37.3L306 37.2L307 37.2L308 37.1L309 37.1L310 36.8L311 37.1L312 36.8L313 37.1L314 36.7L315 37L316 37L317 36.7L318 36.7L319 36.5L320 36.5L321 36.5L322 36.6L323 36.6L324 36.7L325 36.7L326 36.3L327 36.3L328 36.2L329 36.4L330 36.1L331 36.1L332 36.1L333 36.3L334 36L335 36.2L336 36.2L337 35.8L338 35.9L339 35.7L340 35.7L340 50.3L339 50.3L338 50.1L337 50.2L336 49.8L335 49.8L334 50L333 49.7L332 49.9L331 49.9L330 49.9L329 49.6L328 49.8L327 49.7L326 49.7L325 49.3L324 49.3L323 49.4L322 49.4L321 49.5L320 49.5L319 49.5L318 49.3L317 49.3L316 49L315 49L314 49.3L313 48.9L312 49.2L311 48.9L310 49.2L309 48.9L308 48.9L307 48.8L306 48.8L305 48.7L304 48.7L303 48.7L302 48.8L301 48.8L300 48.4L299 48.7L298 48.5L297 48.5L296 48.7L295 48.3L294 48.6L293 48.4L292 48.3L291 48.2L290 48.1L289 48.2L288 48L287 48.2L286 48.1L285 48L284 48.1L283 48L282 47.8L281 47.8L280 48.1L279 48L278 47.8L277 47.8L276 47.6L275 47.8L274 47.6L273 47.8L272 47.7L271 47.7L270 47.7L269 47.5L268 47.6L267 47.5L266 47.2L265 47.4L264 47.4L263 47.3L262 47.4L261 47.3L260 47.1L259 47.3L258 47.1L257 47.1L256 47.1L255 47L254 46.8L253 46.8L252 46.9L251 46.9L250 47L249 46.8L248 46.7L247 46.9L246 46.9L245 46.5L244 46.7L243 46.5L242 46.4L241 46.5L240 46.6L239 46.4L238 46.6L237 46.4L236 46.5L235 46.4L234 46.3L233 46.4L232 46.4L231 46.1L230 46.2L229 46.3L228 46.1L227 46L226 46.1L225 45.9L224 45.9L223 46L222 45.8L221 45.9L220 45.7L219 45.8L218 45.7L217 45.7L216 45.7L215 45.6L214 45.8L213 45.8L212 45.7L211 45.5L210 45.5L209 45.4L208 45.6L207 45.3L206 45.4L205 45.4L204 45.4L203 45.3L202 45.2L201 45.3L200 45.1L199 45.3L198 45.2L197 45.2L196 45.2L195 45L194 45L193 45.1L192 45.1L191 45.1L190 45L189 44.9L188 45L187 44.8L186 44.7L185 44.8L184 44.7L183 44.6L182 44.7L181 44.7L180 44.7L179 44.6L178 44.7L177 44.6L176 44.6L175 44.5L174 44.5L173 44.6L172 44.3L171 44.5L170 44.4L169 44.5L168 44.5L167 44.3L166 44.4L165 44.2L164 44.3L163 44.2L162 44.3L161 44.2L160 44L159 44.2L158 44.1L157 44.1L156 44L155 44L154 43.9L153 43.9L152 43.9L151 44.1L150 43.9L149 44L148 43.9L147 43.8L146 43.8L145 43.8L144 43.9L143 43.8L142 43.8L141 43.8L140 43.8L139 43.8L138 43.8L137 43.8L136 43.8L135 43.9L134 43.8L133 43.9L132 43.9L131 43.8L130 43.8L129 43.8L128 43.9L127 43.8L126 43.8L125 43.8L124 43.8L123 43.8L122 43.8L121 43.9L120 43.8L119 43.8L118 43.8L117 43.8L116 43.8L115 43.9L114 43.8L113 43.8L112 43.8L111 43.9L110 43.8L109 43.8L108 43.8L107 43.8L106 43.8L105 43.8L104 43.8L103 43.8L102 43.8L101 43.8L100 43.8L99 43.8L98 43.8L97 43.8L96 43.8L95 43.8L94 43.8L93 43.8L92 43.8L91 43.8L90 43.8L89 43.8L88 43.8L87 43.8L86 43.8L85 43.8L84 43.8L83 43.8L82 43.8L81 43.8L80 43.8L79 43.8L78 43.8L77 43.8L76 43.8L75 43.8L74 43.8L73 43.8L72 43.8L71 43.8L70 43.8L69 43.8L68 43.8L67 43.8L66 43.8L65 43.8L64 43.8L63 43.8L62 43.8L61 43.8L60 43.8L59 43.8L58 43.8L57 43.8L56 43.8L55 43.8L54 43.8L53 43.8L52 43.8L51 43.8L50 43.8L49 43.8L48 43.8L47 43.8L46 43.8L45 43.8L44 43.8L43 43.8L42 43.8L41 43.8L40 43.8L39 43.8L38 43.8L37 43.8L36 43.8L35 43.8L34 43.8L33 43.8L32 43.8L31 43.8L30 43.8L29 43.8L28 43.8L27 43.8L26 43.8L25 43.8L24 43.8L23 43.8L22 43.8L21 43.8L20 43.8L19 43.8L18 43.8L17 43.8L16 43.8L15 43.8L14 43.8L13 43.8L12 43.8L11 43.8L10 43.8L9 43.8L8 43.8L7 43.8L6 43.8L5 43.8L4 43.8L3 43.8L2 43.8L1 43.8L0 43.8ZM0 60.2L1 60.2L2 60.2L3 60.2L4 60.2L5 60.2L6 60.2L7 60.2L8 60.2L9 60.2L10 60.2L11 60.2L12 60.2L13 60.2L14 60.2L15 60.2L16 60.2L17 60.2L18 60.2L19 60.2L20 60.2L21 60.2L22 60.2L23 60.2L24 60.2L25 60.2L26 60.2L27 60.2L28 60.2L29 60.2L30 60.2L31 60.2L32 60.2L33 60.2L34 60.2L35 60.2L36 60.2L37 60.2L38 60.2L39 60.2L40 60.2L41 60.2L42 60.2L43 60.2L44 60.2L45 60.2L46 60.2L47 60.2L48 60.2L49 60.2L50 60.2L51 60.2L52 60.2L53 60.2L54 60.2L55 60.2L56 60.2L57 60.2L58 60.2L59 60.2L60 60.2L61 60.2L62 60.2L63 60.2L64 60.2L65 60.2L66 60.2L67 60.2L68 60.2L69 60.2L70 60.2L71 60.2L72 60.2L73 60.2L74 60.2L75 60.2L76 60.2L77 60.2L78 60.2L79 60.2L80 60.2L81 60.2L82 60.2L83 60.2L84 60.2L85 60.2L86 60.2L87 60.2L88 60.2L89 60.2L90 60.2L91 60.2L92 60.2L93 60.2L94 60.2L95 60.2L96 60.2L97 60.2L98 60.2L99 60.2L100 60.2L101 60.2L102 60.2L103 60.2L104 60.2L105 60.2L106 60.2L107 60.2L108 60.2L109 60.2L110 60.2L111 60.1L112 60.2L113 60.2L114 60.2L115 60.1L116 60.2L117 60.2L118 60.2L119 60.2L120 60.2L121 60.1L122 60.2L123 60.2L124 60.2L125 60.2L126 60.2L127 60.2L128 60.1L129 60.2L130 60.2L131 60.2L132 60.1L133 60.1L134 60.2L135 60.1L136 60.2L137 60.2L138 60.2L139 60.2L140 60.2L141 60.2L142 60.2L143 60.2L144 60.1L145 60.2L146 60.2L147 60.2L148 60.1L149 60L150 60.1L151 59.9L152 60.1L153 60.1L154 60.1L155 60L156 60L157 59.9L158 59.9L159 59.8L160 60L161 59.8L162 59.7L163 59.8L164 59.7L165 59.8L166 59.6L167 59.7L168 59.5L169 59.5L170 59.6L171 59.5L172 59.7L173 59.4L174 59.5L175 59.5L176 59.4L177 59.4L178 59.3L179 59.4L180 59.3L181 59.3L182 59.3L183 59.4L184 59.3L185 59.2L186 59.3L187 59.2L188 59L189 59.1L190 59L191 58.9L192 58.9L193 58.9L194 59L195 59L196 58.8L197 58.8L198 58.8L199 58.7L200 58.9L201 58.7L202 58.8L203 58.7L204 58.6L205 58.6L206 58.6L207 58.7L208 58.4L209 58.6L210 58.5L211 58.5L212 58.3L213 58.2L214 58.2L215 58.4L216 58.3L217 58.3L218 58.3L219 58.2L220 58.3L221 58.1L222 58.2L223 58L224 58.1L225 58.1L226 57.9L227 58L228 57.9L229 57.7L230 57.8L231 57.9L232 57.6L233 57.6L234 57.7L235 57.6L236 57.5L237 57.6L238 57.4L239 57.6L240 57.4L241 57.5L242 57.6L243 57.5L244 57.3L245 57.5L246 57.1L247 57.1L248 57.3L249 57.2L250 57L251 57.1L252 57.1L253 57.2L254 57.2L255 57L256 56.9L257 56.9L258 56.9L259 56.7L260 56.9L261 56.7L262 56.6L263 56.7L264 56.6L265 56.6L266 56.8L267 56.5L268 56.4L269 56.5L270 56.3L271 56.3L272 56.3L273 56.2L274 56.4L275 56.2L276 56.4L277 56.2L278 56.2L279 56L280 55.9L281 56.2L282 56.2L283 56L284 55.9L285 56L286 55.9L287 55.8L288 56L289 55.8L290 55.9L291 55.8L292 55.7L293 55.6L294 55.4L295 55.7L296 55.3L297 55.5L298 55.5L299 55.3L300 55.6L301 55.2L302 55.2L303 55.3L304 55.3L305 55.3L306 55.2L307 55.2L308 55.1L309 55.1L310 54.8L311 55.1L312 54.8L313 55.1L314 54.7L315 55L316 55L317 54.7L318 54.7L319 54.5L320 54.5L321 54.5L322 54.6L323 54.6L324 54.7L325 54.7L326 54.3L327 54.3L328 54.2L329 54.4L330 54.1L331 54.1L332 54.1L333 54.3L334 54L335 54.2L336 54.2L337 53.8L338 53.9L339 53.7L340 53.7L340 68.3L339 68.3L338 68.1L337 68.2L336 67.8L335 67.8L334 68L333 67.7L332 67.9L331 67.9L330 67.9L329 67.6L328 67.8L327 67.7L326 67.7L325 67.3L324 67.3L323 67.4L322 67.4L321 67.5L320 67.5L319 67.5L318 67.3L317 67.3L316 67L315 67L314 67.3L313 66.9L312 67.2L311 66.9L310 67.2L309 66.9L308 66.9L307 66.8L306 66.8L305 66.7L304 66.7L303 66.7L302 66.8L301 66.8L300 66.4L299 66.7L298 66.5L297 66.5L296 66.7L295 66.3L294 66.6L293 66.4L292 66.3L291 66.2L290 66.1L289 66.2L288 66L287 66.2L286 66.1L285 66L284 66.1L283 66L282 65.8L281 65.8L280 66.1L279 66L278 65.8L277 65.8L276 65.6L275 65.8L274 65.6L273 65.8L272 65.7L271 65.7L270 65.7L269 65.5L268 65.6L267 65.5L266 65.2L265 65.4L264 65.4L263 65.3L262 65.4L261 65.3L260 65.1L259 65.3L258 65.1L257 65.1L256 65.1L255 65L254 64.8L253 64.8L252 64.9L251 64.9L250 65L249 64.8L248 64.7L247 64.9L246 64.9L245 64.5L244 64.7L243 64.5L242 64.4L241 64.5L240 64.6L239 64.4L238 64.6L237 64.4L236 64.5L235 64.4L234 64.3L233 64.4L232 64.4L231 64.1L230 64.2L229 64.3L228 64.1L227 64L226 64.1L225 63.9L224 63.9L223 64L222 63.8L221 63.9L220 63.7L219 63.8L218 63.7L217 63.7L216 63.7L215 63.6L214 63.8L213 63.8L212 63.7L211 63.5L210 63.5L209 63.4L208 63.6L207 63.3L206 63.4L205 63.4L204 63.4L203 63.3L202 63.2L201 63.3L200 63.1L199 63.3L198 63.2L197 63.2L196 63.2L195 63L194 63L193 63.1L192 63.1L191 63.1L190 63L189 62.9L188 63L187 62.8L186 62.7L185 62.8L184 62.7L183 62.6L182 62.7L181 62.7L180 62.7L179 62.6L178 62.7L177 62.6L176 62.6L175 62.5L174 62.5L173 62.6L172 62.3L171 62.5L170 62.4L169 62.5L168 62.5L167 62.3L166 62.4L165 62.2L164 62.3L163 62.2L162 62.3L161 62.2L160 62L159 62.2L158 62.1L157 62.1L156 62L155 62L154 61.9L153 61.9L152 61.9L151 62.1L150 61.9L149 62L148 61.9L147 61.8L146 61.8L145 61.8L144 61.9L143 61.8L142 61.8L141 61.8L140 61.8L139 61.8L138 61.8L137 61.8L136 61.8L135 61.9L134 61.8L133 61.9L132 61.9L131 61.8L130 61.8L129 61.8L128 61.9L127 61.8L126 61.8L125 61.8L124 61.8L123 61.8L122 61.8L121 61.9L120 61.8L119 61.8L118 61.8L117 61.8L116 61.8L115 61.9L114 61.8L113 61.8L112 61.8L111 61.9L110 61.8L109 61.8L108 61.8L107 61.8L106 61.8L105 61.8L104 61.8L103 61.8L102 61.8L101 61.8L100 61.8L99 61.8L98 61.8L97 61.8L96 61.8L95 61.8L94 61.8L93 61.8L92 61.8L91 61.8L90 61.8L89 61.8L88 61.8L87 61.8L86 61.8L85 61.8L84 61.8L83 61.8L82 61.8L81 61.8L80 61.8L79 61.8L78 61.8L77 61.8L76 61.8L75 61.8L74 61.8L73 61.8L72 61.8L71 61.8L70 61.8L69 61.8L68 61.8L67 61.8L66 61.8L65 61.8L64 61.8L63 61.8L62 61.8L61 61.8L60 61.8L59 61.8L58 61.8L57 61.8L56 61.8L55 61.8L54 61.8L53 61.8L52 61.8L51 61.8L50 61.8L49 61.8L48 61.8L47 61.8L46 61.8L45 61.8L44 61.8L43 61.8L42 61.8L41 61.8L40 61.8L39 61.8L38 61.8L37 61.8L36 61.8L35 61.8L34 61.8L33 61.8L32 61.8L31 61.8L30 61.8L29 61.8L28 61.8L27 61.8L26 61.8L25 61.8L24 61.8L23 61.8L22 61.8L21 61.8L20 61.8L19 61.8L18 61.8L17 61.8L16 61.8L15 61.8L14 61.8L13 61.8L12 61.8L11 61.8L10 61.8L9 61.8L8 61.8L7 61.8L6 61.8L5 61.8L4 61.8L3 61.8L2 61.8L1 61.8L0 61.8Z"/></g></svg></div>
<div class="r t k_snare_buildu" style="top:1284px"><i class="c mut" style="left:1290px;width:168px"></i><i class="c nbw" style="left:1458px;width:4px"></i><svg width="2270" height="70" viewBox="0 0 2270 70"></svg></div>
<div id="brace"></div>
<svg width="2470" height="1484" viewBox="0 0 2470 1484"><path d="M12 66h4v2h-2v10h-2zM98 66h4v2h-2v10h-2zM182 66h4v2h-2v10h-2zM268 66h4v2h-2v10h-2zM352 66h4v2h-2v10h-2zM438 66h4v2h-2v10h-2zM524 66h4v2h-2v10h-2zM608 66h4v2h-2v10h-2zM694 66h4v2h-2v10h-2zM780 66h4v2h-2v10h-2zM864 66h4v2h-2v10h-2zM950 66h4v2h-2v10h-2zM1034 66h4v2h-2v10h-2zM1120 66h4v2h-2v10h-2zM1206 66h4v2h-2v10h-2zM1290 66h4v2h-2v10h-2zM1376 66h4v2h-2v10h-2zM1462 66h4v2h-2v10h-2zM1546 66h4v2h-2v10h-2zM1632 66h4v2h-2v10h-2zM1716 66h4v2h-2v10h-2zM1802 66h4v2h-2v10h-2zM1888 66h4v2h-2v10h-2zM1972 66h4v2h-2v10h-2zM2058 66h4v2h-2v10h-2zM2142 66h4v2h-2v10h-2zM2228 66h2v12h-2zM2270 76h2v2h-2zM54 76h2v2h-2zM140 76h2v2h-2zM226 76h2v2h-2zM310 76h2v2h-2zM396 76h2v2h-2zM480 76h2v2h-2zM566 76h2v2h-2zM652 76h2v2h-2zM736 76h2v2h-2zM822 76h2v2h-2zM908 76h2v2h-2zM992 76h2v2h-2zM1078 76h2v2h-2zM1162 76h2v2h-2zM1248 76h2v2h-2zM1334 76h2v2h-2zM1418 76h2v2h-2zM1504 76h2v2h-2zM1588 76h2v2h-2zM1674 76h2v2h-2zM1760 76h2v2h-2zM1844 76h2v2h-2zM1930 76h2v2h-2zM2016 76h2v2h-2zM2100 76h2v2h-2zM2186 76h2v2h-2z" fill="#828282"/><path d="M14 80L30 89L14 98" fill="none" stroke="#979797" stroke-width="1.6"/><path d="M2250 80L2234 89L2250 98" fill="none" stroke="#979797" stroke-width="1.6"/><rect x="2250" y="78" width="2" height="1358" fill="#979797"/><rect x="12" y="78" width="2" height="1352" fill="#929292"/><rect x="12" y="1392" width="2" height="34" fill="#6fcfe6"/><path d="M14 116h6.5l-6.5 7z" fill="#4fc3e0"/><path d="M12 1432l8 8h-8z" fill="#4fc3e0"/><path d="M12 1444h4v2h-4zM74 1430h2v4h-2zM136 1430h2v4h-2zM198 1430h2v14h2v2h-4zM260 1430h2v4h-2zM322 1430h2v4h-2zM384 1430h2v14h2v2h-4zM448 1430h2v4h-2zM510 1430h2v4h-2zM572 1430h2v14h2v2h-4zM634 1430h2v4h-2zM696 1430h2v4h-2zM758 1430h2v14h2v2h-4zM820 1430h2v4h-2zM882 1430h2v4h-2zM944 1430h2v14h2v2h-4zM1006 1430h2v4h-2zM1068 1430h2v4h-2zM1130 1430h2v14h2v2h-4zM1192 1430h2v4h-2zM1256 1430h2v4h-2zM1318 1430h2v14h2v2h-4zM1380 1430h2v4h-2zM1442 1430h2v4h-2zM1504 1430h2v14h2v2h-4zM1566 1430h2v4h-2zM1628 1430h2v4h-2zM1690 1430h2v14h2v2h-4zM1752 1430h2v4h-2zM1814 1430h2v4h-2zM1876 1430h2v14h2v2h-4zM1938 1430h2v4h-2zM2000 1430h2v4h-2zM2064 1430h2v14h2v2h-4zM2126 1430h2v4h-2zM2188 1430h2v4h-2z" fill="#7e7e7e"/></svg>
<u class="rl" style="left:22px">1</u>
<u class="rl" style="left:108px">5</u>
<u class="rl" style="left:192px">9</u>
<u class="rl" style="left:278px">13</u>
<u class="rl" style="left:362px">17</u>
<u class="rl" style="left:448px">21</u>
<u class="rl" style="left:534px">25</u>
<u class="rl" style="left:618px">29</u>
<u class="rl" style="left:704px">33</u>
<u class="rl" style="left:790px">37</u>
<u class="rl" style="left:874px">41</u>
<u class="rl" style="left:960px">45</u>
<u class="rl" style="left:1044px">49</u>
<u class="rl" style="left:1130px">53</u>
<u class="rl" style="left:1216px">57</u>
<u class="rl" style="left:1300px">61</u>
<u class="rl" style="left:1386px">65</u>
<u class="rl" style="left:1472px">69</u>
<u class="rl" style="left:1556px">73</u>
<u class="rl" style="left:1642px">77</u>
<u class="rl" style="left:1726px">81</u>
<u class="rl" style="left:1812px">85</u>
<u class="rl" style="left:1898px">89</u>
<u class="rl" style="left:1982px">93</u>
<u class="rl" style="left:2068px">97</u>
<u class="rl" style="left:2152px">101</u>
<u class="tl" style="left:18px">0:00</u>
<u class="tl" style="left:204px">0:15</u>
<u class="tl" style="left:390px">0:30</u>
<u class="tl" style="left:578px">0:45</u>
<u class="tl" style="left:764px">1:00</u>
<u class="tl" style="left:950px">1:15</u>
<u class="tl" style="left:1136px">1:30</u>
<u class="tl" style="left:1324px">1:45</u>
<u class="tl" style="left:1510px">2:00</u>
<u class="tl" style="left:1696px">2:15</u>
<u class="tl" style="left:1882px">2:30</u>
<u class="tl" style="left:2070px">2:45</u>
<div class="h k_kick" style="top:128px"><svg width="40" height="34" viewBox="0 0 40 34"><circle cx="19" cy="17" r="11.8" fill="none" stroke="currentColor" stroke-width="2"/><path d="M16 10.5v13l9.2-6.5z" fill="currentColor"/></svg>kick</div>
<div class="h k_kick_2" style="top:166px"><svg width="40" height="34" viewBox="0 0 40 34"><circle cx="19" cy="17" r="11.8" fill="none" stroke="currentColor" stroke-width="2"/><path d="M16 10.5v13l9.2-6.5z" fill="currentColor"/></svg>kick_2</div>
<div class="h k_kick_3" style="top:204px"><svg width="40" height="34" viewBox="0 0 40 34"><circle cx="19" cy="17" r="11.8" fill="none" stroke="currentColor" stroke-width="2"/><path d="M16 10.5v13l9.2-6.5z" fill="currentColor"/></svg>kick_3</div>
<div class="h k_snare" style="top:242px"><svg width="40" height="34" viewBox="0 0 40 34"><circle cx="19" cy="17" r="11.8" fill="none" stroke="currentColor" stroke-width="2"/><path d="M16 10.5v13l9.2-6.5z" fill="currentColor"/></svg>snare</div>
<div class="h k_snare_2" style="top:280px"><svg width="40" height="34" viewBox="0 0 40 34"><circle cx="19" cy="17" r="11.8" fill="none" stroke="currentColor" stroke-width="2"/><path d="M16 10.5v13l9.2-6.5z" fill="currentColor"/></svg>snare_2</div>
<div class="h k_top_loop" style="top:318px"><svg width="40" height="34" viewBox="0 0 40 34"><circle cx="19" cy="17" r="11.8" fill="none" stroke="currentColor" stroke-width="2"/><path d="M16 10.5v13l9.2-6.5z" fill="currentColor"/></svg>top_loop</div>
<div class="h k_hat" style="top:356px"><svg width="40" height="34" viewBox="0 0 40 34"><circle cx="19" cy="17" r="11.8" fill="none" stroke="currentColor" stroke-width="2"/><path d="M16 10.5v13l9.2-6.5z" fill="currentColor"/></svg>hat</div>
<div class="h k_clap" style="top:394px"><svg width="40" height="34" viewBox="0 0 40 34"><circle cx="19" cy="17" r="11.8" fill="none" stroke="currentColor" stroke-width="2"/><path d="M16 10.5v13l9.2-6.5z" fill="currentColor"/></svg>clap</div>
<div class="h k_percussion_l" style="top:432px"><svg width="40" height="34" viewBox="0 0 40 34"><circle cx="19" cy="17" r="11.8" fill="none" stroke="currentColor" stroke-width="2"/><path d="M16 10.5v13l9.2-6.5z" fill="currentColor"/></svg>percussion_l</div>
<div class="h t k_synth" style="top:470px"><svg width="40" height="34" viewBox="0 0 40 34"><circle cx="19" cy="17" r="11.8" fill="none" stroke="currentColor" stroke-width="2"/><path d="M12.3 14h13.4l-6.7 9.5z" fill="currentColor"/></svg>synth</div>
<div class="h t k_synth_2" style="top:544px"><svg width="40" height="34" viewBox="0 0 40 34"><circle cx="19" cy="17" r="11.8" fill="none" stroke="currentColor" stroke-width="2"/><path d="M12.3 14h13.4l-6.7 9.5z" fill="currentColor"/></svg>synth_2</div>
<div class="h t k_vocal" style="top:618px"><svg width="40" height="34" viewBox="0 0 40 34"><circle cx="19" cy="17" r="11.8" fill="none" stroke="currentColor" stroke-width="2"/><path d="M12.3 14h13.4l-6.7 9.5z" fill="currentColor"/></svg>vocal</div>
<div class="h t k_epic_drums" style="top:692px"><svg width="40" height="34" viewBox="0 0 40 34"><circle cx="19" cy="17" r="11.8" fill="none" stroke="currentColor" stroke-width="2"/><path d="M12.3 14h13.4l-6.7 9.5z" fill="currentColor"/></svg>epic_drums</div>
<div class="h t k_epic_drums_" style="top:766px"><svg width="40" height="34" viewBox="0 0 40 34"><circle cx="19" cy="17" r="11.8" fill="none" stroke="currentColor" stroke-width="2"/><path d="M12.3 14h13.4l-6.7 9.5z" fill="currentColor"/></svg>epic_drums_</div>
<div class="h t k_fx" style="top:840px"><svg width="40" height="34" viewBox="0 0 40 34"><circle cx="19" cy="17" r="11.8" fill="none" stroke="currentColor" stroke-width="2"/><path d="M12.3 14h13.4l-6.7 9.5z" fill="currentColor"/></svg>fx</div>
<div class="h t k_crash" style="top:914px"><svg width="40" height="34" viewBox="0 0 40 34"><circle cx="19" cy="17" r="11.8" fill="none" stroke="currentColor" stroke-width="2"/><path d="M12.3 14h13.4l-6.7 9.5z" fill="currentColor"/></svg>crash</div>
<div class="h t k_fx_2" style="top:988px"><svg width="40" height="34" viewBox="0 0 40 34"><circle cx="19" cy="17" r="11.8" fill="none" stroke="currentColor" stroke-width="2"/><path d="M12.3 14h13.4l-6.7 9.5z" fill="currentColor"/></svg>fx_2</div>
<div class="h t k_riser" style="top:1062px"><svg width="40" height="34" viewBox="0 0 40 34"><circle cx="19" cy="17" r="11.8" fill="none" stroke="currentColor" stroke-width="2"/><path d="M12.3 14h13.4l-6.7 9.5z" fill="currentColor"/></svg>riser</div>
<div class="h t k_fx_3" style="top:1136px"><svg width="40" height="34" viewBox="0 0 40 34"><circle cx="19" cy="17" r="11.8" fill="none" stroke="currentColor" stroke-width="2"/><path d="M12.3 14h13.4l-6.7 9.5z" fill="currentColor"/></svg>fx_3</div>
<div class="h t k_riser_2" style="top:1210px"><svg width="40" height="34" viewBox="0 0 40 34"><circle cx="19" cy="17" r="11.8" fill="none" stroke="currentColor" stroke-width="2"/><path d="M12.3 14h13.4l-6.7 9.5z" fill="currentColor"/></svg>riser_2</div>
<div class="h t k_snare_buildu" style="top:1284px"><svg width="40" height="34" viewBox="0 0 40 34"><circle cx="19" cy="17" r="11.8" fill="none" stroke="currentColor" stroke-width="2"/><path d="M12.3 14h13.4l-6.7 9.5z" fill="currentColor"/></svg>snare_buildu</div>
<div class="h" style="top:1392px;--f:#bde0ec;--t:#2c3a40;font-weight:normal;padding-left:51px"><svg width="40" height="34" viewBox="0 0 40 34"><circle cx="19" cy="17" r="11.8" fill="none" stroke="currentColor" stroke-width="2"/><path d="M16 10.5v13l9.2-6.5z" fill="currentColor"/></svg>Main</div>
<u style="left:2212px;top:1389px;font:bold 34px/38px 'Liberation Sans',sans-serif;color:#7c7c7c;letter-spacing:2.6px">2/1</u>
<div style="left:2280px;top:54px;width:58px;height:26px;border-radius:13px;background:#1e1e1e;color:#c4c4c4;font:19px/27px 'DejaVu Sans','Liberation Sans',sans-serif;-webkit-text-stroke:.5px #c4c4c4;text-align:center;text-indent:-1px">Set</div>
<div style="left:2360px;top:54px;width:46px;height:26px;background:#1e1e1e;border:2px solid #1a1a1a"><svg width="42" height="22" viewBox="0 0 42 22"><path d="M16.4 15.5L25.2 6.7" stroke="#bdbdbd" stroke-width="2.2"/><circle cx="16.4" cy="15.5" r="3.1" fill="#bdbdbd"/><circle cx="25.2" cy="6.7" r="3.1" fill="#bdbdbd"/></svg></div>
<div style="left:2414px;top:54px;width:46px;height:26px;background:#e0734f;border:2px solid #1c1c1c"><svg width="42" height="22" viewBox="0 0 42 22"><rect x="14" y="10.5" width="14" height="9" fill="#000"/><path d="M17 11V8.5a4 4 0 0 1 8 0V11" fill="none" stroke="#000" stroke-width="2.2"/></svg></div>
<div style="left:2280px;top:90px;width:26px;height:26px;border-radius:13px;background:#1e1e1e"><svg width="26" height="26" viewBox="0 0 26 26"><path d="M6 13l8-5.5v4.3h6v2.4h-6v4.3z" fill="#7a7a7a"/></svg></div>
<div style="left:2312px;top:90px;width:26px;height:26px;border-radius:13px;background:#1e1e1e"><svg width="26" height="26" viewBox="0 0 26 26"><path d="M20 13l-8-5.5v4.3h-6v2.4h6v4.3z" fill="#c4c4c4"/></svg></div>
<div style="left:2276px;top:1438px;width:30px;height:26px;background:#f5b45e;border:2px solid #1c1c1c"><svg width="26" height="22" viewBox="0 0 26 22"><path d="M5 8v6M9 5v12M13 2v18M17 5v12M21 8v6" stroke="#000" stroke-width="2" fill="none"/></svg></div>
<div style="left:2312px;top:1438px;width:70px;height:26px;background:#1e1e1e;border:2px solid #1a1a1a"><div style="left:0;top:0;width:20px;height:22px;background:#2e7487"></div><u style="left:6px;top:0;font:20px/22px 'Liberation Sans',sans-serif;color:#b4b4b4;white-space:nowrap;letter-spacing:.6px">1.00x</u></div>
<div style="left:2394px;top:1438px;width:30px;height:26px;background:#1e1e1e;border:2px solid #1a1a1a;color:#c0c0c0;font:20px/22px 'Liberation Sans',sans-serif;text-align:center">H</div>
<div style="left:2430px;top:1438px;width:30px;height:26px;background:#f5b45e;border:2px solid #1c1c1c;color:#000;font:20px/22px 'Liberation Sans',sans-serif;text-align:center">W</div>
</div></body></html>
